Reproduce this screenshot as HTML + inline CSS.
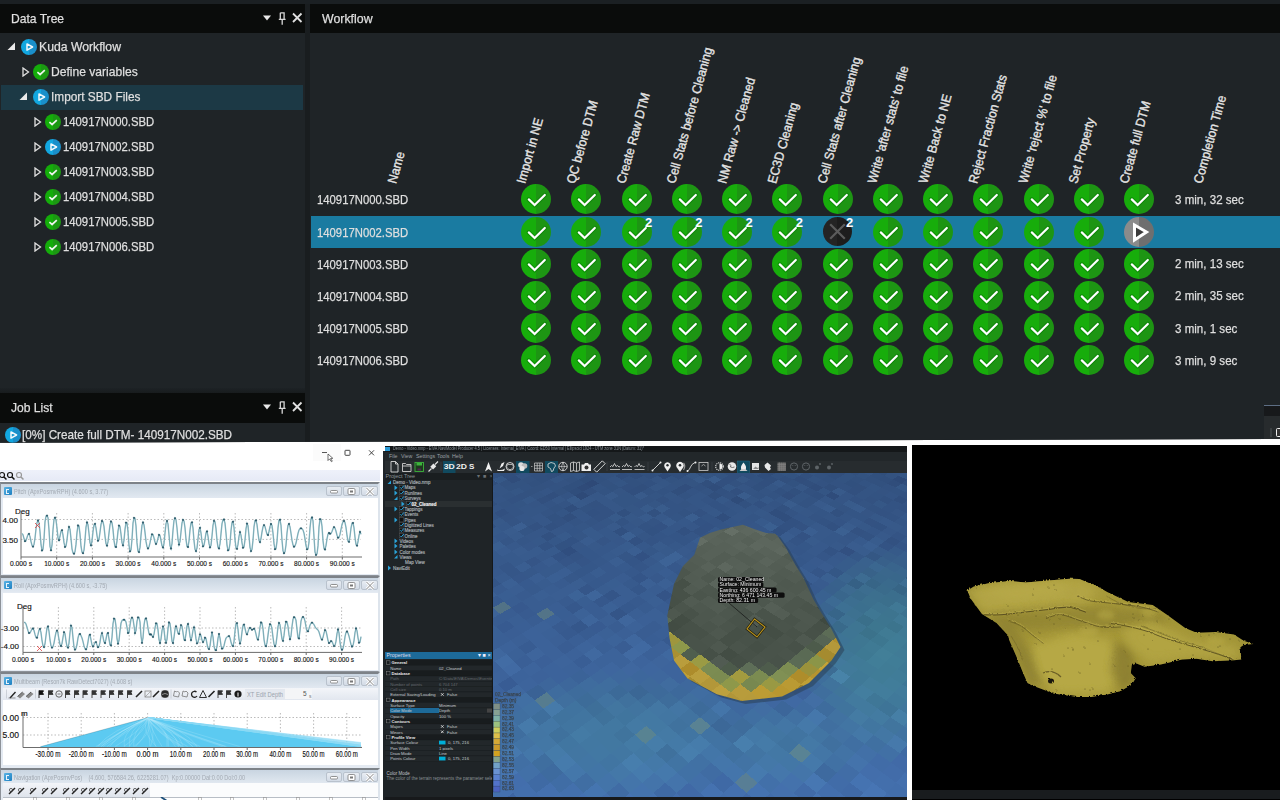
<!DOCTYPE html><html><head><meta charset="utf-8"><style>
*{margin:0;padding:0;box-sizing:border-box}
html,body{width:1280px;height:800px;overflow:hidden;background:#fff;font-family:"Liberation Sans",sans-serif}
.a{position:absolute}
.t{position:absolute;-webkit-text-stroke:.25px #d8d8d8;color:#e2e2e2;font-size:13px;white-space:nowrap;transform-origin:0 0;line-height:15px}
.ic{position:absolute;width:16px;height:16px;border-radius:50%}
.gc{background:linear-gradient(90deg,#14ad0a 50%,#1b9812 50%)}
.bc{background:linear-gradient(90deg,#12a7e0 50%,#1a8fca 50%)}
.circ{position:absolute;width:30px;height:30px;border-radius:50%;background:linear-gradient(90deg,#17ad0b 50%,#1d9513 50%)}
.ch{position:absolute;-webkit-text-stroke:.4px #dcdcdc;color:#e8e8e8;font-size:13px;white-space:nowrap;transform-origin:0 100%;line-height:15px}
</style></head><body>
<div class="a" style="left:0;top:0;width:1280px;height:443px;background:#1b2023;overflow:hidden;clip-path:polygon(0 0,1280px 0,1280px 438.9px,0 442.8px)">
<div class="a" style="left:0;top:4px;width:305px;height:439px;background:#1f2427"></div>
<div class="a" style="left:0;top:4px;width:305px;height:29px;background:#0a0c0b"></div>
<div class="t" style="left:11px;top:11px;transform:scaleX(.93)">Data Tree</div>
<svg class="a" style="left:263px;top:4px" width="42" height="29" viewBox="0 0 42 29"><path d="M0 11.5 L8 11.5 L4 16.5 Z" fill="#e8e8e8"/><path d="M17.3 8.8 h3.8 v6.2 M17.3 8.8 v6.2 M15.8 15.3 h6.8 M19.2 15.3 v5.5" fill="none" stroke="#d8d8d8" stroke-width="1.3"/><path d="M30 9.5 L38.5 18 M38.5 9.5 L30 18" stroke="#e0e0e0" stroke-width="1.8"/></svg>
<div class="a" style="left:1px;top:84.5px;width:302px;height:25px;background:#1c3945"></div>
<svg class="a" style="left:7px;top:42px" width="9" height="9"><path d="M8 0.5 L8 8 L0.5 8 Z" fill="#eaeaea"/></svg>
<div class="ic bc" style="left:21px;top:39.0px;width:16px;height:16px"></div><svg class="a" style="left:21px;top:39.0px" width="16" height="16" viewBox="0 0 16 16"><path d="M6 4.9 L11.6 8 L6 11.1 Z" fill="#1a98cf" stroke="#f2f8fc" stroke-width="1.5" stroke-linejoin="round"/></svg>
<div class="t" style="left:38.5px;top:39px;transform:scaleX(0.94)">Kuda Workflow</div>
<svg class="a" style="left:22px;top:67px" width="8" height="10"><path d="M1 1 L6.5 5 L1 9 Z" fill="none" stroke="#e0e0e0" stroke-width="1.3"/></svg>
<div class="ic gc" style="left:33px;top:64.0px;width:16px;height:16px"></div><svg class="a" style="left:33px;top:64.0px" width="16" height="16" viewBox="0 0 16 16"><path d="M4.4 8.2 L7.1 10.5 L11.8 6.2" fill="none" stroke="#eef4ee" stroke-width="1.7"/></svg>
<div class="t" style="left:50.5px;top:64px;transform:scaleX(0.93)">Define variables</div>
<svg class="a" style="left:19px;top:92px" width="9" height="9"><path d="M8 0.5 L8 8 L0.5 8 Z" fill="#eaeaea"/></svg>
<div class="ic bc" style="left:33px;top:89.0px;width:16px;height:16px"></div><svg class="a" style="left:33px;top:89.0px" width="16" height="16" viewBox="0 0 16 16"><path d="M6 4.9 L11.6 8 L6 11.1 Z" fill="#1a98cf" stroke="#f2f8fc" stroke-width="1.5" stroke-linejoin="round"/></svg>
<div class="t" style="left:50.5px;top:89px;transform:scaleX(0.91)">Import SBD Files</div>
<svg class="a" style="left:34px;top:117px" width="8" height="10"><path d="M1 1 L6.5 5 L1 9 Z" fill="none" stroke="#e0e0e0" stroke-width="1.3"/></svg>
<div class="ic gc" style="left:45px;top:114.0px;width:16px;height:16px"></div><svg class="a" style="left:45px;top:114.0px" width="16" height="16" viewBox="0 0 16 16"><path d="M4.4 8.2 L7.1 10.5 L11.8 6.2" fill="none" stroke="#eef4ee" stroke-width="1.7"/></svg>
<div class="t" style="left:62.5px;top:114px;transform:scaleX(0.87)">140917N000.SBD</div>
<svg class="a" style="left:34px;top:142px" width="8" height="10"><path d="M1 1 L6.5 5 L1 9 Z" fill="none" stroke="#e0e0e0" stroke-width="1.3"/></svg>
<div class="ic bc" style="left:45px;top:139.0px;width:16px;height:16px"></div><svg class="a" style="left:45px;top:139.0px" width="16" height="16" viewBox="0 0 16 16"><path d="M6 4.9 L11.6 8 L6 11.1 Z" fill="#1a98cf" stroke="#f2f8fc" stroke-width="1.5" stroke-linejoin="round"/></svg>
<div class="t" style="left:62.5px;top:139px;transform:scaleX(0.87)">140917N002.SBD</div>
<svg class="a" style="left:34px;top:167px" width="8" height="10"><path d="M1 1 L6.5 5 L1 9 Z" fill="none" stroke="#e0e0e0" stroke-width="1.3"/></svg>
<div class="ic gc" style="left:45px;top:164.0px;width:16px;height:16px"></div><svg class="a" style="left:45px;top:164.0px" width="16" height="16" viewBox="0 0 16 16"><path d="M4.4 8.2 L7.1 10.5 L11.8 6.2" fill="none" stroke="#eef4ee" stroke-width="1.7"/></svg>
<div class="t" style="left:62.5px;top:164px;transform:scaleX(0.87)">140917N003.SBD</div>
<svg class="a" style="left:34px;top:192px" width="8" height="10"><path d="M1 1 L6.5 5 L1 9 Z" fill="none" stroke="#e0e0e0" stroke-width="1.3"/></svg>
<div class="ic gc" style="left:45px;top:189.0px;width:16px;height:16px"></div><svg class="a" style="left:45px;top:189.0px" width="16" height="16" viewBox="0 0 16 16"><path d="M4.4 8.2 L7.1 10.5 L11.8 6.2" fill="none" stroke="#eef4ee" stroke-width="1.7"/></svg>
<div class="t" style="left:62.5px;top:189px;transform:scaleX(0.87)">140917N004.SBD</div>
<svg class="a" style="left:34px;top:217px" width="8" height="10"><path d="M1 1 L6.5 5 L1 9 Z" fill="none" stroke="#e0e0e0" stroke-width="1.3"/></svg>
<div class="ic gc" style="left:45px;top:214.0px;width:16px;height:16px"></div><svg class="a" style="left:45px;top:214.0px" width="16" height="16" viewBox="0 0 16 16"><path d="M4.4 8.2 L7.1 10.5 L11.8 6.2" fill="none" stroke="#eef4ee" stroke-width="1.7"/></svg>
<div class="t" style="left:62.5px;top:214px;transform:scaleX(0.87)">140917N005.SBD</div>
<svg class="a" style="left:34px;top:242px" width="8" height="10"><path d="M1 1 L6.5 5 L1 9 Z" fill="none" stroke="#e0e0e0" stroke-width="1.3"/></svg>
<div class="ic gc" style="left:45px;top:239.0px;width:16px;height:16px"></div><svg class="a" style="left:45px;top:239.0px" width="16" height="16" viewBox="0 0 16 16"><path d="M4.4 8.2 L7.1 10.5 L11.8 6.2" fill="none" stroke="#eef4ee" stroke-width="1.7"/></svg>
<div class="t" style="left:62.5px;top:239px;transform:scaleX(0.87)">140917N006.SBD</div>
<div class="a" style="left:0;top:387.5px;width:305px;height:5px;background:linear-gradient(#1d2225,#181c1e)"></div>
<div class="a" style="left:0;top:392.5px;width:305px;height:30px;background:#0a0c0b"></div>
<div class="t" style="left:11px;top:400px;transform:scaleX(.93)">Job List</div>
<svg class="a" style="left:263px;top:393px" width="42" height="29" viewBox="0 0 42 29"><path d="M0 11.5 L8 11.5 L4 16.5 Z" fill="#e8e8e8"/><path d="M17.3 8.8 h3.8 v6.2 M17.3 8.8 v6.2 M15.8 15.3 h6.8 M19.2 15.3 v5.5" fill="none" stroke="#d8d8d8" stroke-width="1.3"/><path d="M30 9.5 L38.5 18 M38.5 9.5 L30 18" stroke="#e0e0e0" stroke-width="1.8"/></svg>
<div class="ic bc" style="left:5px;top:427.0px;width:16px;height:16px"></div><svg class="a" style="left:5px;top:427.0px" width="16" height="16" viewBox="0 0 16 16"><path d="M6 4.9 L11.6 8 L6 11.1 Z" fill="#1a98cf" stroke="#f2f8fc" stroke-width="1.5" stroke-linejoin="round"/></svg>
<div class="t" style="left:22px;top:427px;transform:scaleX(.9)">[0%] Create full DTM- 140917N002.SBD</div>
<div class="a" style="left:305px;top:4px;width:5px;height:439px;background:#191d1f"></div>
<div class="a" style="left:310px;top:4px;width:970px;height:439px;background:#1f2427"></div>
<div class="a" style="left:310px;top:4px;width:970px;height:29px;background:#0a0c0b"></div>
<div class="t" style="left:322px;top:11px;transform:scaleX(.95)">Workflow</div>
<div class="a" style="left:311px;top:215.6px;width:969px;height:32.5px;background:#1a7ba1"></div>
<div class="t" style="left:316.5px;top:192.3px;transform:scaleX(.87)">140917N000.SBD</div>
<div class="t" style="left:1175px;top:191.9px;transform:scaleX(.89)">3 min, 32 sec</div>
<div class="t" style="left:316.5px;top:224.5px;transform:scaleX(.87)">140917N002.SBD</div>
<div class="t" style="left:316.5px;top:256.7px;transform:scaleX(.87)">140917N003.SBD</div>
<div class="t" style="left:1175px;top:256.3px;transform:scaleX(.89)">2 min, 13 sec</div>
<div class="t" style="left:316.5px;top:288.79999999999995px;transform:scaleX(.87)">140917N004.SBD</div>
<div class="t" style="left:1175px;top:288.4px;transform:scaleX(.89)">2 min, 35 sec</div>
<div class="t" style="left:316.5px;top:321.0px;transform:scaleX(.87)">140917N005.SBD</div>
<div class="t" style="left:1175px;top:320.6px;transform:scaleX(.89)">3 min, 1 sec</div>
<div class="t" style="left:316.5px;top:353.2px;transform:scaleX(.87)">140917N006.SBD</div>
<div class="t" style="left:1175px;top:352.8px;transform:scaleX(.89)">3 min, 9 sec</div>
<div class="ch" style="left:399.1px;top:170px;transform:rotate(-74.5deg) scaleX(0.93)">Name</div>
<div class="ch" style="left:527.5px;top:170px;transform:rotate(-74.5deg) scaleX(0.93)">Import in NE</div>
<div class="ch" style="left:577.75px;top:170px;transform:rotate(-74.5deg) scaleX(0.93)">QC before DTM</div>
<div class="ch" style="left:628.0px;top:170px;transform:rotate(-74.5deg) scaleX(0.93)">Create Raw DTM</div>
<div class="ch" style="left:678.25px;top:170px;transform:rotate(-74.5deg) scaleX(0.93)">Cell Stats before Cleaning</div>
<div class="ch" style="left:728.5px;top:170px;transform:rotate(-74.5deg) scaleX(0.93)">NM Raw -&gt; Cleaned</div>
<div class="ch" style="left:778.75px;top:170px;transform:rotate(-74.5deg) scaleX(0.93)">EC3D Cleaning</div>
<div class="ch" style="left:829.0px;top:170px;transform:rotate(-74.5deg) scaleX(0.93)">Cell Stats after Cleaning</div>
<div class="ch" style="left:879.25px;top:170px;transform:rotate(-74.5deg) scaleX(0.93)">Write 'after stats' to file</div>
<div class="ch" style="left:929.5px;top:170px;transform:rotate(-74.5deg) scaleX(0.93)">Write Back to NE</div>
<div class="ch" style="left:979.75px;top:170px;transform:rotate(-74.5deg) scaleX(0.93)">Reject Fraction Stats</div>
<div class="ch" style="left:1030.0px;top:170px;transform:rotate(-74.5deg) scaleX(0.93)">Write 'reject %' to file</div>
<div class="ch" style="left:1080.25px;top:170px;transform:rotate(-74.5deg) scaleX(0.93)">Set Property</div>
<div class="ch" style="left:1130.5px;top:170px;transform:rotate(-74.5deg) scaleX(0.93)">Create full DTM</div>
<div class="ch" style="left:1204.5px;top:170px;transform:rotate(-74.5deg) scaleX(0.93)">Completion Time</div>
<div class="circ" style="left:521.0px;top:184.4px"><svg class="a" style="left:0;top:0" width="30" height="30" viewBox="0 0 30 30"><path d="M7.8 15.4 L13.6 21 L23.8 11" fill="none" stroke="#0a7a08" stroke-opacity=".55" stroke-width="4.4" stroke-linecap="round"/><path d="M7.8 15.4 L13.6 21 L23.8 11" fill="none" stroke="#fff" stroke-width="2.2" stroke-linecap="round"/></svg></div>
<div class="circ" style="left:571.25px;top:184.4px"><svg class="a" style="left:0;top:0" width="30" height="30" viewBox="0 0 30 30"><path d="M7.8 15.4 L13.6 21 L23.8 11" fill="none" stroke="#0a7a08" stroke-opacity=".55" stroke-width="4.4" stroke-linecap="round"/><path d="M7.8 15.4 L13.6 21 L23.8 11" fill="none" stroke="#fff" stroke-width="2.2" stroke-linecap="round"/></svg></div>
<div class="circ" style="left:621.5px;top:184.4px"><svg class="a" style="left:0;top:0" width="30" height="30" viewBox="0 0 30 30"><path d="M7.8 15.4 L13.6 21 L23.8 11" fill="none" stroke="#0a7a08" stroke-opacity=".55" stroke-width="4.4" stroke-linecap="round"/><path d="M7.8 15.4 L13.6 21 L23.8 11" fill="none" stroke="#fff" stroke-width="2.2" stroke-linecap="round"/></svg></div>
<div class="circ" style="left:671.75px;top:184.4px"><svg class="a" style="left:0;top:0" width="30" height="30" viewBox="0 0 30 30"><path d="M7.8 15.4 L13.6 21 L23.8 11" fill="none" stroke="#0a7a08" stroke-opacity=".55" stroke-width="4.4" stroke-linecap="round"/><path d="M7.8 15.4 L13.6 21 L23.8 11" fill="none" stroke="#fff" stroke-width="2.2" stroke-linecap="round"/></svg></div>
<div class="circ" style="left:722.0px;top:184.4px"><svg class="a" style="left:0;top:0" width="30" height="30" viewBox="0 0 30 30"><path d="M7.8 15.4 L13.6 21 L23.8 11" fill="none" stroke="#0a7a08" stroke-opacity=".55" stroke-width="4.4" stroke-linecap="round"/><path d="M7.8 15.4 L13.6 21 L23.8 11" fill="none" stroke="#fff" stroke-width="2.2" stroke-linecap="round"/></svg></div>
<div class="circ" style="left:772.25px;top:184.4px"><svg class="a" style="left:0;top:0" width="30" height="30" viewBox="0 0 30 30"><path d="M7.8 15.4 L13.6 21 L23.8 11" fill="none" stroke="#0a7a08" stroke-opacity=".55" stroke-width="4.4" stroke-linecap="round"/><path d="M7.8 15.4 L13.6 21 L23.8 11" fill="none" stroke="#fff" stroke-width="2.2" stroke-linecap="round"/></svg></div>
<div class="circ" style="left:822.5px;top:184.4px"><svg class="a" style="left:0;top:0" width="30" height="30" viewBox="0 0 30 30"><path d="M7.8 15.4 L13.6 21 L23.8 11" fill="none" stroke="#0a7a08" stroke-opacity=".55" stroke-width="4.4" stroke-linecap="round"/><path d="M7.8 15.4 L13.6 21 L23.8 11" fill="none" stroke="#fff" stroke-width="2.2" stroke-linecap="round"/></svg></div>
<div class="circ" style="left:872.75px;top:184.4px"><svg class="a" style="left:0;top:0" width="30" height="30" viewBox="0 0 30 30"><path d="M7.8 15.4 L13.6 21 L23.8 11" fill="none" stroke="#0a7a08" stroke-opacity=".55" stroke-width="4.4" stroke-linecap="round"/><path d="M7.8 15.4 L13.6 21 L23.8 11" fill="none" stroke="#fff" stroke-width="2.2" stroke-linecap="round"/></svg></div>
<div class="circ" style="left:923.0px;top:184.4px"><svg class="a" style="left:0;top:0" width="30" height="30" viewBox="0 0 30 30"><path d="M7.8 15.4 L13.6 21 L23.8 11" fill="none" stroke="#0a7a08" stroke-opacity=".55" stroke-width="4.4" stroke-linecap="round"/><path d="M7.8 15.4 L13.6 21 L23.8 11" fill="none" stroke="#fff" stroke-width="2.2" stroke-linecap="round"/></svg></div>
<div class="circ" style="left:973.25px;top:184.4px"><svg class="a" style="left:0;top:0" width="30" height="30" viewBox="0 0 30 30"><path d="M7.8 15.4 L13.6 21 L23.8 11" fill="none" stroke="#0a7a08" stroke-opacity=".55" stroke-width="4.4" stroke-linecap="round"/><path d="M7.8 15.4 L13.6 21 L23.8 11" fill="none" stroke="#fff" stroke-width="2.2" stroke-linecap="round"/></svg></div>
<div class="circ" style="left:1023.5px;top:184.4px"><svg class="a" style="left:0;top:0" width="30" height="30" viewBox="0 0 30 30"><path d="M7.8 15.4 L13.6 21 L23.8 11" fill="none" stroke="#0a7a08" stroke-opacity=".55" stroke-width="4.4" stroke-linecap="round"/><path d="M7.8 15.4 L13.6 21 L23.8 11" fill="none" stroke="#fff" stroke-width="2.2" stroke-linecap="round"/></svg></div>
<div class="circ" style="left:1073.75px;top:184.4px"><svg class="a" style="left:0;top:0" width="30" height="30" viewBox="0 0 30 30"><path d="M7.8 15.4 L13.6 21 L23.8 11" fill="none" stroke="#0a7a08" stroke-opacity=".55" stroke-width="4.4" stroke-linecap="round"/><path d="M7.8 15.4 L13.6 21 L23.8 11" fill="none" stroke="#fff" stroke-width="2.2" stroke-linecap="round"/></svg></div>
<div class="circ" style="left:1124.0px;top:184.4px"><svg class="a" style="left:0;top:0" width="30" height="30" viewBox="0 0 30 30"><path d="M7.8 15.4 L13.6 21 L23.8 11" fill="none" stroke="#0a7a08" stroke-opacity=".55" stroke-width="4.4" stroke-linecap="round"/><path d="M7.8 15.4 L13.6 21 L23.8 11" fill="none" stroke="#fff" stroke-width="2.2" stroke-linecap="round"/></svg></div>
<div class="circ" style="left:521.0px;top:216.6px"><svg class="a" style="left:0;top:0" width="30" height="30" viewBox="0 0 30 30"><path d="M7.8 15.4 L13.6 21 L23.8 11" fill="none" stroke="#0a7a08" stroke-opacity=".55" stroke-width="4.4" stroke-linecap="round"/><path d="M7.8 15.4 L13.6 21 L23.8 11" fill="none" stroke="#fff" stroke-width="2.2" stroke-linecap="round"/></svg></div>
<div class="circ" style="left:571.25px;top:216.6px"><svg class="a" style="left:0;top:0" width="30" height="30" viewBox="0 0 30 30"><path d="M7.8 15.4 L13.6 21 L23.8 11" fill="none" stroke="#0a7a08" stroke-opacity=".55" stroke-width="4.4" stroke-linecap="round"/><path d="M7.8 15.4 L13.6 21 L23.8 11" fill="none" stroke="#fff" stroke-width="2.2" stroke-linecap="round"/></svg></div>
<div class="circ" style="left:621.5px;top:216.6px"><svg class="a" style="left:0;top:0" width="30" height="30" viewBox="0 0 30 30"><path d="M7.8 15.4 L13.6 21 L23.8 11" fill="none" stroke="#0a7a08" stroke-opacity=".55" stroke-width="4.4" stroke-linecap="round"/><path d="M7.8 15.4 L13.6 21 L23.8 11" fill="none" stroke="#fff" stroke-width="2.2" stroke-linecap="round"/></svg></div>
<div class="a" style="left:645.0px;top:214.6px;color:#fff;font-size:13px;font-weight:bold;line-height:15px">2</div>
<div class="circ" style="left:671.75px;top:216.6px"><svg class="a" style="left:0;top:0" width="30" height="30" viewBox="0 0 30 30"><path d="M7.8 15.4 L13.6 21 L23.8 11" fill="none" stroke="#0a7a08" stroke-opacity=".55" stroke-width="4.4" stroke-linecap="round"/><path d="M7.8 15.4 L13.6 21 L23.8 11" fill="none" stroke="#fff" stroke-width="2.2" stroke-linecap="round"/></svg></div>
<div class="a" style="left:695.25px;top:214.6px;color:#fff;font-size:13px;font-weight:bold;line-height:15px">2</div>
<div class="circ" style="left:722.0px;top:216.6px"><svg class="a" style="left:0;top:0" width="30" height="30" viewBox="0 0 30 30"><path d="M7.8 15.4 L13.6 21 L23.8 11" fill="none" stroke="#0a7a08" stroke-opacity=".55" stroke-width="4.4" stroke-linecap="round"/><path d="M7.8 15.4 L13.6 21 L23.8 11" fill="none" stroke="#fff" stroke-width="2.2" stroke-linecap="round"/></svg></div>
<div class="a" style="left:745.5px;top:214.6px;color:#fff;font-size:13px;font-weight:bold;line-height:15px">2</div>
<div class="circ" style="left:772.25px;top:216.6px"><svg class="a" style="left:0;top:0" width="30" height="30" viewBox="0 0 30 30"><path d="M7.8 15.4 L13.6 21 L23.8 11" fill="none" stroke="#0a7a08" stroke-opacity=".55" stroke-width="4.4" stroke-linecap="round"/><path d="M7.8 15.4 L13.6 21 L23.8 11" fill="none" stroke="#fff" stroke-width="2.2" stroke-linecap="round"/></svg></div>
<div class="a" style="left:795.75px;top:214.6px;color:#fff;font-size:13px;font-weight:bold;line-height:15px">2</div>
<div class="circ" style="left:822.5px;top:216.6px;width:29px;height:29px;left:823.0px;top:217.1px;background:linear-gradient(90deg,#242424 50%,#1d1d1d 50%)"><svg class="a" width="29" height="29"><path d="M7.2 7.2 L21.8 21.8 M21.8 7.2 L7.2 21.8" stroke="#5c5c5c" stroke-width="2.2"/></svg></div>
<div class="a" style="left:846.0px;top:214.6px;color:#fff;font-size:13px;font-weight:bold;line-height:15px">2</div>
<div class="circ" style="left:872.75px;top:216.6px"><svg class="a" style="left:0;top:0" width="30" height="30" viewBox="0 0 30 30"><path d="M7.8 15.4 L13.6 21 L23.8 11" fill="none" stroke="#0a7a08" stroke-opacity=".55" stroke-width="4.4" stroke-linecap="round"/><path d="M7.8 15.4 L13.6 21 L23.8 11" fill="none" stroke="#fff" stroke-width="2.2" stroke-linecap="round"/></svg></div>
<div class="circ" style="left:923.0px;top:216.6px"><svg class="a" style="left:0;top:0" width="30" height="30" viewBox="0 0 30 30"><path d="M7.8 15.4 L13.6 21 L23.8 11" fill="none" stroke="#0a7a08" stroke-opacity=".55" stroke-width="4.4" stroke-linecap="round"/><path d="M7.8 15.4 L13.6 21 L23.8 11" fill="none" stroke="#fff" stroke-width="2.2" stroke-linecap="round"/></svg></div>
<div class="circ" style="left:973.25px;top:216.6px"><svg class="a" style="left:0;top:0" width="30" height="30" viewBox="0 0 30 30"><path d="M7.8 15.4 L13.6 21 L23.8 11" fill="none" stroke="#0a7a08" stroke-opacity=".55" stroke-width="4.4" stroke-linecap="round"/><path d="M7.8 15.4 L13.6 21 L23.8 11" fill="none" stroke="#fff" stroke-width="2.2" stroke-linecap="round"/></svg></div>
<div class="circ" style="left:1023.5px;top:216.6px"><svg class="a" style="left:0;top:0" width="30" height="30" viewBox="0 0 30 30"><path d="M7.8 15.4 L13.6 21 L23.8 11" fill="none" stroke="#0a7a08" stroke-opacity=".55" stroke-width="4.4" stroke-linecap="round"/><path d="M7.8 15.4 L13.6 21 L23.8 11" fill="none" stroke="#fff" stroke-width="2.2" stroke-linecap="round"/></svg></div>
<div class="circ" style="left:1073.75px;top:216.6px"><svg class="a" style="left:0;top:0" width="30" height="30" viewBox="0 0 30 30"><path d="M7.8 15.4 L13.6 21 L23.8 11" fill="none" stroke="#0a7a08" stroke-opacity=".55" stroke-width="4.4" stroke-linecap="round"/><path d="M7.8 15.4 L13.6 21 L23.8 11" fill="none" stroke="#fff" stroke-width="2.2" stroke-linecap="round"/></svg></div>
<div class="circ" style="left:1124.0px;top:216.6px;background:linear-gradient(90deg,#8b8b8b 50%,#6f6f6f 50%)"><svg class="a" width="30" height="30"><path d="M10.5 8 L22.5 15 L10.5 23 Z" fill="#3c3c3c" stroke="#fff" stroke-width="3" stroke-linejoin="miter"/></svg></div>
<div class="circ" style="left:521.0px;top:248.8px"><svg class="a" style="left:0;top:0" width="30" height="30" viewBox="0 0 30 30"><path d="M7.8 15.4 L13.6 21 L23.8 11" fill="none" stroke="#0a7a08" stroke-opacity=".55" stroke-width="4.4" stroke-linecap="round"/><path d="M7.8 15.4 L13.6 21 L23.8 11" fill="none" stroke="#fff" stroke-width="2.2" stroke-linecap="round"/></svg></div>
<div class="circ" style="left:571.25px;top:248.8px"><svg class="a" style="left:0;top:0" width="30" height="30" viewBox="0 0 30 30"><path d="M7.8 15.4 L13.6 21 L23.8 11" fill="none" stroke="#0a7a08" stroke-opacity=".55" stroke-width="4.4" stroke-linecap="round"/><path d="M7.8 15.4 L13.6 21 L23.8 11" fill="none" stroke="#fff" stroke-width="2.2" stroke-linecap="round"/></svg></div>
<div class="circ" style="left:621.5px;top:248.8px"><svg class="a" style="left:0;top:0" width="30" height="30" viewBox="0 0 30 30"><path d="M7.8 15.4 L13.6 21 L23.8 11" fill="none" stroke="#0a7a08" stroke-opacity=".55" stroke-width="4.4" stroke-linecap="round"/><path d="M7.8 15.4 L13.6 21 L23.8 11" fill="none" stroke="#fff" stroke-width="2.2" stroke-linecap="round"/></svg></div>
<div class="circ" style="left:671.75px;top:248.8px"><svg class="a" style="left:0;top:0" width="30" height="30" viewBox="0 0 30 30"><path d="M7.8 15.4 L13.6 21 L23.8 11" fill="none" stroke="#0a7a08" stroke-opacity=".55" stroke-width="4.4" stroke-linecap="round"/><path d="M7.8 15.4 L13.6 21 L23.8 11" fill="none" stroke="#fff" stroke-width="2.2" stroke-linecap="round"/></svg></div>
<div class="circ" style="left:722.0px;top:248.8px"><svg class="a" style="left:0;top:0" width="30" height="30" viewBox="0 0 30 30"><path d="M7.8 15.4 L13.6 21 L23.8 11" fill="none" stroke="#0a7a08" stroke-opacity=".55" stroke-width="4.4" stroke-linecap="round"/><path d="M7.8 15.4 L13.6 21 L23.8 11" fill="none" stroke="#fff" stroke-width="2.2" stroke-linecap="round"/></svg></div>
<div class="circ" style="left:772.25px;top:248.8px"><svg class="a" style="left:0;top:0" width="30" height="30" viewBox="0 0 30 30"><path d="M7.8 15.4 L13.6 21 L23.8 11" fill="none" stroke="#0a7a08" stroke-opacity=".55" stroke-width="4.4" stroke-linecap="round"/><path d="M7.8 15.4 L13.6 21 L23.8 11" fill="none" stroke="#fff" stroke-width="2.2" stroke-linecap="round"/></svg></div>
<div class="circ" style="left:822.5px;top:248.8px"><svg class="a" style="left:0;top:0" width="30" height="30" viewBox="0 0 30 30"><path d="M7.8 15.4 L13.6 21 L23.8 11" fill="none" stroke="#0a7a08" stroke-opacity=".55" stroke-width="4.4" stroke-linecap="round"/><path d="M7.8 15.4 L13.6 21 L23.8 11" fill="none" stroke="#fff" stroke-width="2.2" stroke-linecap="round"/></svg></div>
<div class="circ" style="left:872.75px;top:248.8px"><svg class="a" style="left:0;top:0" width="30" height="30" viewBox="0 0 30 30"><path d="M7.8 15.4 L13.6 21 L23.8 11" fill="none" stroke="#0a7a08" stroke-opacity=".55" stroke-width="4.4" stroke-linecap="round"/><path d="M7.8 15.4 L13.6 21 L23.8 11" fill="none" stroke="#fff" stroke-width="2.2" stroke-linecap="round"/></svg></div>
<div class="circ" style="left:923.0px;top:248.8px"><svg class="a" style="left:0;top:0" width="30" height="30" viewBox="0 0 30 30"><path d="M7.8 15.4 L13.6 21 L23.8 11" fill="none" stroke="#0a7a08" stroke-opacity=".55" stroke-width="4.4" stroke-linecap="round"/><path d="M7.8 15.4 L13.6 21 L23.8 11" fill="none" stroke="#fff" stroke-width="2.2" stroke-linecap="round"/></svg></div>
<div class="circ" style="left:973.25px;top:248.8px"><svg class="a" style="left:0;top:0" width="30" height="30" viewBox="0 0 30 30"><path d="M7.8 15.4 L13.6 21 L23.8 11" fill="none" stroke="#0a7a08" stroke-opacity=".55" stroke-width="4.4" stroke-linecap="round"/><path d="M7.8 15.4 L13.6 21 L23.8 11" fill="none" stroke="#fff" stroke-width="2.2" stroke-linecap="round"/></svg></div>
<div class="circ" style="left:1023.5px;top:248.8px"><svg class="a" style="left:0;top:0" width="30" height="30" viewBox="0 0 30 30"><path d="M7.8 15.4 L13.6 21 L23.8 11" fill="none" stroke="#0a7a08" stroke-opacity=".55" stroke-width="4.4" stroke-linecap="round"/><path d="M7.8 15.4 L13.6 21 L23.8 11" fill="none" stroke="#fff" stroke-width="2.2" stroke-linecap="round"/></svg></div>
<div class="circ" style="left:1073.75px;top:248.8px"><svg class="a" style="left:0;top:0" width="30" height="30" viewBox="0 0 30 30"><path d="M7.8 15.4 L13.6 21 L23.8 11" fill="none" stroke="#0a7a08" stroke-opacity=".55" stroke-width="4.4" stroke-linecap="round"/><path d="M7.8 15.4 L13.6 21 L23.8 11" fill="none" stroke="#fff" stroke-width="2.2" stroke-linecap="round"/></svg></div>
<div class="circ" style="left:1124.0px;top:248.8px"><svg class="a" style="left:0;top:0" width="30" height="30" viewBox="0 0 30 30"><path d="M7.8 15.4 L13.6 21 L23.8 11" fill="none" stroke="#0a7a08" stroke-opacity=".55" stroke-width="4.4" stroke-linecap="round"/><path d="M7.8 15.4 L13.6 21 L23.8 11" fill="none" stroke="#fff" stroke-width="2.2" stroke-linecap="round"/></svg></div>
<div class="circ" style="left:521.0px;top:280.9px"><svg class="a" style="left:0;top:0" width="30" height="30" viewBox="0 0 30 30"><path d="M7.8 15.4 L13.6 21 L23.8 11" fill="none" stroke="#0a7a08" stroke-opacity=".55" stroke-width="4.4" stroke-linecap="round"/><path d="M7.8 15.4 L13.6 21 L23.8 11" fill="none" stroke="#fff" stroke-width="2.2" stroke-linecap="round"/></svg></div>
<div class="circ" style="left:571.25px;top:280.9px"><svg class="a" style="left:0;top:0" width="30" height="30" viewBox="0 0 30 30"><path d="M7.8 15.4 L13.6 21 L23.8 11" fill="none" stroke="#0a7a08" stroke-opacity=".55" stroke-width="4.4" stroke-linecap="round"/><path d="M7.8 15.4 L13.6 21 L23.8 11" fill="none" stroke="#fff" stroke-width="2.2" stroke-linecap="round"/></svg></div>
<div class="circ" style="left:621.5px;top:280.9px"><svg class="a" style="left:0;top:0" width="30" height="30" viewBox="0 0 30 30"><path d="M7.8 15.4 L13.6 21 L23.8 11" fill="none" stroke="#0a7a08" stroke-opacity=".55" stroke-width="4.4" stroke-linecap="round"/><path d="M7.8 15.4 L13.6 21 L23.8 11" fill="none" stroke="#fff" stroke-width="2.2" stroke-linecap="round"/></svg></div>
<div class="circ" style="left:671.75px;top:280.9px"><svg class="a" style="left:0;top:0" width="30" height="30" viewBox="0 0 30 30"><path d="M7.8 15.4 L13.6 21 L23.8 11" fill="none" stroke="#0a7a08" stroke-opacity=".55" stroke-width="4.4" stroke-linecap="round"/><path d="M7.8 15.4 L13.6 21 L23.8 11" fill="none" stroke="#fff" stroke-width="2.2" stroke-linecap="round"/></svg></div>
<div class="circ" style="left:722.0px;top:280.9px"><svg class="a" style="left:0;top:0" width="30" height="30" viewBox="0 0 30 30"><path d="M7.8 15.4 L13.6 21 L23.8 11" fill="none" stroke="#0a7a08" stroke-opacity=".55" stroke-width="4.4" stroke-linecap="round"/><path d="M7.8 15.4 L13.6 21 L23.8 11" fill="none" stroke="#fff" stroke-width="2.2" stroke-linecap="round"/></svg></div>
<div class="circ" style="left:772.25px;top:280.9px"><svg class="a" style="left:0;top:0" width="30" height="30" viewBox="0 0 30 30"><path d="M7.8 15.4 L13.6 21 L23.8 11" fill="none" stroke="#0a7a08" stroke-opacity=".55" stroke-width="4.4" stroke-linecap="round"/><path d="M7.8 15.4 L13.6 21 L23.8 11" fill="none" stroke="#fff" stroke-width="2.2" stroke-linecap="round"/></svg></div>
<div class="circ" style="left:822.5px;top:280.9px"><svg class="a" style="left:0;top:0" width="30" height="30" viewBox="0 0 30 30"><path d="M7.8 15.4 L13.6 21 L23.8 11" fill="none" stroke="#0a7a08" stroke-opacity=".55" stroke-width="4.4" stroke-linecap="round"/><path d="M7.8 15.4 L13.6 21 L23.8 11" fill="none" stroke="#fff" stroke-width="2.2" stroke-linecap="round"/></svg></div>
<div class="circ" style="left:872.75px;top:280.9px"><svg class="a" style="left:0;top:0" width="30" height="30" viewBox="0 0 30 30"><path d="M7.8 15.4 L13.6 21 L23.8 11" fill="none" stroke="#0a7a08" stroke-opacity=".55" stroke-width="4.4" stroke-linecap="round"/><path d="M7.8 15.4 L13.6 21 L23.8 11" fill="none" stroke="#fff" stroke-width="2.2" stroke-linecap="round"/></svg></div>
<div class="circ" style="left:923.0px;top:280.9px"><svg class="a" style="left:0;top:0" width="30" height="30" viewBox="0 0 30 30"><path d="M7.8 15.4 L13.6 21 L23.8 11" fill="none" stroke="#0a7a08" stroke-opacity=".55" stroke-width="4.4" stroke-linecap="round"/><path d="M7.8 15.4 L13.6 21 L23.8 11" fill="none" stroke="#fff" stroke-width="2.2" stroke-linecap="round"/></svg></div>
<div class="circ" style="left:973.25px;top:280.9px"><svg class="a" style="left:0;top:0" width="30" height="30" viewBox="0 0 30 30"><path d="M7.8 15.4 L13.6 21 L23.8 11" fill="none" stroke="#0a7a08" stroke-opacity=".55" stroke-width="4.4" stroke-linecap="round"/><path d="M7.8 15.4 L13.6 21 L23.8 11" fill="none" stroke="#fff" stroke-width="2.2" stroke-linecap="round"/></svg></div>
<div class="circ" style="left:1023.5px;top:280.9px"><svg class="a" style="left:0;top:0" width="30" height="30" viewBox="0 0 30 30"><path d="M7.8 15.4 L13.6 21 L23.8 11" fill="none" stroke="#0a7a08" stroke-opacity=".55" stroke-width="4.4" stroke-linecap="round"/><path d="M7.8 15.4 L13.6 21 L23.8 11" fill="none" stroke="#fff" stroke-width="2.2" stroke-linecap="round"/></svg></div>
<div class="circ" style="left:1073.75px;top:280.9px"><svg class="a" style="left:0;top:0" width="30" height="30" viewBox="0 0 30 30"><path d="M7.8 15.4 L13.6 21 L23.8 11" fill="none" stroke="#0a7a08" stroke-opacity=".55" stroke-width="4.4" stroke-linecap="round"/><path d="M7.8 15.4 L13.6 21 L23.8 11" fill="none" stroke="#fff" stroke-width="2.2" stroke-linecap="round"/></svg></div>
<div class="circ" style="left:1124.0px;top:280.9px"><svg class="a" style="left:0;top:0" width="30" height="30" viewBox="0 0 30 30"><path d="M7.8 15.4 L13.6 21 L23.8 11" fill="none" stroke="#0a7a08" stroke-opacity=".55" stroke-width="4.4" stroke-linecap="round"/><path d="M7.8 15.4 L13.6 21 L23.8 11" fill="none" stroke="#fff" stroke-width="2.2" stroke-linecap="round"/></svg></div>
<div class="circ" style="left:521.0px;top:313.1px"><svg class="a" style="left:0;top:0" width="30" height="30" viewBox="0 0 30 30"><path d="M7.8 15.4 L13.6 21 L23.8 11" fill="none" stroke="#0a7a08" stroke-opacity=".55" stroke-width="4.4" stroke-linecap="round"/><path d="M7.8 15.4 L13.6 21 L23.8 11" fill="none" stroke="#fff" stroke-width="2.2" stroke-linecap="round"/></svg></div>
<div class="circ" style="left:571.25px;top:313.1px"><svg class="a" style="left:0;top:0" width="30" height="30" viewBox="0 0 30 30"><path d="M7.8 15.4 L13.6 21 L23.8 11" fill="none" stroke="#0a7a08" stroke-opacity=".55" stroke-width="4.4" stroke-linecap="round"/><path d="M7.8 15.4 L13.6 21 L23.8 11" fill="none" stroke="#fff" stroke-width="2.2" stroke-linecap="round"/></svg></div>
<div class="circ" style="left:621.5px;top:313.1px"><svg class="a" style="left:0;top:0" width="30" height="30" viewBox="0 0 30 30"><path d="M7.8 15.4 L13.6 21 L23.8 11" fill="none" stroke="#0a7a08" stroke-opacity=".55" stroke-width="4.4" stroke-linecap="round"/><path d="M7.8 15.4 L13.6 21 L23.8 11" fill="none" stroke="#fff" stroke-width="2.2" stroke-linecap="round"/></svg></div>
<div class="circ" style="left:671.75px;top:313.1px"><svg class="a" style="left:0;top:0" width="30" height="30" viewBox="0 0 30 30"><path d="M7.8 15.4 L13.6 21 L23.8 11" fill="none" stroke="#0a7a08" stroke-opacity=".55" stroke-width="4.4" stroke-linecap="round"/><path d="M7.8 15.4 L13.6 21 L23.8 11" fill="none" stroke="#fff" stroke-width="2.2" stroke-linecap="round"/></svg></div>
<div class="circ" style="left:722.0px;top:313.1px"><svg class="a" style="left:0;top:0" width="30" height="30" viewBox="0 0 30 30"><path d="M7.8 15.4 L13.6 21 L23.8 11" fill="none" stroke="#0a7a08" stroke-opacity=".55" stroke-width="4.4" stroke-linecap="round"/><path d="M7.8 15.4 L13.6 21 L23.8 11" fill="none" stroke="#fff" stroke-width="2.2" stroke-linecap="round"/></svg></div>
<div class="circ" style="left:772.25px;top:313.1px"><svg class="a" style="left:0;top:0" width="30" height="30" viewBox="0 0 30 30"><path d="M7.8 15.4 L13.6 21 L23.8 11" fill="none" stroke="#0a7a08" stroke-opacity=".55" stroke-width="4.4" stroke-linecap="round"/><path d="M7.8 15.4 L13.6 21 L23.8 11" fill="none" stroke="#fff" stroke-width="2.2" stroke-linecap="round"/></svg></div>
<div class="circ" style="left:822.5px;top:313.1px"><svg class="a" style="left:0;top:0" width="30" height="30" viewBox="0 0 30 30"><path d="M7.8 15.4 L13.6 21 L23.8 11" fill="none" stroke="#0a7a08" stroke-opacity=".55" stroke-width="4.4" stroke-linecap="round"/><path d="M7.8 15.4 L13.6 21 L23.8 11" fill="none" stroke="#fff" stroke-width="2.2" stroke-linecap="round"/></svg></div>
<div class="circ" style="left:872.75px;top:313.1px"><svg class="a" style="left:0;top:0" width="30" height="30" viewBox="0 0 30 30"><path d="M7.8 15.4 L13.6 21 L23.8 11" fill="none" stroke="#0a7a08" stroke-opacity=".55" stroke-width="4.4" stroke-linecap="round"/><path d="M7.8 15.4 L13.6 21 L23.8 11" fill="none" stroke="#fff" stroke-width="2.2" stroke-linecap="round"/></svg></div>
<div class="circ" style="left:923.0px;top:313.1px"><svg class="a" style="left:0;top:0" width="30" height="30" viewBox="0 0 30 30"><path d="M7.8 15.4 L13.6 21 L23.8 11" fill="none" stroke="#0a7a08" stroke-opacity=".55" stroke-width="4.4" stroke-linecap="round"/><path d="M7.8 15.4 L13.6 21 L23.8 11" fill="none" stroke="#fff" stroke-width="2.2" stroke-linecap="round"/></svg></div>
<div class="circ" style="left:973.25px;top:313.1px"><svg class="a" style="left:0;top:0" width="30" height="30" viewBox="0 0 30 30"><path d="M7.8 15.4 L13.6 21 L23.8 11" fill="none" stroke="#0a7a08" stroke-opacity=".55" stroke-width="4.4" stroke-linecap="round"/><path d="M7.8 15.4 L13.6 21 L23.8 11" fill="none" stroke="#fff" stroke-width="2.2" stroke-linecap="round"/></svg></div>
<div class="circ" style="left:1023.5px;top:313.1px"><svg class="a" style="left:0;top:0" width="30" height="30" viewBox="0 0 30 30"><path d="M7.8 15.4 L13.6 21 L23.8 11" fill="none" stroke="#0a7a08" stroke-opacity=".55" stroke-width="4.4" stroke-linecap="round"/><path d="M7.8 15.4 L13.6 21 L23.8 11" fill="none" stroke="#fff" stroke-width="2.2" stroke-linecap="round"/></svg></div>
<div class="circ" style="left:1073.75px;top:313.1px"><svg class="a" style="left:0;top:0" width="30" height="30" viewBox="0 0 30 30"><path d="M7.8 15.4 L13.6 21 L23.8 11" fill="none" stroke="#0a7a08" stroke-opacity=".55" stroke-width="4.4" stroke-linecap="round"/><path d="M7.8 15.4 L13.6 21 L23.8 11" fill="none" stroke="#fff" stroke-width="2.2" stroke-linecap="round"/></svg></div>
<div class="circ" style="left:1124.0px;top:313.1px"><svg class="a" style="left:0;top:0" width="30" height="30" viewBox="0 0 30 30"><path d="M7.8 15.4 L13.6 21 L23.8 11" fill="none" stroke="#0a7a08" stroke-opacity=".55" stroke-width="4.4" stroke-linecap="round"/><path d="M7.8 15.4 L13.6 21 L23.8 11" fill="none" stroke="#fff" stroke-width="2.2" stroke-linecap="round"/></svg></div>
<div class="circ" style="left:521.0px;top:345.3px"><svg class="a" style="left:0;top:0" width="30" height="30" viewBox="0 0 30 30"><path d="M7.8 15.4 L13.6 21 L23.8 11" fill="none" stroke="#0a7a08" stroke-opacity=".55" stroke-width="4.4" stroke-linecap="round"/><path d="M7.8 15.4 L13.6 21 L23.8 11" fill="none" stroke="#fff" stroke-width="2.2" stroke-linecap="round"/></svg></div>
<div class="circ" style="left:571.25px;top:345.3px"><svg class="a" style="left:0;top:0" width="30" height="30" viewBox="0 0 30 30"><path d="M7.8 15.4 L13.6 21 L23.8 11" fill="none" stroke="#0a7a08" stroke-opacity=".55" stroke-width="4.4" stroke-linecap="round"/><path d="M7.8 15.4 L13.6 21 L23.8 11" fill="none" stroke="#fff" stroke-width="2.2" stroke-linecap="round"/></svg></div>
<div class="circ" style="left:621.5px;top:345.3px"><svg class="a" style="left:0;top:0" width="30" height="30" viewBox="0 0 30 30"><path d="M7.8 15.4 L13.6 21 L23.8 11" fill="none" stroke="#0a7a08" stroke-opacity=".55" stroke-width="4.4" stroke-linecap="round"/><path d="M7.8 15.4 L13.6 21 L23.8 11" fill="none" stroke="#fff" stroke-width="2.2" stroke-linecap="round"/></svg></div>
<div class="circ" style="left:671.75px;top:345.3px"><svg class="a" style="left:0;top:0" width="30" height="30" viewBox="0 0 30 30"><path d="M7.8 15.4 L13.6 21 L23.8 11" fill="none" stroke="#0a7a08" stroke-opacity=".55" stroke-width="4.4" stroke-linecap="round"/><path d="M7.8 15.4 L13.6 21 L23.8 11" fill="none" stroke="#fff" stroke-width="2.2" stroke-linecap="round"/></svg></div>
<div class="circ" style="left:722.0px;top:345.3px"><svg class="a" style="left:0;top:0" width="30" height="30" viewBox="0 0 30 30"><path d="M7.8 15.4 L13.6 21 L23.8 11" fill="none" stroke="#0a7a08" stroke-opacity=".55" stroke-width="4.4" stroke-linecap="round"/><path d="M7.8 15.4 L13.6 21 L23.8 11" fill="none" stroke="#fff" stroke-width="2.2" stroke-linecap="round"/></svg></div>
<div class="circ" style="left:772.25px;top:345.3px"><svg class="a" style="left:0;top:0" width="30" height="30" viewBox="0 0 30 30"><path d="M7.8 15.4 L13.6 21 L23.8 11" fill="none" stroke="#0a7a08" stroke-opacity=".55" stroke-width="4.4" stroke-linecap="round"/><path d="M7.8 15.4 L13.6 21 L23.8 11" fill="none" stroke="#fff" stroke-width="2.2" stroke-linecap="round"/></svg></div>
<div class="circ" style="left:822.5px;top:345.3px"><svg class="a" style="left:0;top:0" width="30" height="30" viewBox="0 0 30 30"><path d="M7.8 15.4 L13.6 21 L23.8 11" fill="none" stroke="#0a7a08" stroke-opacity=".55" stroke-width="4.4" stroke-linecap="round"/><path d="M7.8 15.4 L13.6 21 L23.8 11" fill="none" stroke="#fff" stroke-width="2.2" stroke-linecap="round"/></svg></div>
<div class="circ" style="left:872.75px;top:345.3px"><svg class="a" style="left:0;top:0" width="30" height="30" viewBox="0 0 30 30"><path d="M7.8 15.4 L13.6 21 L23.8 11" fill="none" stroke="#0a7a08" stroke-opacity=".55" stroke-width="4.4" stroke-linecap="round"/><path d="M7.8 15.4 L13.6 21 L23.8 11" fill="none" stroke="#fff" stroke-width="2.2" stroke-linecap="round"/></svg></div>
<div class="circ" style="left:923.0px;top:345.3px"><svg class="a" style="left:0;top:0" width="30" height="30" viewBox="0 0 30 30"><path d="M7.8 15.4 L13.6 21 L23.8 11" fill="none" stroke="#0a7a08" stroke-opacity=".55" stroke-width="4.4" stroke-linecap="round"/><path d="M7.8 15.4 L13.6 21 L23.8 11" fill="none" stroke="#fff" stroke-width="2.2" stroke-linecap="round"/></svg></div>
<div class="circ" style="left:973.25px;top:345.3px"><svg class="a" style="left:0;top:0" width="30" height="30" viewBox="0 0 30 30"><path d="M7.8 15.4 L13.6 21 L23.8 11" fill="none" stroke="#0a7a08" stroke-opacity=".55" stroke-width="4.4" stroke-linecap="round"/><path d="M7.8 15.4 L13.6 21 L23.8 11" fill="none" stroke="#fff" stroke-width="2.2" stroke-linecap="round"/></svg></div>
<div class="circ" style="left:1023.5px;top:345.3px"><svg class="a" style="left:0;top:0" width="30" height="30" viewBox="0 0 30 30"><path d="M7.8 15.4 L13.6 21 L23.8 11" fill="none" stroke="#0a7a08" stroke-opacity=".55" stroke-width="4.4" stroke-linecap="round"/><path d="M7.8 15.4 L13.6 21 L23.8 11" fill="none" stroke="#fff" stroke-width="2.2" stroke-linecap="round"/></svg></div>
<div class="circ" style="left:1073.75px;top:345.3px"><svg class="a" style="left:0;top:0" width="30" height="30" viewBox="0 0 30 30"><path d="M7.8 15.4 L13.6 21 L23.8 11" fill="none" stroke="#0a7a08" stroke-opacity=".55" stroke-width="4.4" stroke-linecap="round"/><path d="M7.8 15.4 L13.6 21 L23.8 11" fill="none" stroke="#fff" stroke-width="2.2" stroke-linecap="round"/></svg></div>
<div class="circ" style="left:1124.0px;top:345.3px"><svg class="a" style="left:0;top:0" width="30" height="30" viewBox="0 0 30 30"><path d="M7.8 15.4 L13.6 21 L23.8 11" fill="none" stroke="#0a7a08" stroke-opacity=".55" stroke-width="4.4" stroke-linecap="round"/><path d="M7.8 15.4 L13.6 21 L23.8 11" fill="none" stroke="#fff" stroke-width="2.2" stroke-linecap="round"/></svg></div>
<div class="a" style="left:1264px;top:405px;width:16px;height:36px;background:#272b2d"></div>
<div class="a" style="left:1264px;top:405px;width:16px;height:1.2px;background:#5d6e84"></div>
<div class="a" style="left:1264px;top:406.2px;width:16px;height:10px;background:#17191b"></div>
<div class="a" style="left:1275.5px;top:428px;width:6px;height:9px;border:1.3px solid #eee;border-radius:1.5px;background:#333"></div>
<div class="a" style="left:1270px;top:428px;width:1.5px;height:9px;background:#3a3f41"></div>
</div>
<div class="a" style="left:0;top:442px;width:380px;height:358px;overflow:hidden">
<svg class="a" style="left:0;top:0" width="380" height="30"><rect x="313" y="2" width="28" height="17" fill="#fbfbfb"/><path d="M322 10.5 h5" stroke="#444" stroke-width=".9"/><path d="M328 12 l0 6.5 l1.6 -1.6 l1.8 2.8 l.9 -.5 l-1.7 -2.7 l2.2 -.2 Z" fill="#fff" stroke="#333" stroke-width=".7"/><rect x="345" y="8.3" width="5" height="5" rx=".6" fill="none" stroke="#333" stroke-width=".9"/><path d="M369 8.3 l5 5 M374 8.3 l-5 5" stroke="#333" stroke-width=".9"/></svg>
<div class="a" style="left:0px;top:28px;width:380px;height:11px;background:linear-gradient(#eef1fa,#e6eaf6)"></div>
<svg class="a" style="left:0;top:28px" width="30" height="12"><circle cx="2" cy="5" r="2.5" fill="none" stroke="#111" stroke-width="1.2"/><path d="M4 7 l2.5 2.5" stroke="#111" stroke-width="1.5"/><circle cx="10" cy="5" r="2.5" fill="none" stroke="#111" stroke-width="1.2"/><path d="M12 7 l2.5 2.5" stroke="#111" stroke-width="1.5"/><circle cx="19" cy="5" r="2.5" fill="none" stroke="#999" stroke-width="1.2"/><path d="M21 7 l2.5 2.5" stroke="#999" stroke-width="1.5"/></svg>
<div class="a" style="left:0px;top:40px;width:380px;height:94px;background:#e4eaf2;border:1px solid #8d9299;border-right:2px solid #dde4ec;border-top:2px solid #7d8288"></div><div class="a" style="left:1px;top:42px;width:377px;height:14px;background:linear-gradient(#c9d5e1,#e2e9f1)"></div><div class="a" style="left:4px;top:45px;width:8px;height:8px;background:linear-gradient(135deg,#5ab4e6,#1d7fc0);border-radius:1px"></div><div class="a" style="left:6px;top:46.5px;width:3px;height:5px;border:1px solid #e8f4fc;border-right:none"></div><div class="a" style="left:14px;top:44.80000000000001px;font-size:6.6px;color:#a3aab3;white-space:nowrap;line-height:9px;transform:scaleX(0.85);transform-origin:0 0">Pitch (ApxPosmvRPH) (4.600 s, 3.77)</div><div class="a" style="left:325.5px;top:44px;width:16.5px;height:10px;border:1px solid #b9c2cd;border-radius:2px;background:linear-gradient(#e8edf3,#d3dbe6)"></div><div class="a" style="left:343px;top:44px;width:16.5px;height:10px;border:1px solid #b9c2cd;border-radius:2px;background:linear-gradient(#e8edf3,#d3dbe6)"></div><div class="a" style="left:361px;top:44px;width:16.5px;height:10px;border:1px solid #b9c2cd;border-radius:2px;background:linear-gradient(#e8edf3,#d3dbe6)"></div><svg class="a" style="left:325px;top:44px" width="54" height="11"><rect x="5.5" y="4.5" width="7" height="2.5" rx="1" fill="#fff" stroke="#777" stroke-width=".8"/><rect x="23" y="2.5" width="7" height="6" rx="1.2" fill="#fff" stroke="#777" stroke-width=".8"/><rect x="25" y="4.5" width="3" height="2" fill="#777"/><path d="M41.5 2 l7 7 M48.5 2 l-7 7" stroke="#fff" stroke-width="2.6"/><path d="M41.5 2 l7 7 M48.5 2 l-7 7" stroke="#888" stroke-width="1" /></svg>
<div class="a" style="left:3px;top:56px;width:375px;height:76px;background:#fff"></div>
<svg class="a" style="left:0;top:56px" width="380" height="78" font-family="Liberation Sans" font-size="8.5" stroke="#111" stroke-width=".15"><path d="M21 21.5 H361" stroke="#aaa" stroke-width=".8" stroke-dasharray="1.5,2"/><path d="M21 41.39999999999998 H361" stroke="#aaa" stroke-width=".8" stroke-dasharray="1.5,2"/><path d="M21.0 59 V61.5" stroke="#666" stroke-width="1"/><text x="21.0" y="67.5" text-anchor="middle" fill="#111" font-size="8" textLength="22" lengthAdjust="spacingAndGlyphs">0.000 s</text><path d="M56.7 15 V59" stroke="#aaa" stroke-width=".8" stroke-dasharray="1.5,2"/><path d="M56.7 59 V61.5" stroke="#666" stroke-width="1"/><text x="56.7" y="67.5" text-anchor="middle" fill="#111" font-size="8" textLength="25" lengthAdjust="spacingAndGlyphs">10.000 s</text><path d="M92.4 15 V59" stroke="#aaa" stroke-width=".8" stroke-dasharray="1.5,2"/><path d="M92.4 59 V61.5" stroke="#666" stroke-width="1"/><text x="92.4" y="67.5" text-anchor="middle" fill="#111" font-size="8" textLength="25" lengthAdjust="spacingAndGlyphs">20.000 s</text><path d="M128.1 15 V59" stroke="#aaa" stroke-width=".8" stroke-dasharray="1.5,2"/><path d="M128.1 59 V61.5" stroke="#666" stroke-width="1"/><text x="128.1" y="67.5" text-anchor="middle" fill="#111" font-size="8" textLength="25" lengthAdjust="spacingAndGlyphs">30.000 s</text><path d="M163.8 15 V59" stroke="#aaa" stroke-width=".8" stroke-dasharray="1.5,2"/><path d="M163.8 59 V61.5" stroke="#666" stroke-width="1"/><text x="163.8" y="67.5" text-anchor="middle" fill="#111" font-size="8" textLength="25" lengthAdjust="spacingAndGlyphs">40.000 s</text><path d="M199.5 15 V59" stroke="#aaa" stroke-width=".8" stroke-dasharray="1.5,2"/><path d="M199.5 59 V61.5" stroke="#666" stroke-width="1"/><text x="199.5" y="67.5" text-anchor="middle" fill="#111" font-size="8" textLength="25" lengthAdjust="spacingAndGlyphs">50.000 s</text><path d="M235.2 15 V59" stroke="#aaa" stroke-width=".8" stroke-dasharray="1.5,2"/><path d="M235.2 59 V61.5" stroke="#666" stroke-width="1"/><text x="235.2" y="67.5" text-anchor="middle" fill="#111" font-size="8" textLength="25" lengthAdjust="spacingAndGlyphs">60.000 s</text><path d="M270.9 15 V59" stroke="#aaa" stroke-width=".8" stroke-dasharray="1.5,2"/><path d="M270.9 59 V61.5" stroke="#666" stroke-width="1"/><text x="270.9" y="67.5" text-anchor="middle" fill="#111" font-size="8" textLength="25" lengthAdjust="spacingAndGlyphs">70.000 s</text><path d="M306.6 15 V59" stroke="#aaa" stroke-width=".8" stroke-dasharray="1.5,2"/><path d="M306.6 59 V61.5" stroke="#666" stroke-width="1"/><text x="306.6" y="67.5" text-anchor="middle" fill="#111" font-size="8" textLength="25" lengthAdjust="spacingAndGlyphs">80.000 s</text><path d="M342.3 15 V59" stroke="#aaa" stroke-width=".8" stroke-dasharray="1.5,2"/><path d="M342.3 59 V61.5" stroke="#666" stroke-width="1"/><text x="342.3" y="67.5" text-anchor="middle" fill="#111" font-size="8" textLength="25" lengthAdjust="spacingAndGlyphs">90.000 s</text><path d="M21 15 V59 H362" fill="none" stroke="#6c6c6c" stroke-width="1"/><text x="15" y="15.5" fill="#111" font-size="8">Deg</text><text x="18" y="24.5" text-anchor="end" fill="#111" font-size="8">4.00</text><text x="18" y="44.5" text-anchor="end" fill="#111" font-size="8">3.50</text><path d="M22.0,533.4 L23.0,534.8 L24.0,538.6 L25.0,541.2 L26.0,540.7 L27.0,537.6 L28.0,534.4 L29.0,533.8 L30.0,536.6 L31.0,541.5 L32.0,545.4 L33.0,546.6 L34.0,544.5 L35.0,538.1 L36.0,529.0 L37.0,522.6 L38.0,520.5 L39.0,522.8 L40.0,531.7 L41.0,544.5 L42.0,550.4 L43.0,549.5 L44.0,539.0 L45.0,521.9 L46.0,516.2 L47.0,515.6 L48.0,517.8 L49.0,529.9 L50.0,546.4 L51.0,550.3 L52.0,545.2 L53.0,529.7 L54.0,519.5 L55.0,517.7 L56.0,520.1 L57.0,528.2 L58.0,537.7 L59.0,540.2 L60.0,536.3 L61.0,531.1 L62.0,530.2 L63.0,535.1 L64.0,542.7 L65.0,546.9 L66.0,546.1 L67.0,539.9 L68.0,531.2 L69.0,526.9 L70.0,529.3 L71.0,538.7 L72.0,548.8 L73.0,553.0 L74.0,553.7 L75.0,551.7 L76.0,544.4 L77.0,532.5 L78.0,525.5 L79.0,526.0 L80.0,534.2 L81.0,546.2 L82.0,552.2 L83.0,553.2 L84.0,550.2 L85.0,539.9 L86.0,527.1 L87.0,522.5 L88.0,524.8 L89.0,533.5 L90.0,542.7 L91.0,545.3 L92.0,541.0 L93.0,531.7 L94.0,524.9 L95.0,523.8 L96.0,528.0 L97.0,535.6 L98.0,540.7 L99.0,539.4 L100.0,532.2 L101.0,524.5 L102.0,521.0 L103.0,521.6 L104.0,526.7 L105.0,536.1 L106.0,543.7 L107.0,545.6 L108.0,541.9 L109.0,533.1 L110.0,524.8 L111.0,521.5 L112.0,522.7 L113.0,529.6 L114.0,540.4 L115.0,546.8 L116.0,547.0 L117.0,541.0 L118.0,531.2 L119.0,525.6 L120.0,526.7 L121.0,534.2 L122.0,542.7 L123.0,545.3 L124.0,540.2 L125.0,529.4 L126.0,522.6 L127.0,522.8 L128.0,531.6 L129.0,545.5 L130.0,551.3 L131.0,550.0 L132.0,539.2 L133.0,523.1 L134.0,517.8 L135.0,518.3 L136.0,526.0 L137.0,542.9 L138.0,551.4 L139.0,552.1 L140.0,547.4 L141.0,535.4 L142.0,525.3 L143.0,522.5 L144.0,524.9 L145.0,532.3 L146.0,541.4 L147.0,546.8 L148.0,548.4 L149.0,546.9 L150.0,542.9 L151.0,537.7 L152.0,534.3 L153.0,534.6 L154.0,538.0 L155.0,542.1 L156.0,543.9 L157.0,542.3 L158.0,538.2 L159.0,534.8 L160.0,535.5 L161.0,540.5 L162.0,545.8 L163.0,547.4 L164.0,543.5 L165.0,533.0 L166.0,523.6 L167.0,520.9 L168.0,524.1 L169.0,534.8 L170.0,545.7 L171.0,548.5 L172.0,543.6 L173.0,530.3 L174.0,520.5 L175.0,518.2 L176.0,520.0 L177.0,528.0 L178.0,539.5 L179.0,544.6 L180.0,541.7 L181.0,532.0 L182.0,523.0 L183.0,519.8 L184.0,521.0 L185.0,527.8 L186.0,539.3 L187.0,546.5 L188.0,547.0 L189.0,541.0 L190.0,530.1 L191.0,523.0 L192.0,522.3 L193.0,528.1 L194.0,540.7 L195.0,549.3 L196.0,551.1 L197.0,548.0 L198.0,538.8 L199.0,529.7 L200.0,527.8 L201.0,533.0 L202.0,541.6 L203.0,546.3 L204.0,545.4 L205.0,539.6 L206.0,532.9 L207.0,531.4 L208.0,536.3 L209.0,543.7 L210.0,547.3 L211.0,545.2 L212.0,536.0 L213.0,525.3 L214.0,520.8 L215.0,521.8 L216.0,528.7 L217.0,540.4 L218.0,547.5 L219.0,548.4 L220.0,543.9 L221.0,533.6 L222.0,523.8 L223.0,519.7 L224.0,519.5 L225.0,523.2 L226.0,533.3 L227.0,545.2 L228.0,550.3 L229.0,549.9 L230.0,543.3 L231.0,530.6 L232.0,522.5 L233.0,521.7 L234.0,527.6 L235.0,539.7 L236.0,547.8 L237.0,548.8 L238.0,544.4 L239.0,536.4 L240.0,532.1 L241.0,535.2 L242.0,542.8 L243.0,547.7 L244.0,547.1 L245.0,539.8 L246.0,528.8 L247.0,523.6 L248.0,525.7 L249.0,536.1 L250.0,547.3 L251.0,551.1 L252.0,549.3 L253.0,540.1 L254.0,526.8 L255.0,520.7 L256.0,520.4 L257.0,524.7 L258.0,533.2 L259.0,540.4 L260.0,542.1 L261.0,538.5 L262.0,532.0 L263.0,526.8 L264.0,525.1 L265.0,526.6 L266.0,530.6 L267.0,534.4 L268.0,535.0 L269.0,531.5 L270.0,526.6 L271.0,524.0 L272.0,525.6 L273.0,533.1 L274.0,543.6 L275.0,549.2 L276.0,548.8 L277.0,541.3 L278.0,527.8 L279.0,520.3 L280.0,519.7 L281.0,525.4 L282.0,540.3 L283.0,550.8 L284.0,553.2 L285.0,551.8 L286.0,545.0 L287.0,533.0 L288.0,525.3 L289.0,523.9 L290.0,526.9 L291.0,533.3 L292.0,540.4 L293.0,545.0 L294.0,546.7 L295.0,546.0 L296.0,543.1 L297.0,538.4 L298.0,533.5 L299.0,530.1 L300.0,528.5 L301.0,528.3 L302.0,528.7 L303.0,530.0 L304.0,533.2 L305.0,539.0 L306.0,545.6 L307.0,549.3 L308.0,549.0 L309.0,542.2 L310.0,527.8 L311.0,519.0 L312.0,517.5 L313.0,520.9 L314.0,537.0 L315.0,552.0 L316.0,554.9 L317.0,554.0 L318.0,545.9 L319.0,527.1 L320.0,519.2 L321.0,519.3 L322.0,526.4 L323.0,540.6 L324.0,548.6 L325.0,549.4 L326.0,545.6 L327.0,538.9 L328.0,534.0 L329.0,532.9 L330.0,533.7 L331.0,533.6 L332.0,531.5 L333.0,528.7 L334.0,527.1 L335.0,528.0 L336.0,531.2 L337.0,535.2 L338.0,537.7 L339.0,537.5 L340.0,534.4 L341.0,529.4 L342.0,524.7 L343.0,521.7 L344.0,520.9 L345.0,522.5 L346.0,527.6 L347.0,535.5 L348.0,541.3 L349.0,541.8 L350.0,536.5 L351.0,528.2 L352.0,523.1 L353.0,522.9 L354.0,527.9 L355.0,537.4 L356.0,544.4 L357.0,545.6 L358.0,541.8 L359.0,535.5 L360.0,531.9 L361.0,534.3" transform="translate(0,-498)" fill="none" stroke="#a4cbd3" stroke-width="1.5"/><path d="M22.0,533.4 L23.0,534.8 L24.0,538.6 L25.0,541.2 L26.0,540.7 L27.0,537.6 L28.0,534.4 L29.0,533.8 L30.0,536.6 L31.0,541.5 L32.0,545.4 L33.0,546.6 L34.0,544.5 L35.0,538.1 L36.0,529.0 L37.0,522.6 L38.0,520.5 L39.0,522.8 L40.0,531.7 L41.0,544.5 L42.0,550.4 L43.0,549.5 L44.0,539.0 L45.0,521.9 L46.0,516.2 L47.0,515.6 L48.0,517.8 L49.0,529.9 L50.0,546.4 L51.0,550.3 L52.0,545.2 L53.0,529.7 L54.0,519.5 L55.0,517.7 L56.0,520.1 L57.0,528.2 L58.0,537.7 L59.0,540.2 L60.0,536.3 L61.0,531.1 L62.0,530.2 L63.0,535.1 L64.0,542.7 L65.0,546.9 L66.0,546.1 L67.0,539.9 L68.0,531.2 L69.0,526.9 L70.0,529.3 L71.0,538.7 L72.0,548.8 L73.0,553.0 L74.0,553.7 L75.0,551.7 L76.0,544.4 L77.0,532.5 L78.0,525.5 L79.0,526.0 L80.0,534.2 L81.0,546.2 L82.0,552.2 L83.0,553.2 L84.0,550.2 L85.0,539.9 L86.0,527.1 L87.0,522.5 L88.0,524.8 L89.0,533.5 L90.0,542.7 L91.0,545.3 L92.0,541.0 L93.0,531.7 L94.0,524.9 L95.0,523.8 L96.0,528.0 L97.0,535.6 L98.0,540.7 L99.0,539.4 L100.0,532.2 L101.0,524.5 L102.0,521.0 L103.0,521.6 L104.0,526.7 L105.0,536.1 L106.0,543.7 L107.0,545.6 L108.0,541.9 L109.0,533.1 L110.0,524.8 L111.0,521.5 L112.0,522.7 L113.0,529.6 L114.0,540.4 L115.0,546.8 L116.0,547.0 L117.0,541.0 L118.0,531.2 L119.0,525.6 L120.0,526.7 L121.0,534.2 L122.0,542.7 L123.0,545.3 L124.0,540.2 L125.0,529.4 L126.0,522.6 L127.0,522.8 L128.0,531.6 L129.0,545.5 L130.0,551.3 L131.0,550.0 L132.0,539.2 L133.0,523.1 L134.0,517.8 L135.0,518.3 L136.0,526.0 L137.0,542.9 L138.0,551.4 L139.0,552.1 L140.0,547.4 L141.0,535.4 L142.0,525.3 L143.0,522.5 L144.0,524.9 L145.0,532.3 L146.0,541.4 L147.0,546.8 L148.0,548.4 L149.0,546.9 L150.0,542.9 L151.0,537.7 L152.0,534.3 L153.0,534.6 L154.0,538.0 L155.0,542.1 L156.0,543.9 L157.0,542.3 L158.0,538.2 L159.0,534.8 L160.0,535.5 L161.0,540.5 L162.0,545.8 L163.0,547.4 L164.0,543.5 L165.0,533.0 L166.0,523.6 L167.0,520.9 L168.0,524.1 L169.0,534.8 L170.0,545.7 L171.0,548.5 L172.0,543.6 L173.0,530.3 L174.0,520.5 L175.0,518.2 L176.0,520.0 L177.0,528.0 L178.0,539.5 L179.0,544.6 L180.0,541.7 L181.0,532.0 L182.0,523.0 L183.0,519.8 L184.0,521.0 L185.0,527.8 L186.0,539.3 L187.0,546.5 L188.0,547.0 L189.0,541.0 L190.0,530.1 L191.0,523.0 L192.0,522.3 L193.0,528.1 L194.0,540.7 L195.0,549.3 L196.0,551.1 L197.0,548.0 L198.0,538.8 L199.0,529.7 L200.0,527.8 L201.0,533.0 L202.0,541.6 L203.0,546.3 L204.0,545.4 L205.0,539.6 L206.0,532.9 L207.0,531.4 L208.0,536.3 L209.0,543.7 L210.0,547.3 L211.0,545.2 L212.0,536.0 L213.0,525.3 L214.0,520.8 L215.0,521.8 L216.0,528.7 L217.0,540.4 L218.0,547.5 L219.0,548.4 L220.0,543.9 L221.0,533.6 L222.0,523.8 L223.0,519.7 L224.0,519.5 L225.0,523.2 L226.0,533.3 L227.0,545.2 L228.0,550.3 L229.0,549.9 L230.0,543.3 L231.0,530.6 L232.0,522.5 L233.0,521.7 L234.0,527.6 L235.0,539.7 L236.0,547.8 L237.0,548.8 L238.0,544.4 L239.0,536.4 L240.0,532.1 L241.0,535.2 L242.0,542.8 L243.0,547.7 L244.0,547.1 L245.0,539.8 L246.0,528.8 L247.0,523.6 L248.0,525.7 L249.0,536.1 L250.0,547.3 L251.0,551.1 L252.0,549.3 L253.0,540.1 L254.0,526.8 L255.0,520.7 L256.0,520.4 L257.0,524.7 L258.0,533.2 L259.0,540.4 L260.0,542.1 L261.0,538.5 L262.0,532.0 L263.0,526.8 L264.0,525.1 L265.0,526.6 L266.0,530.6 L267.0,534.4 L268.0,535.0 L269.0,531.5 L270.0,526.6 L271.0,524.0 L272.0,525.6 L273.0,533.1 L274.0,543.6 L275.0,549.2 L276.0,548.8 L277.0,541.3 L278.0,527.8 L279.0,520.3 L280.0,519.7 L281.0,525.4 L282.0,540.3 L283.0,550.8 L284.0,553.2 L285.0,551.8 L286.0,545.0 L287.0,533.0 L288.0,525.3 L289.0,523.9 L290.0,526.9 L291.0,533.3 L292.0,540.4 L293.0,545.0 L294.0,546.7 L295.0,546.0 L296.0,543.1 L297.0,538.4 L298.0,533.5 L299.0,530.1 L300.0,528.5 L301.0,528.3 L302.0,528.7 L303.0,530.0 L304.0,533.2 L305.0,539.0 L306.0,545.6 L307.0,549.3 L308.0,549.0 L309.0,542.2 L310.0,527.8 L311.0,519.0 L312.0,517.5 L313.0,520.9 L314.0,537.0 L315.0,552.0 L316.0,554.9 L317.0,554.0 L318.0,545.9 L319.0,527.1 L320.0,519.2 L321.0,519.3 L322.0,526.4 L323.0,540.6 L324.0,548.6 L325.0,549.4 L326.0,545.6 L327.0,538.9 L328.0,534.0 L329.0,532.9 L330.0,533.7 L331.0,533.6 L332.0,531.5 L333.0,528.7 L334.0,527.1 L335.0,528.0 L336.0,531.2 L337.0,535.2 L338.0,537.7 L339.0,537.5 L340.0,534.4 L341.0,529.4 L342.0,524.7 L343.0,521.7 L344.0,520.9 L345.0,522.5 L346.0,527.6 L347.0,535.5 L348.0,541.3 L349.0,541.8 L350.0,536.5 L351.0,528.2 L352.0,523.1 L353.0,522.9 L354.0,527.9 L355.0,537.4 L356.0,544.4 L357.0,545.6 L358.0,541.8 L359.0,535.5 L360.0,531.9 L361.0,534.3" transform="translate(0,-498)" fill="none" stroke="#3a7686" stroke-width=".5" opacity=".75"/><circle cx="25.0" cy="43.2" r=".9" fill="#245f74"/><circle cx="29.0" cy="35.8" r=".9" fill="#245f74"/><circle cx="33.0" cy="48.6" r=".9" fill="#245f74"/><circle cx="38.0" cy="22.5" r=".9" fill="#245f74"/><circle cx="42.0" cy="52.4" r=".9" fill="#245f74"/><circle cx="47.0" cy="17.6" r=".9" fill="#245f74"/><circle cx="51.0" cy="52.3" r=".9" fill="#245f74"/><circle cx="55.0" cy="19.7" r=".9" fill="#245f74"/><circle cx="59.0" cy="42.2" r=".9" fill="#245f74"/><circle cx="62.0" cy="32.2" r=".9" fill="#245f74"/><circle cx="65.0" cy="48.9" r=".9" fill="#245f74"/><circle cx="69.0" cy="28.9" r=".9" fill="#245f74"/><circle cx="74.0" cy="55.7" r=".9" fill="#245f74"/><circle cx="78.0" cy="27.5" r=".9" fill="#245f74"/><circle cx="83.0" cy="55.2" r=".9" fill="#245f74"/><circle cx="87.0" cy="24.5" r=".9" fill="#245f74"/><circle cx="91.0" cy="47.3" r=".9" fill="#245f74"/><circle cx="95.0" cy="25.8" r=".9" fill="#245f74"/><circle cx="98.0" cy="42.7" r=".9" fill="#245f74"/><circle cx="102.0" cy="23.0" r=".9" fill="#245f74"/><circle cx="107.0" cy="47.6" r=".9" fill="#245f74"/><circle cx="111.0" cy="23.5" r=".9" fill="#245f74"/><circle cx="116.0" cy="49.0" r=".9" fill="#245f74"/><circle cx="119.0" cy="27.6" r=".9" fill="#245f74"/><circle cx="123.0" cy="47.3" r=".9" fill="#245f74"/><circle cx="126.0" cy="24.6" r=".9" fill="#245f74"/><circle cx="130.0" cy="53.3" r=".9" fill="#245f74"/><circle cx="134.0" cy="19.8" r=".9" fill="#245f74"/><circle cx="139.0" cy="54.1" r=".9" fill="#245f74"/><circle cx="143.0" cy="24.5" r=".9" fill="#245f74"/><circle cx="148.0" cy="50.4" r=".9" fill="#245f74"/><circle cx="152.0" cy="36.3" r=".9" fill="#245f74"/><circle cx="156.0" cy="45.9" r=".9" fill="#245f74"/><circle cx="159.0" cy="36.8" r=".9" fill="#245f74"/><circle cx="163.0" cy="49.4" r=".9" fill="#245f74"/><circle cx="167.0" cy="22.9" r=".9" fill="#245f74"/><circle cx="171.0" cy="50.5" r=".9" fill="#245f74"/><circle cx="175.0" cy="20.2" r=".9" fill="#245f74"/><circle cx="179.0" cy="46.6" r=".9" fill="#245f74"/><circle cx="183.0" cy="21.8" r=".9" fill="#245f74"/><circle cx="188.0" cy="49.0" r=".9" fill="#245f74"/><circle cx="192.0" cy="24.3" r=".9" fill="#245f74"/><circle cx="196.0" cy="53.1" r=".9" fill="#245f74"/><circle cx="200.0" cy="29.8" r=".9" fill="#245f74"/><circle cx="203.0" cy="48.3" r=".9" fill="#245f74"/><circle cx="207.0" cy="33.4" r=".9" fill="#245f74"/><circle cx="210.0" cy="49.3" r=".9" fill="#245f74"/><circle cx="214.0" cy="22.8" r=".9" fill="#245f74"/><circle cx="219.0" cy="50.4" r=".9" fill="#245f74"/><circle cx="224.0" cy="21.5" r=".9" fill="#245f74"/><circle cx="228.0" cy="52.3" r=".9" fill="#245f74"/><circle cx="233.0" cy="23.7" r=".9" fill="#245f74"/><circle cx="237.0" cy="50.8" r=".9" fill="#245f74"/><circle cx="240.0" cy="34.1" r=".9" fill="#245f74"/><circle cx="243.0" cy="49.7" r=".9" fill="#245f74"/><circle cx="247.0" cy="25.6" r=".9" fill="#245f74"/><circle cx="251.0" cy="53.1" r=".9" fill="#245f74"/><circle cx="256.0" cy="22.4" r=".9" fill="#245f74"/><circle cx="260.0" cy="44.1" r=".9" fill="#245f74"/><circle cx="264.0" cy="27.1" r=".9" fill="#245f74"/><circle cx="268.0" cy="37.0" r=".9" fill="#245f74"/><circle cx="271.0" cy="26.0" r=".9" fill="#245f74"/><circle cx="275.0" cy="51.2" r=".9" fill="#245f74"/><circle cx="280.0" cy="21.7" r=".9" fill="#245f74"/><circle cx="284.0" cy="55.2" r=".9" fill="#245f74"/><circle cx="289.0" cy="25.9" r=".9" fill="#245f74"/><circle cx="294.0" cy="48.7" r=".9" fill="#245f74"/><circle cx="301.0" cy="30.3" r=".9" fill="#245f74"/><circle cx="307.0" cy="51.3" r=".9" fill="#245f74"/><circle cx="312.0" cy="19.5" r=".9" fill="#245f74"/><circle cx="316.0" cy="56.9" r=".9" fill="#245f74"/><circle cx="320.0" cy="21.2" r=".9" fill="#245f74"/><circle cx="325.0" cy="51.4" r=".9" fill="#245f74"/><circle cx="329.0" cy="34.9" r=".9" fill="#245f74"/><circle cx="330.0" cy="35.7" r=".9" fill="#245f74"/><circle cx="334.0" cy="29.1" r=".9" fill="#245f74"/><circle cx="338.0" cy="39.7" r=".9" fill="#245f74"/><circle cx="344.0" cy="22.9" r=".9" fill="#245f74"/><circle cx="349.0" cy="43.8" r=".9" fill="#245f74"/><circle cx="353.0" cy="24.9" r=".9" fill="#245f74"/><circle cx="357.0" cy="47.6" r=".9" fill="#245f74"/><circle cx="360.0" cy="33.9" r=".9" fill="#245f74"/><path d="M35 25 l5 5 M40 25 l-5 5" stroke="#e04040" stroke-width=".8"/></svg>
<div class="a" style="left:0px;top:134px;width:380px;height:96px;background:#e4eaf2;border:1px solid #8d9299;border-right:2px solid #dde4ec;border-top:2px solid #7d8288"></div><div class="a" style="left:1px;top:136px;width:377px;height:14px;background:linear-gradient(#c9d5e1,#e2e9f1)"></div><div class="a" style="left:4px;top:139px;width:8px;height:8px;background:linear-gradient(135deg,#5ab4e6,#1d7fc0);border-radius:1px"></div><div class="a" style="left:6px;top:140.5px;width:3px;height:5px;border:1px solid #e8f4fc;border-right:none"></div><div class="a" style="left:14px;top:138.79999999999995px;font-size:6.6px;color:#a3aab3;white-space:nowrap;line-height:9px;transform:scaleX(0.85);transform-origin:0 0">Roll (ApxPosmvRPH) (4.600 s, -3.75)</div><div class="a" style="left:325.5px;top:138px;width:16.5px;height:10px;border:1px solid #b9c2cd;border-radius:2px;background:linear-gradient(#e8edf3,#d3dbe6)"></div><div class="a" style="left:343px;top:138px;width:16.5px;height:10px;border:1px solid #b9c2cd;border-radius:2px;background:linear-gradient(#e8edf3,#d3dbe6)"></div><div class="a" style="left:361px;top:138px;width:16.5px;height:10px;border:1px solid #b9c2cd;border-radius:2px;background:linear-gradient(#e8edf3,#d3dbe6)"></div><svg class="a" style="left:325px;top:138px" width="54" height="11"><rect x="5.5" y="4.5" width="7" height="2.5" rx="1" fill="#fff" stroke="#777" stroke-width=".8"/><rect x="23" y="2.5" width="7" height="6" rx="1.2" fill="#fff" stroke="#777" stroke-width=".8"/><rect x="25" y="4.5" width="3" height="2" fill="#777"/><path d="M41.5 2 l7 7 M48.5 2 l-7 7" stroke="#fff" stroke-width="2.6"/><path d="M41.5 2 l7 7 M48.5 2 l-7 7" stroke="#888" stroke-width="1" /></svg>
<div class="a" style="left:3px;top:151px;width:375px;height:77px;background:#fff"></div>
<svg class="a" style="left:0;top:151px" width="380" height="78" font-family="Liberation Sans" font-size="8.5" stroke="#111" stroke-width=".15"><path d="M23 35 H361" stroke="#aaa" stroke-width=".8" stroke-dasharray="1.5,2"/><path d="M23 53.5 H361" stroke="#aaa" stroke-width=".8" stroke-dasharray="1.5,2"/><path d="M23.0 59.39999999999998 V62" stroke="#666" stroke-width="1"/><text x="23.0" y="68.5" text-anchor="middle" fill="#111" font-size="8" textLength="22" lengthAdjust="spacingAndGlyphs">0.000 s</text><path d="M58.4 14 V59.39999999999998" stroke="#aaa" stroke-width=".8" stroke-dasharray="1.5,2"/><path d="M58.4 59.39999999999998 V62" stroke="#666" stroke-width="1"/><text x="58.4" y="68.5" text-anchor="middle" fill="#111" font-size="8" textLength="25" lengthAdjust="spacingAndGlyphs">10.000 s</text><path d="M93.8 14 V59.39999999999998" stroke="#aaa" stroke-width=".8" stroke-dasharray="1.5,2"/><path d="M93.8 59.39999999999998 V62" stroke="#666" stroke-width="1"/><text x="93.8" y="68.5" text-anchor="middle" fill="#111" font-size="8" textLength="25" lengthAdjust="spacingAndGlyphs">20.000 s</text><path d="M129.2 14 V59.39999999999998" stroke="#aaa" stroke-width=".8" stroke-dasharray="1.5,2"/><path d="M129.2 59.39999999999998 V62" stroke="#666" stroke-width="1"/><text x="129.2" y="68.5" text-anchor="middle" fill="#111" font-size="8" textLength="25" lengthAdjust="spacingAndGlyphs">30.000 s</text><path d="M164.6 14 V59.39999999999998" stroke="#aaa" stroke-width=".8" stroke-dasharray="1.5,2"/><path d="M164.6 59.39999999999998 V62" stroke="#666" stroke-width="1"/><text x="164.6" y="68.5" text-anchor="middle" fill="#111" font-size="8" textLength="25" lengthAdjust="spacingAndGlyphs">40.000 s</text><path d="M200.0 14 V59.39999999999998" stroke="#aaa" stroke-width=".8" stroke-dasharray="1.5,2"/><path d="M200.0 59.39999999999998 V62" stroke="#666" stroke-width="1"/><text x="200.0" y="68.5" text-anchor="middle" fill="#111" font-size="8" textLength="25" lengthAdjust="spacingAndGlyphs">50.000 s</text><path d="M235.4 14 V59.39999999999998" stroke="#aaa" stroke-width=".8" stroke-dasharray="1.5,2"/><path d="M235.4 59.39999999999998 V62" stroke="#666" stroke-width="1"/><text x="235.4" y="68.5" text-anchor="middle" fill="#111" font-size="8" textLength="25" lengthAdjust="spacingAndGlyphs">60.000 s</text><path d="M270.8 14 V59.39999999999998" stroke="#aaa" stroke-width=".8" stroke-dasharray="1.5,2"/><path d="M270.8 59.39999999999998 V62" stroke="#666" stroke-width="1"/><text x="270.8" y="68.5" text-anchor="middle" fill="#111" font-size="8" textLength="25" lengthAdjust="spacingAndGlyphs">70.000 s</text><path d="M306.2 14 V59.39999999999998" stroke="#aaa" stroke-width=".8" stroke-dasharray="1.5,2"/><path d="M306.2 59.39999999999998 V62" stroke="#666" stroke-width="1"/><text x="306.2" y="68.5" text-anchor="middle" fill="#111" font-size="8" textLength="25" lengthAdjust="spacingAndGlyphs">80.000 s</text><path d="M341.6 14 V59.39999999999998" stroke="#aaa" stroke-width=".8" stroke-dasharray="1.5,2"/><path d="M341.6 59.39999999999998 V62" stroke="#666" stroke-width="1"/><text x="341.6" y="68.5" text-anchor="middle" fill="#111" font-size="8" textLength="25" lengthAdjust="spacingAndGlyphs">90.000 s</text><path d="M23 14 V59.39999999999998 H362" fill="none" stroke="#6c6c6c" stroke-width="1"/><text x="17" y="15.5" fill="#111" font-size="8">Deg</text><text x="19" y="37.5" text-anchor="end" fill="#111" font-size="8">-3.00</text><text x="19" y="56" text-anchor="end" fill="#111" font-size="8">-4.00</text><path d="M24.0,622.4 L25.0,622.4 L26.0,624.0 L27.0,627.2 L28.0,630.8 L29.0,633.0 L30.0,633.0 L31.0,631.0 L32.0,628.9 L33.0,628.5 L34.0,630.5 L35.0,634.4 L36.0,637.6 L37.0,637.7 L38.0,634.4 L39.0,630.1 L40.0,628.8 L41.0,632.6 L42.0,640.5 L43.0,646.0 L44.0,647.1 L45.0,643.8 L46.0,635.5 L47.0,627.9 L48.0,626.5 L49.0,631.4 L50.0,640.0 L51.0,645.8 L52.0,647.6 L53.0,646.6 L54.0,643.1 L55.0,637.4 L56.0,632.3 L57.0,630.6 L58.0,633.4 L59.0,639.5 L60.0,644.6 L61.0,646.0 L62.0,643.5 L63.0,637.3 L64.0,632.2 L65.0,633.7 L66.0,641.0 L67.0,646.7 L68.0,647.6 L69.0,643.1 L70.0,632.5 L71.0,625.6 L72.0,627.5 L73.0,637.9 L74.0,647.1 L75.0,649.6 L76.0,648.7 L77.0,644.5 L78.0,638.0 L79.0,634.2 L80.0,634.0 L81.0,635.6 L82.0,638.0 L83.0,641.6 L84.0,645.9 L85.0,648.7 L86.0,649.3 L87.0,647.5 L88.0,641.9 L89.0,635.4 L90.0,634.7 L91.0,639.8 L92.0,644.9 L93.0,646.4 L94.0,644.8 L95.0,642.2 L96.0,642.1 L97.0,645.0 L98.0,647.2 L99.0,646.6 L100.0,642.2 L101.0,635.5 L102.0,633.1 L103.0,636.9 L104.0,641.9 L105.0,643.0 L106.0,639.2 L107.0,633.7 L108.0,633.0 L109.0,638.9 L110.0,644.9 L111.0,645.3 L112.0,637.3 L113.0,623.7 L114.0,618.6 L115.0,619.1 L116.0,626.1 L117.0,638.7 L118.0,643.7 L119.0,640.3 L120.0,630.8 L121.0,623.3 L122.0,620.5 L123.0,619.8 L124.0,619.7 L125.0,620.1 L126.0,622.1 L127.0,627.3 L128.0,633.0 L129.0,632.8 L130.0,625.4 L131.0,619.1 L132.0,617.6 L133.0,619.0 L134.0,625.6 L135.0,633.1 L136.0,630.6 L137.0,621.4 L138.0,617.4 L139.0,617.4 L140.0,622.2 L141.0,636.0 L142.0,642.9 L143.0,638.0 L144.0,625.1 L145.0,618.9 L146.0,618.4 L147.0,621.5 L148.0,628.3 L149.0,633.5 L150.0,634.4 L151.0,634.4 L152.0,635.8 L153.0,636.9 L154.0,634.3 L155.0,628.0 L156.0,623.3 L157.0,623.5 L158.0,629.9 L159.0,639.5 L160.0,643.0 L161.0,639.1 L162.0,630.6 L163.0,626.4 L164.0,630.0 L165.0,638.6 L166.0,642.9 L167.0,639.3 L168.0,628.9 L169.0,622.5 L170.0,623.5 L171.0,631.8 L172.0,641.3 L173.0,643.0 L174.0,637.5 L175.0,629.3 L176.0,626.3 L177.0,629.1 L178.0,633.5 L179.0,633.8 L180.0,629.1 L181.0,625.1 L182.0,626.1 L183.0,632.7 L184.0,639.7 L185.0,640.2 L186.0,633.7 L187.0,626.0 L188.0,624.0 L189.0,628.4 L190.0,636.5 L191.0,640.1 L192.0,636.7 L193.0,630.1 L194.0,627.3 L195.0,631.2 L196.0,638.9 L197.0,643.3 L198.0,642.3 L199.0,637.7 L200.0,634.3 L201.0,635.9 L202.0,640.1 L203.0,642.1 L204.0,640.5 L205.0,637.7 L206.0,638.5 L207.0,643.9 L208.0,648.3 L209.0,649.1 L210.0,646.1 L211.0,637.9 L212.0,632.4 L213.0,636.8 L214.0,646.1 L215.0,650.1 L216.0,650.2 L217.0,646.7 L218.0,638.4 L219.0,633.9 L220.0,638.2 L221.0,645.4 L222.0,648.6 L223.0,648.5 L224.0,645.7 L225.0,641.4 L226.0,638.2 L227.0,637.0 L228.0,636.3 L229.0,636.1 L230.0,637.9 L231.0,642.0 L232.0,645.6 L233.0,646.1 L234.0,641.6 L235.0,631.1 L236.0,623.5 L237.0,623.1 L238.0,629.4 L239.0,639.3 L240.0,643.4 L241.0,640.4 L242.0,631.8 L243.0,625.3 L244.0,624.6 L245.0,628.3 L246.0,633.0 L247.0,634.3 L248.0,631.8 L249.0,628.7 L250.0,627.8 L251.0,628.7 L252.0,629.7 L253.0,629.4 L254.0,628.7 L255.0,630.0 L256.0,634.1 L257.0,638.7 L258.0,639.6 L259.0,635.1 L260.0,627.2 L261.0,622.5 L262.0,622.9 L263.0,629.0 L264.0,639.3 L265.0,645.4 L266.0,646.2 L267.0,642.7 L268.0,635.1 L269.0,627.6 L270.0,624.2 L271.0,624.7 L272.0,629.2 L273.0,637.3 L274.0,644.0 L275.0,646.2 L276.0,644.0 L277.0,636.2 L278.0,626.7 L279.0,622.9 L280.0,624.7 L281.0,631.8 L282.0,639.2 L283.0,640.8 L284.0,635.4 L285.0,626.5 L286.0,621.7 L287.0,621.8 L288.0,626.6 L289.0,634.9 L290.0,639.2 L291.0,636.1 L292.0,626.5 L293.0,619.3 L294.0,617.2 L295.0,617.4 L296.0,620.5 L297.0,629.3 L298.0,637.9 L299.0,638.4 L300.0,630.6 L301.0,621.2 L302.0,617.6 L303.0,616.9 L304.0,617.8 L305.0,621.1 L306.0,626.9 L307.0,631.2 L308.0,631.3 L309.0,628.5 L310.0,625.2 L311.0,623.2 L312.0,622.6 L313.0,623.2 L314.0,624.7 L315.0,626.6 L316.0,628.2 L317.0,629.1 L318.0,630.0 L319.0,632.0 L320.0,635.4 L321.0,638.6 L322.0,639.6 L323.0,637.4 L324.0,633.1 L325.0,630.1 L326.0,630.9 L327.0,635.5 L328.0,640.6 L329.0,643.0 L330.0,642.6 L331.0,641.1 L332.0,641.4 L333.0,643.9 L334.0,646.1 L335.0,645.6 L336.0,641.2 L337.0,633.6 L338.0,629.5 L339.0,633.0 L340.0,642.1 L341.0,648.2 L342.0,649.7 L343.0,648.4 L344.0,643.8 L345.0,636.8 L346.0,632.3 L347.0,631.5 L348.0,633.1 L349.0,636.2 L350.0,640.4 L351.0,644.5 L352.0,646.5 L353.0,645.6 L354.0,640.6 L355.0,632.6 L356.0,628.4 L357.0,630.8 L358.0,637.8 L359.0,642.7 L360.0,642.2 L361.0,636.7" transform="translate(0,-593)" fill="none" stroke="#a4cbd3" stroke-width="1.5"/><path d="M24.0,622.4 L25.0,622.4 L26.0,624.0 L27.0,627.2 L28.0,630.8 L29.0,633.0 L30.0,633.0 L31.0,631.0 L32.0,628.9 L33.0,628.5 L34.0,630.5 L35.0,634.4 L36.0,637.6 L37.0,637.7 L38.0,634.4 L39.0,630.1 L40.0,628.8 L41.0,632.6 L42.0,640.5 L43.0,646.0 L44.0,647.1 L45.0,643.8 L46.0,635.5 L47.0,627.9 L48.0,626.5 L49.0,631.4 L50.0,640.0 L51.0,645.8 L52.0,647.6 L53.0,646.6 L54.0,643.1 L55.0,637.4 L56.0,632.3 L57.0,630.6 L58.0,633.4 L59.0,639.5 L60.0,644.6 L61.0,646.0 L62.0,643.5 L63.0,637.3 L64.0,632.2 L65.0,633.7 L66.0,641.0 L67.0,646.7 L68.0,647.6 L69.0,643.1 L70.0,632.5 L71.0,625.6 L72.0,627.5 L73.0,637.9 L74.0,647.1 L75.0,649.6 L76.0,648.7 L77.0,644.5 L78.0,638.0 L79.0,634.2 L80.0,634.0 L81.0,635.6 L82.0,638.0 L83.0,641.6 L84.0,645.9 L85.0,648.7 L86.0,649.3 L87.0,647.5 L88.0,641.9 L89.0,635.4 L90.0,634.7 L91.0,639.8 L92.0,644.9 L93.0,646.4 L94.0,644.8 L95.0,642.2 L96.0,642.1 L97.0,645.0 L98.0,647.2 L99.0,646.6 L100.0,642.2 L101.0,635.5 L102.0,633.1 L103.0,636.9 L104.0,641.9 L105.0,643.0 L106.0,639.2 L107.0,633.7 L108.0,633.0 L109.0,638.9 L110.0,644.9 L111.0,645.3 L112.0,637.3 L113.0,623.7 L114.0,618.6 L115.0,619.1 L116.0,626.1 L117.0,638.7 L118.0,643.7 L119.0,640.3 L120.0,630.8 L121.0,623.3 L122.0,620.5 L123.0,619.8 L124.0,619.7 L125.0,620.1 L126.0,622.1 L127.0,627.3 L128.0,633.0 L129.0,632.8 L130.0,625.4 L131.0,619.1 L132.0,617.6 L133.0,619.0 L134.0,625.6 L135.0,633.1 L136.0,630.6 L137.0,621.4 L138.0,617.4 L139.0,617.4 L140.0,622.2 L141.0,636.0 L142.0,642.9 L143.0,638.0 L144.0,625.1 L145.0,618.9 L146.0,618.4 L147.0,621.5 L148.0,628.3 L149.0,633.5 L150.0,634.4 L151.0,634.4 L152.0,635.8 L153.0,636.9 L154.0,634.3 L155.0,628.0 L156.0,623.3 L157.0,623.5 L158.0,629.9 L159.0,639.5 L160.0,643.0 L161.0,639.1 L162.0,630.6 L163.0,626.4 L164.0,630.0 L165.0,638.6 L166.0,642.9 L167.0,639.3 L168.0,628.9 L169.0,622.5 L170.0,623.5 L171.0,631.8 L172.0,641.3 L173.0,643.0 L174.0,637.5 L175.0,629.3 L176.0,626.3 L177.0,629.1 L178.0,633.5 L179.0,633.8 L180.0,629.1 L181.0,625.1 L182.0,626.1 L183.0,632.7 L184.0,639.7 L185.0,640.2 L186.0,633.7 L187.0,626.0 L188.0,624.0 L189.0,628.4 L190.0,636.5 L191.0,640.1 L192.0,636.7 L193.0,630.1 L194.0,627.3 L195.0,631.2 L196.0,638.9 L197.0,643.3 L198.0,642.3 L199.0,637.7 L200.0,634.3 L201.0,635.9 L202.0,640.1 L203.0,642.1 L204.0,640.5 L205.0,637.7 L206.0,638.5 L207.0,643.9 L208.0,648.3 L209.0,649.1 L210.0,646.1 L211.0,637.9 L212.0,632.4 L213.0,636.8 L214.0,646.1 L215.0,650.1 L216.0,650.2 L217.0,646.7 L218.0,638.4 L219.0,633.9 L220.0,638.2 L221.0,645.4 L222.0,648.6 L223.0,648.5 L224.0,645.7 L225.0,641.4 L226.0,638.2 L227.0,637.0 L228.0,636.3 L229.0,636.1 L230.0,637.9 L231.0,642.0 L232.0,645.6 L233.0,646.1 L234.0,641.6 L235.0,631.1 L236.0,623.5 L237.0,623.1 L238.0,629.4 L239.0,639.3 L240.0,643.4 L241.0,640.4 L242.0,631.8 L243.0,625.3 L244.0,624.6 L245.0,628.3 L246.0,633.0 L247.0,634.3 L248.0,631.8 L249.0,628.7 L250.0,627.8 L251.0,628.7 L252.0,629.7 L253.0,629.4 L254.0,628.7 L255.0,630.0 L256.0,634.1 L257.0,638.7 L258.0,639.6 L259.0,635.1 L260.0,627.2 L261.0,622.5 L262.0,622.9 L263.0,629.0 L264.0,639.3 L265.0,645.4 L266.0,646.2 L267.0,642.7 L268.0,635.1 L269.0,627.6 L270.0,624.2 L271.0,624.7 L272.0,629.2 L273.0,637.3 L274.0,644.0 L275.0,646.2 L276.0,644.0 L277.0,636.2 L278.0,626.7 L279.0,622.9 L280.0,624.7 L281.0,631.8 L282.0,639.2 L283.0,640.8 L284.0,635.4 L285.0,626.5 L286.0,621.7 L287.0,621.8 L288.0,626.6 L289.0,634.9 L290.0,639.2 L291.0,636.1 L292.0,626.5 L293.0,619.3 L294.0,617.2 L295.0,617.4 L296.0,620.5 L297.0,629.3 L298.0,637.9 L299.0,638.4 L300.0,630.6 L301.0,621.2 L302.0,617.6 L303.0,616.9 L304.0,617.8 L305.0,621.1 L306.0,626.9 L307.0,631.2 L308.0,631.3 L309.0,628.5 L310.0,625.2 L311.0,623.2 L312.0,622.6 L313.0,623.2 L314.0,624.7 L315.0,626.6 L316.0,628.2 L317.0,629.1 L318.0,630.0 L319.0,632.0 L320.0,635.4 L321.0,638.6 L322.0,639.6 L323.0,637.4 L324.0,633.1 L325.0,630.1 L326.0,630.9 L327.0,635.5 L328.0,640.6 L329.0,643.0 L330.0,642.6 L331.0,641.1 L332.0,641.4 L333.0,643.9 L334.0,646.1 L335.0,645.6 L336.0,641.2 L337.0,633.6 L338.0,629.5 L339.0,633.0 L340.0,642.1 L341.0,648.2 L342.0,649.7 L343.0,648.4 L344.0,643.8 L345.0,636.8 L346.0,632.3 L347.0,631.5 L348.0,633.1 L349.0,636.2 L350.0,640.4 L351.0,644.5 L352.0,646.5 L353.0,645.6 L354.0,640.6 L355.0,632.6 L356.0,628.4 L357.0,630.8 L358.0,637.8 L359.0,642.7 L360.0,642.2 L361.0,636.7" transform="translate(0,-593)" fill="none" stroke="#3a7686" stroke-width=".5" opacity=".75"/><circle cx="29.0" cy="40.0" r=".9" fill="#245f74"/><circle cx="33.0" cy="35.5" r=".9" fill="#245f74"/><circle cx="37.0" cy="44.7" r=".9" fill="#245f74"/><circle cx="40.0" cy="35.8" r=".9" fill="#245f74"/><circle cx="44.0" cy="54.1" r=".9" fill="#245f74"/><circle cx="48.0" cy="33.5" r=".9" fill="#245f74"/><circle cx="52.0" cy="54.6" r=".9" fill="#245f74"/><circle cx="57.0" cy="37.6" r=".9" fill="#245f74"/><circle cx="61.0" cy="53.0" r=".9" fill="#245f74"/><circle cx="64.0" cy="39.2" r=".9" fill="#245f74"/><circle cx="68.0" cy="54.6" r=".9" fill="#245f74"/><circle cx="71.0" cy="32.6" r=".9" fill="#245f74"/><circle cx="75.0" cy="56.6" r=".9" fill="#245f74"/><circle cx="80.0" cy="41.0" r=".9" fill="#245f74"/><circle cx="86.0" cy="56.3" r=".9" fill="#245f74"/><circle cx="90.0" cy="41.7" r=".9" fill="#245f74"/><circle cx="93.0" cy="53.4" r=".9" fill="#245f74"/><circle cx="96.0" cy="49.1" r=".9" fill="#245f74"/><circle cx="98.0" cy="54.2" r=".9" fill="#245f74"/><circle cx="102.0" cy="40.1" r=".9" fill="#245f74"/><circle cx="105.0" cy="50.0" r=".9" fill="#245f74"/><circle cx="108.0" cy="40.0" r=".9" fill="#245f74"/><circle cx="111.0" cy="52.3" r=".9" fill="#245f74"/><circle cx="114.0" cy="25.6" r=".9" fill="#245f74"/><circle cx="118.0" cy="50.7" r=".9" fill="#245f74"/><circle cx="124.0" cy="26.7" r=".9" fill="#245f74"/><circle cx="128.0" cy="40.0" r=".9" fill="#245f74"/><circle cx="132.0" cy="24.6" r=".9" fill="#245f74"/><circle cx="135.0" cy="40.1" r=".9" fill="#245f74"/><circle cx="138.0" cy="24.4" r=".9" fill="#245f74"/><circle cx="142.0" cy="49.9" r=".9" fill="#245f74"/><circle cx="146.0" cy="25.4" r=".9" fill="#245f74"/><circle cx="150.0" cy="41.4" r=".9" fill="#245f74"/><circle cx="151.0" cy="41.4" r=".9" fill="#245f74"/><circle cx="153.0" cy="43.9" r=".9" fill="#245f74"/><circle cx="156.0" cy="30.3" r=".9" fill="#245f74"/><circle cx="160.0" cy="50.0" r=".9" fill="#245f74"/><circle cx="163.0" cy="33.4" r=".9" fill="#245f74"/><circle cx="166.0" cy="49.9" r=".9" fill="#245f74"/><circle cx="169.0" cy="29.5" r=".9" fill="#245f74"/><circle cx="173.0" cy="50.0" r=".9" fill="#245f74"/><circle cx="176.0" cy="33.3" r=".9" fill="#245f74"/><circle cx="179.0" cy="40.8" r=".9" fill="#245f74"/><circle cx="181.0" cy="32.1" r=".9" fill="#245f74"/><circle cx="185.0" cy="47.2" r=".9" fill="#245f74"/><circle cx="188.0" cy="31.0" r=".9" fill="#245f74"/><circle cx="191.0" cy="47.1" r=".9" fill="#245f74"/><circle cx="194.0" cy="34.3" r=".9" fill="#245f74"/><circle cx="197.0" cy="50.3" r=".9" fill="#245f74"/><circle cx="200.0" cy="41.3" r=".9" fill="#245f74"/><circle cx="203.0" cy="49.1" r=".9" fill="#245f74"/><circle cx="205.0" cy="44.7" r=".9" fill="#245f74"/><circle cx="209.0" cy="56.1" r=".9" fill="#245f74"/><circle cx="212.0" cy="39.4" r=".9" fill="#245f74"/><circle cx="216.0" cy="57.2" r=".9" fill="#245f74"/><circle cx="219.0" cy="40.9" r=".9" fill="#245f74"/><circle cx="222.0" cy="55.6" r=".9" fill="#245f74"/><circle cx="229.0" cy="43.1" r=".9" fill="#245f74"/><circle cx="233.0" cy="53.1" r=".9" fill="#245f74"/><circle cx="237.0" cy="30.1" r=".9" fill="#245f74"/><circle cx="240.0" cy="50.4" r=".9" fill="#245f74"/><circle cx="244.0" cy="31.6" r=".9" fill="#245f74"/><circle cx="247.0" cy="41.3" r=".9" fill="#245f74"/><circle cx="250.0" cy="34.8" r=".9" fill="#245f74"/><circle cx="252.0" cy="36.7" r=".9" fill="#245f74"/><circle cx="254.0" cy="35.7" r=".9" fill="#245f74"/><circle cx="258.0" cy="46.6" r=".9" fill="#245f74"/><circle cx="261.0" cy="29.5" r=".9" fill="#245f74"/><circle cx="266.0" cy="53.2" r=".9" fill="#245f74"/><circle cx="270.0" cy="31.2" r=".9" fill="#245f74"/><circle cx="275.0" cy="53.2" r=".9" fill="#245f74"/><circle cx="279.0" cy="29.9" r=".9" fill="#245f74"/><circle cx="283.0" cy="47.8" r=".9" fill="#245f74"/><circle cx="286.0" cy="28.7" r=".9" fill="#245f74"/><circle cx="290.0" cy="46.2" r=".9" fill="#245f74"/><circle cx="294.0" cy="24.2" r=".9" fill="#245f74"/><circle cx="299.0" cy="45.4" r=".9" fill="#245f74"/><circle cx="303.0" cy="23.9" r=".9" fill="#245f74"/><circle cx="308.0" cy="38.3" r=".9" fill="#245f74"/><circle cx="312.0" cy="29.6" r=".9" fill="#245f74"/><circle cx="322.0" cy="46.6" r=".9" fill="#245f74"/><circle cx="325.0" cy="37.1" r=".9" fill="#245f74"/><circle cx="329.0" cy="50.0" r=".9" fill="#245f74"/><circle cx="331.0" cy="48.1" r=".9" fill="#245f74"/><circle cx="334.0" cy="53.1" r=".9" fill="#245f74"/><circle cx="338.0" cy="36.5" r=".9" fill="#245f74"/><circle cx="342.0" cy="56.7" r=".9" fill="#245f74"/><circle cx="347.0" cy="38.5" r=".9" fill="#245f74"/><circle cx="352.0" cy="53.5" r=".9" fill="#245f74"/><circle cx="356.0" cy="35.4" r=".9" fill="#245f74"/><circle cx="359.0" cy="49.7" r=".9" fill="#245f74"/><path d="M37 53 l5 5 M42 53 l-5 5" stroke="#e04040" stroke-width=".8"/></svg>
<div class="a" style="left:0px;top:230px;width:380px;height:98px;background:#e4eaf2;border:1px solid #8d9299;border-right:2px solid #dde4ec;border-top:2px solid #7d8288"></div><div class="a" style="left:1px;top:232px;width:377px;height:14px;background:linear-gradient(#c9d5e1,#e2e9f1)"></div><div class="a" style="left:4px;top:235px;width:8px;height:8px;background:linear-gradient(135deg,#5ab4e6,#1d7fc0);border-radius:1px"></div><div class="a" style="left:6px;top:236.5px;width:3px;height:5px;border:1px solid #e8f4fc;border-right:none"></div><div class="a" style="left:14px;top:234.79999999999995px;font-size:6.6px;color:#a3aab3;white-space:nowrap;line-height:9px;transform:scaleX(0.85);transform-origin:0 0">Multibeam (Reson7k RawDetect7027) (4.608 s)</div><div class="a" style="left:325.5px;top:234px;width:16.5px;height:10px;border:1px solid #b9c2cd;border-radius:2px;background:linear-gradient(#e8edf3,#d3dbe6)"></div><div class="a" style="left:343px;top:234px;width:16.5px;height:10px;border:1px solid #b9c2cd;border-radius:2px;background:linear-gradient(#e8edf3,#d3dbe6)"></div><div class="a" style="left:361px;top:234px;width:16.5px;height:10px;border:1px solid #b9c2cd;border-radius:2px;background:linear-gradient(#e8edf3,#d3dbe6)"></div><svg class="a" style="left:325px;top:234px" width="54" height="11"><rect x="5.5" y="4.5" width="7" height="2.5" rx="1" fill="#fff" stroke="#777" stroke-width=".8"/><rect x="23" y="2.5" width="7" height="6" rx="1.2" fill="#fff" stroke="#777" stroke-width=".8"/><rect x="25" y="4.5" width="3" height="2" fill="#777"/><path d="M41.5 2 l7 7 M48.5 2 l-7 7" stroke="#fff" stroke-width="2.6"/><path d="M41.5 2 l7 7 M48.5 2 l-7 7" stroke="#888" stroke-width="1" /></svg>
<div class="a" style="left:3px;top:246px;width:375px;height:12px;background:linear-gradient(#f3f5f9,#e2e7ef)"></div>
<svg class="a" style="left:0;top:246px" width="378" height="12"><path d="M6.5 1.5 V10.5 M35.5 1.5 V10.5 M171 1.5 V10.5" stroke="#c4c9d0" stroke-width=".8"/><path d="M9.5 9.5 l5.5 -6 l1 1 l-5.5 6 Z" fill="#222"/><path d="M8.5 10 h7" stroke="#555" stroke-width=".6"/><path d="M17.5 8.5 l5 -4.5 l2.5 2 l-5 4.5 Z" fill="#888"/><path d="M17.5 8.5 l5 -4.5" stroke="#444" stroke-width=".8"/><path d="M26.0 8.5 l5 -4.5 l2.5 2 l-5 4.5 Z" fill="#888"/><path d="M26.0 8.5 l5 -4.5" stroke="#444" stroke-width=".8"/><path d="M39.0 10 V2.5 M39.0 2.8 h4.5 l-1 1.8 l1 1.8 h-4.5" fill="#111" stroke="#111" stroke-width=".9"/><path d="M48.5 10 V2.5 M48.5 2.8 h4.5 l-1 1.8 l1 1.8 h-4.5" fill="#333" stroke="#333" stroke-width=".9"/><circle cx="59" cy="6" r="3.2" fill="none" stroke="#555" stroke-width=".9"/><path d="M57.5 6 h3" stroke="#555" stroke-width=".8"/><path d="M65.5 10 V2.5 M65.5 2.8 h4.5 l-1 1.8 l1 1.8 h-4.5" fill="#333" stroke="#333" stroke-width=".9"/><path d="M74.5 10 V2.5 M74.5 2.8 h4.5 l-1 1.8 l1 1.8 h-4.5" fill="#333" stroke="#333" stroke-width=".9"/><path d="M83.0 10 V2.5 M83.0 2.8 h4.5 l-1 1.8 l1 1.8 h-4.5" fill="#333" stroke="#333" stroke-width=".9"/><path d="M92.0 10 V2.5 M92.0 2.8 h4.5 l-1 1.8 l1 1.8 h-4.5" fill="#333" stroke="#333" stroke-width=".9"/><path d="M101.0 10 V2.5 M101.0 2.8 h4.5 l-1 1.8 l1 1.8 h-4.5" fill="#333" stroke="#333" stroke-width=".9"/><path d="M109.5 10 V2.5 M109.5 2.8 h4.5 l-1 1.8 l1 1.8 h-4.5" fill="#333" stroke="#333" stroke-width=".9"/><path d="M118.5 10 V2.5 M118.5 2.8 h4.5 l-1 1.8 l1 1.8 h-4.5" fill="#333" stroke="#333" stroke-width=".9"/><path d="M127.5 10 V2.5 M127.5 2.8 h4.5 l-1 1.8 l1 1.8 h-4.5" fill="#333" stroke="#333" stroke-width=".9"/><path d="M136 9 l6 -6" stroke="#222" stroke-width="1.6"/><rect x="145" y="3" width="6" height="6" fill="none" stroke="#888" stroke-width=".8"/><path d="M145 9 l6 -6" stroke="#888" stroke-width=".6"/><path d="M153 9 l6 -6" stroke="#222" stroke-width="1.6"/><rect x="162" y="3" width="6" height="6" fill="none" stroke="#888" stroke-width=".8"/><path d="M162 9 l6 -6" stroke="#888" stroke-width=".6"/><path d="M173.5 8 l1 -5 l2 1 l1 -1 l2 2 l-1 4 Z" fill="none" stroke="#777" stroke-width=".8"/><path d="M182 8 l1 -5 l2 1 l1 -1 l2 2 l-1 4 Z" fill="none" stroke="#777" stroke-width=".8"/><path d="M196.5 4 a3 3 0 1 0 0.5 4" fill="none" stroke="#222" stroke-width="1.3"/><path d="M199.5 9.5 h7 l-3.5 -7 Z" fill="none" stroke="#333" stroke-width="1"/><path d="M208.5 9 l6 -6" stroke="#222" stroke-width="1.6"/><path d="M218.0 10 V2.5 M218.0 2.8 h4.5 l-1 1.8 l1 1.8 h-4.5" fill="#333" stroke="#333" stroke-width=".9"/><path d="M226.5 10 V2.5 M226.5 2.8 h4.5 l-1 1.8 l1 1.8 h-4.5" fill="#333" stroke="#333" stroke-width=".9"/><circle cx="238" cy="6" r="3.6" fill="#1a1a1a"/><path d="M238 4.5 v4" stroke="#fff" stroke-width="1"/><circle cx="165" cy="6" r="3.8" fill="#2a2a2a"/><path d="M162 6.5 q3 -2 6 0" stroke="#bbb" stroke-width=".7" fill="none"/><rect x="245" y="1" width="40" height="10" fill="#e4e8ef"/><text x="247" y="8.5" font-size="6.5" fill="#9aa3ad" font-family="Liberation Sans" textLength="36" lengthAdjust="spacingAndGlyphs">XT Edit Depth</text><rect x="285" y="1" width="27" height="10" fill="#f4f5f7"/><text x="303" y="7.5" font-size="6.5" fill="#555" font-family="Liberation Sans">5</text><text x="309" y="10" font-size="5" fill="#777" font-family="Liberation Sans">s</text></svg>
<div class="a" style="left:3px;top:258px;width:375px;height:65px;background:#fff"></div>
<svg class="a" style="left:0;top:258px" width="380" height="66" font-family="Liberation Sans" font-size="8.5" stroke="#111" stroke-width=".15"><path d="M23 17.5 H361" stroke="#aaa" stroke-width=".8" stroke-dasharray="1.5,2"/><path d="M23 35 H361" stroke="#aaa" stroke-width=".8" stroke-dasharray="1.5,2"/><path d="M48.0 13 V47.5" stroke="#aaa" stroke-width=".8" stroke-dasharray="1.5,2"/><path d="M48.0 47.5 V50" stroke="#666" stroke-width="1"/><text x="48.0" y="57" text-anchor="middle" fill="#111" textLength="25" lengthAdjust="spacingAndGlyphs">-30.00 m</text><path d="M81.2 13 V47.5" stroke="#aaa" stroke-width=".8" stroke-dasharray="1.5,2"/><path d="M81.2 47.5 V50" stroke="#666" stroke-width="1"/><text x="81.2" y="57" text-anchor="middle" fill="#111" textLength="25" lengthAdjust="spacingAndGlyphs">-20.00 m</text><path d="M114.4 13 V47.5" stroke="#aaa" stroke-width=".8" stroke-dasharray="1.5,2"/><path d="M114.4 47.5 V50" stroke="#666" stroke-width="1"/><text x="114.4" y="57" text-anchor="middle" fill="#111" textLength="25" lengthAdjust="spacingAndGlyphs">-10.00 m</text><path d="M147.6 13 V47.5" stroke="#aaa" stroke-width=".8" stroke-dasharray="1.5,2"/><path d="M147.6 47.5 V50" stroke="#666" stroke-width="1"/><text x="147.6" y="57" text-anchor="middle" fill="#111" textLength="22" lengthAdjust="spacingAndGlyphs">0.00 m</text><path d="M180.8 13 V47.5" stroke="#aaa" stroke-width=".8" stroke-dasharray="1.5,2"/><path d="M180.8 47.5 V50" stroke="#666" stroke-width="1"/><text x="180.8" y="57" text-anchor="middle" fill="#111" textLength="22" lengthAdjust="spacingAndGlyphs">10.00 m</text><path d="M214.0 13 V47.5" stroke="#aaa" stroke-width=".8" stroke-dasharray="1.5,2"/><path d="M214.0 47.5 V50" stroke="#666" stroke-width="1"/><text x="214.0" y="57" text-anchor="middle" fill="#111" textLength="22" lengthAdjust="spacingAndGlyphs">20.00 m</text><path d="M247.2 13 V47.5" stroke="#aaa" stroke-width=".8" stroke-dasharray="1.5,2"/><path d="M247.2 47.5 V50" stroke="#666" stroke-width="1"/><text x="247.2" y="57" text-anchor="middle" fill="#111" textLength="22" lengthAdjust="spacingAndGlyphs">30.00 m</text><path d="M280.4 13 V47.5" stroke="#aaa" stroke-width=".8" stroke-dasharray="1.5,2"/><path d="M280.4 47.5 V50" stroke="#666" stroke-width="1"/><text x="280.4" y="57" text-anchor="middle" fill="#111" textLength="22" lengthAdjust="spacingAndGlyphs">40.00 m</text><path d="M313.6 13 V47.5" stroke="#aaa" stroke-width=".8" stroke-dasharray="1.5,2"/><path d="M313.6 47.5 V50" stroke="#666" stroke-width="1"/><text x="313.6" y="57" text-anchor="middle" fill="#111" textLength="22" lengthAdjust="spacingAndGlyphs">50.00 m</text><path d="M346.8 13 V47.5" stroke="#aaa" stroke-width=".8" stroke-dasharray="1.5,2"/><path d="M346.8 47.5 V50" stroke="#666" stroke-width="1"/><text x="346.8" y="57" text-anchor="middle" fill="#111" textLength="22" lengthAdjust="spacingAndGlyphs">60.00 m</text><polygon points="40.6,46.60000000000002 148,17.5 361,45.799999999999955 361,47.5 40,47.5" fill="#5ccaf1"/><path d="M148 17.5 L361, 46.60000000000002" stroke="#8edcf7" stroke-width=".5"/><path d="M148 17.5 L361, 46.49285714285713" stroke="#8edcf7" stroke-width=".5"/><path d="M148 17.5 L361, 46.38571428571436" stroke="#8edcf7" stroke-width=".5"/><path d="M148 17.5 L361, 46.27857142857147" stroke="#8edcf7" stroke-width=".5"/><path d="M148 17.5 L361, 46.17142857142858" stroke="#8edcf7" stroke-width=".5"/><path d="M148 17.5 L361, 46.06428571428569" stroke="#8edcf7" stroke-width=".5"/><path d="M148 17.5 L361, 45.95714285714291" stroke="#8edcf7" stroke-width=".5"/><path d="M148 17.5 L361, 45.85000000000002" stroke="#8edcf7" stroke-width=".5"/><path d="M148 17.5 L361, 45.74285714285713" stroke="#8edcf7" stroke-width=".5"/><path d="M148 17.5 L361, 45.63571428571436" stroke="#8edcf7" stroke-width=".5"/><path d="M148 17.5 L361, 45.52857142857147" stroke="#8edcf7" stroke-width=".5"/><path d="M148 17.5 L361, 45.42142857142858" stroke="#8edcf7" stroke-width=".5"/><path d="M148 17.5 L361, 45.31428571428569" stroke="#8edcf7" stroke-width=".5"/><path d="M148 17.5 L361, 45.20714285714291" stroke="#8edcf7" stroke-width=".5"/><path d="M148 18 Q151.3 30.0 162.1 46.5" fill="none" stroke="#b8ecfb" stroke-width=".35" opacity=".7"/><path d="M148 18 Q142.5 30.0 115.1 46.5" fill="none" stroke="#b8ecfb" stroke-width=".35" opacity=".7"/><path d="M148 18 Q122.1 30.0 95.9 46.5" fill="none" stroke="#b8ecfb" stroke-width=".35" opacity=".7"/><path d="M148 18 Q174.1 30.0 225.3 46.5" fill="none" stroke="#b8ecfb" stroke-width=".35" opacity=".7"/><path d="M148 18 Q165.2 30.0 175.4 46.5" fill="none" stroke="#b8ecfb" stroke-width=".35" opacity=".7"/><path d="M148 18 Q120.8 30.0 100.9 46.5" fill="none" stroke="#b8ecfb" stroke-width=".35" opacity=".7"/><path d="M148 18 Q171.1 30.0 197.0 46.5" fill="none" stroke="#b8ecfb" stroke-width=".35" opacity=".7"/><path d="M148 18 Q163.8 30.0 200.1 46.5" fill="none" stroke="#b8ecfb" stroke-width=".35" opacity=".7"/><path d="M148 18 Q127.1 30.0 129.5 46.5" fill="none" stroke="#b8ecfb" stroke-width=".35" opacity=".7"/><path d="M148 18 Q170.9 30.0 168.4 46.5" fill="none" stroke="#b8ecfb" stroke-width=".35" opacity=".7"/><path d="M148 18 Q172.5 30.0 180.6 46.5" fill="none" stroke="#b8ecfb" stroke-width=".35" opacity=".7"/><path d="M148 18 Q156.7 30.0 150.6 46.5" fill="none" stroke="#b8ecfb" stroke-width=".35" opacity=".7"/><path d="M148 18 Q122.6 30.0 109.7 46.5" fill="none" stroke="#b8ecfb" stroke-width=".35" opacity=".7"/><path d="M148 18 Q177.2 30.0 192.8 46.5" fill="none" stroke="#b8ecfb" stroke-width=".35" opacity=".7"/><path d="M148 18 Q139.7 30.0 156.2 46.5" fill="none" stroke="#b8ecfb" stroke-width=".35" opacity=".7"/><path d="M148 18 Q132.1 30.0 133.7 46.5" fill="none" stroke="#b8ecfb" stroke-width=".35" opacity=".7"/><path d="M148 18 Q151.2 30.0 135.8 46.5" fill="none" stroke="#b8ecfb" stroke-width=".35" opacity=".7"/><path d="M148 18 Q147.6 30.0 123.9 46.5" fill="none" stroke="#b8ecfb" stroke-width=".35" opacity=".7"/><path d="M148 18 Q171.9 30.0 222.5 46.5" fill="none" stroke="#b8ecfb" stroke-width=".35" opacity=".7"/><path d="M148 18 Q148.7 30.0 149.9 46.5" fill="none" stroke="#b8ecfb" stroke-width=".35" opacity=".7"/><path d="M148 18 Q120.9 30.0 98.4 46.5" fill="none" stroke="#b8ecfb" stroke-width=".35" opacity=".7"/><path d="M148 18 Q175.6 30.0 226.4 46.5" fill="none" stroke="#b8ecfb" stroke-width=".35" opacity=".7"/><path d="M148 18 Q153.4 30.0 181.5 46.5" fill="none" stroke="#b8ecfb" stroke-width=".35" opacity=".7"/><path d="M148 18 Q175.3 30.0 178.9 46.5" fill="none" stroke="#b8ecfb" stroke-width=".35" opacity=".7"/><path d="M148 18 Q121.5 30.0 124.4 46.5" fill="none" stroke="#b8ecfb" stroke-width=".35" opacity=".7"/><path d="M148 18 Q128.7 30.0 107.1 46.5" fill="none" stroke="#b8ecfb" stroke-width=".35" opacity=".7"/><path d="M148 18 Q110.3 30.0 97.5 46.5" fill="none" stroke="#b8ecfb" stroke-width=".35" opacity=".7"/><path d="M148 18 Q170.1 30.0 167.0 46.5" fill="none" stroke="#b8ecfb" stroke-width=".35" opacity=".7"/><path d="M148 18 Q148.9 30.0 155.9 46.5" fill="none" stroke="#b8ecfb" stroke-width=".35" opacity=".7"/><path d="M148 18 Q155.6 30.0 187.6 46.5" fill="none" stroke="#b8ecfb" stroke-width=".35" opacity=".7"/><path d="M148 18 Q153.7 30.0 179.1 46.5" fill="none" stroke="#b8ecfb" stroke-width=".35" opacity=".7"/><path d="M148 18 Q179.4 30.0 183.3 46.5" fill="none" stroke="#b8ecfb" stroke-width=".35" opacity=".7"/><path d="M148 18 Q127.1 30.0 102.9 46.5" fill="none" stroke="#b8ecfb" stroke-width=".35" opacity=".7"/><path d="M148 18 Q154.9 30.0 182.9 46.5" fill="none" stroke="#b8ecfb" stroke-width=".35" opacity=".7"/><path d="M148 18 Q155.8 30.0 133.9 46.5" fill="none" stroke="#b8ecfb" stroke-width=".35" opacity=".7"/><path d="M148 18 Q182.5 30.0 239.7 46.5" fill="none" stroke="#b8ecfb" stroke-width=".35" opacity=".7"/><path d="M148 18 Q186.2 30.0 197.3 46.5" fill="none" stroke="#b8ecfb" stroke-width=".35" opacity=".7"/><path d="M148 18 Q142.0 30.0 129.3 46.5" fill="none" stroke="#b8ecfb" stroke-width=".35" opacity=".7"/><path d="M148 18 Q120.6 30.0 101.2 46.5" fill="none" stroke="#b8ecfb" stroke-width=".35" opacity=".7"/><path d="M148 18 Q173.1 30.0 192.7 46.5" fill="none" stroke="#b8ecfb" stroke-width=".35" opacity=".7"/><path d="M148 17.5 L361 42.5" stroke="#8ad9f5" stroke-width=".4"/><path d="M148 17.5 L361 42.9" stroke="#8ad9f5" stroke-width=".4"/><path d="M148 17.5 L361 43.2" stroke="#8ad9f5" stroke-width=".4"/><path d="M148 17.5 L361 43.5" stroke="#8ad9f5" stroke-width=".4"/><path d="M148 17.5 L361 43.9" stroke="#8ad9f5" stroke-width=".4"/><path d="M148 17.5 L361 44.2" stroke="#8ad9f5" stroke-width=".4"/><path d="M148 17.5 L361 44.6" stroke="#8ad9f5" stroke-width=".4"/><path d="M148 17.5 L361 45.0" stroke="#8ad9f5" stroke-width=".4"/><path d="M148 17.5 L361 45.3" stroke="#8ad9f5" stroke-width=".4"/><path d="M148 17.5 L361 45.6" stroke="#8ad9f5" stroke-width=".4"/><path d="M23 13 V47.5 H362" fill="none" stroke="#6c6c6c" stroke-width="1"/><text x="21" y="16" fill="#111" font-size="8">m</text><text x="19" y="20.5" text-anchor="end" fill="#111">0.00</text><text x="19" y="38" text-anchor="end" fill="#111">5.00</text></svg>
<div class="a" style="left:0px;top:326px;width:380px;height:44px;background:#e4eaf2;border:1px solid #8d9299;border-right:2px solid #dde4ec;border-top:2px solid #7d8288"></div><div class="a" style="left:1px;top:328px;width:377px;height:14px;background:linear-gradient(#c9d5e1,#e2e9f1)"></div><div class="a" style="left:4px;top:331px;width:8px;height:8px;background:linear-gradient(135deg,#5ab4e6,#1d7fc0);border-radius:1px"></div><div class="a" style="left:6px;top:332.5px;width:3px;height:5px;border:1px solid #e8f4fc;border-right:none"></div><div class="a" style="left:14px;top:330.79999999999995px;font-size:6.6px;color:#a3aab3;white-space:nowrap;line-height:9px;transform:scaleX(0.85);transform-origin:0 0">Navigation (ApxPosmvPos)&#160;&#160;&#160; (4.600, 576584.26, 6225281.07)&#160;&#160;Kp:0.00000 Dal:0.00 Dol:0.00</div><div class="a" style="left:325.5px;top:330px;width:16.5px;height:10px;border:1px solid #b9c2cd;border-radius:2px;background:linear-gradient(#e8edf3,#d3dbe6)"></div><div class="a" style="left:343px;top:330px;width:16.5px;height:10px;border:1px solid #b9c2cd;border-radius:2px;background:linear-gradient(#e8edf3,#d3dbe6)"></div><div class="a" style="left:361px;top:330px;width:16.5px;height:10px;border:1px solid #b9c2cd;border-radius:2px;background:linear-gradient(#e8edf3,#d3dbe6)"></div><svg class="a" style="left:325px;top:330px" width="54" height="11"><rect x="5.5" y="4.5" width="7" height="2.5" rx="1" fill="#fff" stroke="#777" stroke-width=".8"/><rect x="23" y="2.5" width="7" height="6" rx="1.2" fill="#fff" stroke="#777" stroke-width=".8"/><rect x="25" y="4.5" width="3" height="2" fill="#777"/><path d="M41.5 2 l7 7 M48.5 2 l-7 7" stroke="#fff" stroke-width="2.6"/><path d="M41.5 2 l7 7 M48.5 2 l-7 7" stroke="#888" stroke-width="1" /></svg>
<div class="a" style="left:3px;top:340.5px;width:375px;height:15px;background:#fbfcfd"></div>
<div class="a" style="left:3px;top:340.5px;width:147px;height:14px;background:linear-gradient(#f3f5f9,#dfe4ec)"></div>
<svg class="a" style="left:0;top:340.5px" width="378" height="15"><path d="M9 11 l6 -6" stroke="#222" stroke-width="1.5"/><circle cx="11" cy="7" r="1.6" fill="none" stroke="#333" stroke-width=".7"/><path d="M18 11 l6 -6" stroke="#222" stroke-width="1.5"/><circle cx="20" cy="7" r="1.6" fill="none" stroke="#333" stroke-width=".7"/><path d="M30 11 l6 -6" stroke="#222" stroke-width="1.5"/><circle cx="32" cy="7" r="1.6" fill="none" stroke="#333" stroke-width=".7"/><path d="M42 11 l6 -6" stroke="#222" stroke-width="1.5"/><circle cx="44" cy="7" r="1.6" fill="none" stroke="#333" stroke-width=".7"/><path d="M51 11 l6 -6" stroke="#222" stroke-width="1.5"/><circle cx="53" cy="7" r="1.6" fill="none" stroke="#333" stroke-width=".7"/><path d="M63 11 l6 -6" stroke="#222" stroke-width="1.5"/><circle cx="65" cy="7" r="1.6" fill="none" stroke="#333" stroke-width=".7"/><path d="M72 11 l6 -6" stroke="#222" stroke-width="1.5"/><circle cx="74" cy="7" r="1.6" fill="none" stroke="#333" stroke-width=".7"/><path d="M81 11 l6 -6" stroke="#222" stroke-width="1.5"/><circle cx="83" cy="7" r="1.6" fill="none" stroke="#333" stroke-width=".7"/><path d="M89 11 l6 -6" stroke="#222" stroke-width="1.5"/><circle cx="91" cy="7" r="1.6" fill="none" stroke="#333" stroke-width=".7"/><path d="M98 11 l6 -6" stroke="#222" stroke-width="1.5"/><circle cx="100" cy="7" r="1.6" fill="none" stroke="#333" stroke-width=".7"/><path d="M106 11 l6 -6" stroke="#222" stroke-width="1.5"/><circle cx="108" cy="7" r="1.6" fill="none" stroke="#333" stroke-width=".7"/><path d="M115 11 l6 -6" stroke="#222" stroke-width="1.5"/><circle cx="117" cy="7" r="1.6" fill="none" stroke="#333" stroke-width=".7"/><path d="M124 11 l6 -6" stroke="#222" stroke-width="1.5"/><circle cx="126" cy="7" r="1.6" fill="none" stroke="#333" stroke-width=".7"/><path d="M133 11 l6 -6" stroke="#222" stroke-width="1.5"/><circle cx="135" cy="7" r="1.6" fill="none" stroke="#333" stroke-width=".7"/><path d="M142 11 l6 -6" stroke="#222" stroke-width="1.5"/><circle cx="144" cy="7" r="1.6" fill="none" stroke="#333" stroke-width=".7"/></svg>
<div class="a" style="left:3px;top:355px;width:375px;height:5px;background:#fff;border-top:1px solid #b8bec6"></div>
<svg class="a" style="left:0;top:355px" width="378" height="4"><rect x="33.5" y="0.5" width="3" height="3" fill="none" stroke="#999" stroke-width=".6"/><rect x="66.5" y="0.5" width="3" height="3" fill="none" stroke="#999" stroke-width=".6"/><rect x="99.5" y="0.5" width="3" height="3" fill="none" stroke="#999" stroke-width=".6"/><rect x="132.5" y="0.5" width="3" height="3" fill="none" stroke="#999" stroke-width=".6"/><rect x="198.5" y="0.5" width="3" height="3" fill="none" stroke="#999" stroke-width=".6"/><rect x="230.5" y="0.5" width="3" height="3" fill="none" stroke="#999" stroke-width=".6"/><rect x="263.5" y="0.5" width="3" height="3" fill="none" stroke="#999" stroke-width=".6"/><rect x="296.5" y="0.5" width="3" height="3" fill="none" stroke="#999" stroke-width=".6"/><rect x="329.5" y="0.5" width="3" height="3" fill="none" stroke="#999" stroke-width=".6"/><rect x="362.5" y="0.5" width="3" height="3" fill="none" stroke="#999" stroke-width=".6"/><path d="M161 0 l6 4" stroke="#1d4f7a" stroke-width="1.8"/></svg>
</div>
<div class="a" style="left:384.5px;top:446px;width:522.5px;height:354px;background:#1f2427;overflow:hidden">
<div class="a" style="left:0.0px;top:0px;width:523px;height:5.5px;background:#141719"></div>
<div class="a" style="left:8px;top:-1.2px;font-size:4.7px;color:#8a9298;white-space:nowrap;line-height:7px;transform:scaleX(.83);transform-origin:0 0">Demo - Video.nmp - EIVA NaviModel Producer 4.5 | Licenses: Internal_EIVA | Coord: ED50 Internal | Ellipsoid 1924 - UTM zone 31N (Datum: 31)*</div>
<div class="a" style="left:0.5px;top:0.5px;width:5px;height:4px;background:#2a9ad6"></div>
<div class="a" style="left:0.0px;top:5.5px;width:523px;height:9px;background:#22272a"></div>
<div class="a" style="left:4.5px;top:6.5px;font-size:5.3px;color:#9aa0a4;line-height:7px">File</div>
<div class="a" style="left:16.5px;top:6.5px;font-size:5.3px;color:#9aa0a4;line-height:7px">View</div>
<div class="a" style="left:31.5px;top:6.5px;font-size:5.3px;color:#9aa0a4;line-height:7px">Settings</div>
<div class="a" style="left:52.5px;top:6.5px;font-size:5.3px;color:#9aa0a4;line-height:7px">Tools</div>
<div class="a" style="left:67.5px;top:6.5px;font-size:5.3px;color:#9aa0a4;line-height:7px">Help</div>
<div class="a" style="left:0.0px;top:14.5px;width:523px;height:12.5px;background:#272c2f"></div>
<svg class="a" style="left:0;top:13.5px" width="523" height="14" viewBox="0 0 523 14"><path d="M6.0 1.5 h4.5 l2.5 2.5 v8 h-7 Z M10.5 1.5 v2.5 h2.5" fill="none" stroke="#d8d8d8" stroke-width=".9"/><path d="M17.5 3.5 h3 l1 1 h4.5 v7 h-8.5 Z M17.5 6 h8.5" fill="none" stroke="#d0d0d0" stroke-width=".9"/><rect x="30.0" y="2.5" width="8.5" height="9" fill="#1e3a1e" stroke="#3cb33c" stroke-width=".9"/><rect x="31.5" y="3" width="5.5" height="2.5" fill="#3cb33c"/><rect x="32.5" y="8.5" width="3.5" height="2" fill="#552255"/><path d="M43.5 11.5 l3 -3 M50.0 4.5 l3 -3" stroke="#e0e0e0" stroke-width="1.2"/><rect x="46.0" y="4.5" width="4.5" height="4" transform="rotate(-45 48.30000000000001 6.5)" fill="#e8e8e8"/><path d="M56.0 2 v9" stroke="#3a4044" stroke-width=".8"/><rect x="58.0" y="1" width="12.5" height="12.5" fill="#114a5f"/><text x="58.80000000000001" y="9.3" font-family="Liberation Sans" font-weight="bold" font-size="8" fill="#f0f0f0" textLength="11" lengthAdjust="spacingAndGlyphs">3D</text><text x="71.0" y="9.3" font-family="Liberation Sans" font-weight="bold" font-size="8" fill="#f0f0f0" textLength="11" lengthAdjust="spacingAndGlyphs">2D</text><text x="84.0" y="9.3" font-family="Liberation Sans" font-weight="bold" font-size="8" fill="#f0f0f0">S</text><path d="M100.0 11.5 l3.5 -9.5 l3.5 9.5 l-3.5 -2.5 Z" fill="#f0f0f0"/><path d="M112.0 9.5 q4 1.5 8 -1 l-1 2.5 h-6.5 Z M114.5 8.5 l2 -5 l3 -1.5 l-1.5 4 Z" fill="#eee"/><circle cx="125.0" cy="6.5" r="4" fill="none" stroke="#ddd" stroke-width=".9"/><path d="M122.5 4.5 h5 l1 2.5 l-2.5 2.5 h-2 l-2.5 -2.5 Z" fill="none" stroke="#ddd" stroke-width=".7"/><rect x="131.0" y="1" width="13.5" height="12.5" fill="#114a5f"/><circle cx="136.0" cy="5" r="2.8" fill="#ddd"/><circle cx="139.5" cy="6" r="2.8" fill="#bbb"/><circle cx="137.0" cy="8.5" r="2.6" fill="#e8e8e8"/><path d="M146.0 6.5 h1.5" stroke="#aaa" stroke-width=".8"/><path d="M149.5 3 h8 M149.5 5.7 h8 M149.5 8.3 h8 M149.5 11 h8 M149.5 3 v8 M152.20000000000005 3 v8 M154.79999999999995 3 v8 M157.5 3 v8" stroke="#d0d0d0" stroke-width=".7"/><rect x="160.0" y="1" width="13" height="12.5" fill="#114a5f"/><path d="M163.0 4 l3 -1.5 l3.5 1 l1 2.5 l-1.5 2 l-1 3 l-1.5 0.5 l-1 -3 l-2.5 -1.5 Z" fill="none" stroke="#e0e0e0" stroke-width=".8"/><circle cx="178.0" cy="6.5" r="4.2" fill="none" stroke="#ddd" stroke-width=".9"/><path d="M173.79999999999995 6.5 h8.4 M178.0 2.3 q-3 4.2 0 8.4 q3 -4.2 0 -8.4" fill="none" stroke="#ddd" stroke-width=".6"/><path d="M185.5 3 l3 -1 l3 1 l3 -1 v8.5 l-3 1 l-3 -1 l-3 1 Z M188.5 2 v8.5 M191.5 3 v8.5" fill="none" stroke="#d8d8d8" stroke-width=".8"/><path d="M196.5 4.5 h2.5 l1 -1.5 h3 l1 1.5 h2 v6.5 h-9.5 Z" fill="#eee"/><circle cx="201.5" cy="7.5" r="2" fill="#333"/><rect x="212.5" y="0.5" width="4" height="12" transform="rotate(45 214.5 6.5)" fill="none" stroke="#ddd" stroke-width=".9"/><path d="M222.0 2 v9" stroke="#3a4044" stroke-width=".8"/><path d="M225.0 7 l1.5 -1.5 l1.5 1 l1.5 -3 l1.5 3 l1.5 -1 l1.5 1.5 l1 -0.5 M225.0 9.5 h10" fill="none" stroke="#e0e0e0" stroke-width=".8"/><path d="M237.0 7 l1.5 -1.5 l1.5 1 l1.5 -3 l1.5 3 l1.5 -1 l1.5 1.5 l1 -0.5 M237.0 9.5 h10" fill="none" stroke="#e0e0e0" stroke-width=".8"/><path d="M249.5 7 l1.5 -1.5 l1.5 1 l1.5 -3 l1.5 3 l1.5 -1 l1.5 1.5 l1 -0.5 M249.5 9.5 h10" fill="none" stroke="#e0e0e0" stroke-width=".8"/><path d="M263.0 2 v9" stroke="#3a4044" stroke-width=".8"/><path d="M267.5 10.5 l8 -8" stroke="#e0e0e0" stroke-width=".9"/><circle cx="267.5" cy="10.5" r="1" fill="#eee"/><circle cx="275.5" cy="2.5" r="1" fill="#eee"/><path d="M282.5 11.5 l-3 -4.5 a3.3 3.3 0 1 1 6 0 Z" fill="#f0f0f0"/><circle cx="282.5" cy="5.3" r="1.2" fill="#272c2f"/><path d="M295.0 12 l-3.5 -5 a3.8 3.8 0 1 1 7 0 Z" fill="#f0f0f0"/><path d="M298.5 3 q2.5 3 0 7" fill="none" stroke="#999" stroke-width="1.2"/><circle cx="295.0" cy="5.3" r="1.3" fill="#272c2f"/><path d="M302.5 11 q2 -1 3 -4 t4.5 -4.5" fill="none" stroke="#ddd" stroke-width=".9"/><circle cx="302.5" cy="11" r="1" fill="#eee"/><circle cx="310.5" cy="2.5" r="1" fill="#eee"/><rect x="314.0" y="2.5" width="9" height="8" fill="none" stroke="#ccc" stroke-width=".8"/><path d="M316.5 6 l2 -1.5 l2 1.5" fill="none" stroke="#ccc" stroke-width=".7"/><path d="M327.0 2 v9" stroke="#3a4044" stroke-width=".8"/><circle cx="334.5" cy="6.5" r="3.8" fill="none" stroke="#ddd" stroke-width="1.1" stroke-dasharray="1.2,.8"/><path d="M334.5 3.5 a3 3 0 0 1 0 6 Z" fill="#eee"/><circle cx="347.0" cy="6.5" r="4.3" fill="#e8e8e8"/><path d="M344.5 4 q2 1 1 3 q2 1 4 0" fill="none" stroke="#555" stroke-width=".8"/><rect x="352.5" y="1" width="12" height="12.5" fill="#114a5f" stroke="#1d6d8a" stroke-width=".5"/><path d="M358.5 2.5 q3 3.5 2.5 5.5 a2.5 2.5 0 0 1 -5 0 q-.5 -2 2.5 -5.5 Z" fill="#eee"/><path d="M354.5 11 l2 -2 h4 l2 2 Z" fill="#ccc"/><rect x="367.0" y="3" width="7" height="7" fill="#e4e4e4"/><path d="M368.0 9 l2.5 -2.5 l2 1.5 l1 -1 v2 Z" fill="#888"/><path d="M379.5 5 l3 -2.5 l3.5 3 l-1 2 l1 1.5 l-2.5 2 l-3.5 -3.5 Z" fill="#e8e8e8"/><rect x="392.5" y="2.5" width="8.5" height="8.5" fill="#6a6a6a"/><path d="M394.5 2.5 v8.5 M396.70000000000005 2.5 v8.5 M398.9 2.5 v8.5 M392.5 4.5 h8.5 M392.5 6.7 h8.5 M392.5 8.9 h8.5" stroke="#888" stroke-width=".5"/><circle cx="409.0" cy="6.5" r="3.6" fill="none" stroke="#5e6468" stroke-width="1"/><circle cx="407.79999999999995" cy="5.5" r=".5" fill="#5e6468"/><circle cx="410.20000000000005" cy="5.5" r=".5" fill="#5e6468"/><circle cx="421.0" cy="6.5" r="3.6" fill="none" stroke="#5e6468" stroke-width="1"/><circle cx="419.79999999999995" cy="5.5" r=".5" fill="#5e6468"/><circle cx="422.20000000000005" cy="5.5" r=".5" fill="#5e6468"/><circle cx="432.0" cy="7.5" r="2" fill="#5e6468"/><circle cx="435.0" cy="4" r=".9" fill="#5e6468"/><circle cx="444.0" cy="7.5" r="2" fill="#5e6468"/><circle cx="447.0" cy="4" r=".9" fill="#5e6468"/></svg>
<div class="a" style="left:0.0px;top:27px;width:107px;height:7px;background:#1a1e20"></div>
<div class="a" style="left:1px;top:27.30000000000001px;font-size:5.5px;color:#8d9498;line-height:7px">Project Tree</div>
<div class="a" style="left:92.5px;top:27.30000000000001px;font-size:5.5px;color:#6a7074;line-height:7px">&#9662;&#160;&#160;&#9632;&#160;&#160;&#215;</div>
<div class="a" style="left:0.0px;top:55.30000000000001px;width:107px;height:5.3px;background:#2a2f31"></div>
<svg class="a" style="left:0;top:32px" width="110" height="100" font-family="Liberation Sans" font-size="4.5" stroke-width=".15"><path d="M6.0 2.5 v3.5 h-3.5 Z" fill="#2ba3d9"/><text x="8.0" y="6.2" fill="#a9afb3" stroke="#a9afb3" font-weight="normal">Demo - Video.nmp</text><path d="M9.5 7.199999999999989 l3 2.5 l-3 2.5 Z" fill="#2ba3d9"/><rect x="14.5" y="7.399999999999989" width="4.2" height="4.2" fill="#111" stroke="#555" stroke-width=".5"/><path d="M15.2 9.49999999999999 l1.2 1.2 l2.3 -3" fill="none" stroke="#2ba3d9" stroke-width="1"/><text x="19.5" y="11.399999999999988" fill="#a9afb3" stroke="#a9afb3" font-weight="normal">Maps</text><path d="M9.5 12.5 l3 2.5 l-3 2.5 Z" fill="#2ba3d9"/><rect x="14.5" y="12.7" width="4.2" height="4.2" fill="#111" stroke="#555" stroke-width=".5"/><path d="M15.2 14.8 l1.2 1.2 l2.3 -3" fill="none" stroke="#2ba3d9" stroke-width="1"/><text x="19.5" y="16.7" fill="#a9afb3" stroke="#a9afb3" font-weight="normal">Runlines</text><path d="M12.5 18.5 v3.5 h-3.5 Z" fill="#2ba3d9"/><rect x="14.5" y="18.2" width="4.2" height="4.2" fill="#111" stroke="#555" stroke-width=".5"/><path d="M15.2 20.3 l1.2 1.2 l2.3 -3" fill="none" stroke="#2ba3d9" stroke-width="1"/><text x="19.5" y="22.2" fill="#a9afb3" stroke="#a9afb3" font-weight="normal">Surveys</text><path d="M16.5 23.5 l3 2.5 l-3 2.5 Z" fill="#2ba3d9"/><rect x="21.5" y="23.7" width="4.2" height="4.2" fill="#111" stroke="#555" stroke-width=".5"/><path d="M22.2 25.8 l1.2 1.2 l2.3 -3" fill="none" stroke="#2ba3d9" stroke-width="1"/><text x="26.5" y="27.7" fill="#f0f0f0" stroke="#f0f0f0" font-weight="bold">02_Cleaned</text><path d="M9.5 28.5 l3 2.5 l-3 2.5 Z" fill="#2ba3d9"/><rect x="14.5" y="28.7" width="4.2" height="4.2" fill="#111" stroke="#555" stroke-width=".5"/><path d="M15.2 30.8 l1.2 1.2 l2.3 -3" fill="none" stroke="#2ba3d9" stroke-width="1"/><text x="19.5" y="32.7" fill="#a9afb3" stroke="#a9afb3" font-weight="normal">Tappings</text><rect x="14.5" y="34.2" width="4.2" height="4.2" fill="#111" stroke="#555" stroke-width=".5"/><path d="M15.2 36.3 l1.2 1.2 l2.3 -3" fill="none" stroke="#2ba3d9" stroke-width="1"/><text x="19.5" y="38.2" fill="#a9afb3" stroke="#a9afb3" font-weight="normal">Events</text><path d="M9.5 39.5 l3 2.5 l-3 2.5 Z" fill="#2ba3d9"/><rect x="14.5" y="39.7" width="4.2" height="4.2" fill="#111" stroke="#555" stroke-width=".5"/><text x="19.5" y="43.7" fill="#a9afb3" stroke="#a9afb3" font-weight="normal">Pipes</text><rect x="14.5" y="44.7" width="4.2" height="4.2" fill="#111" stroke="#555" stroke-width=".5"/><path d="M15.2 46.8 l1.2 1.2 l2.3 -3" fill="none" stroke="#2ba3d9" stroke-width="1"/><text x="19.5" y="48.7" fill="#a9afb3" stroke="#a9afb3" font-weight="normal">Digitized Lines</text><rect x="14.5" y="50.2" width="4.2" height="4.2" fill="#111" stroke="#555" stroke-width=".5"/><path d="M15.2 52.3 l1.2 1.2 l2.3 -3" fill="none" stroke="#2ba3d9" stroke-width="1"/><text x="19.5" y="54.2" fill="#a9afb3" stroke="#a9afb3" font-weight="normal">Measures</text><rect x="14.5" y="55.7" width="4.2" height="4.2" fill="#111" stroke="#555" stroke-width=".5"/><path d="M15.2 57.8 l1.2 1.2 l2.3 -3" fill="none" stroke="#2ba3d9" stroke-width="1"/><text x="19.5" y="59.7" fill="#a9afb3" stroke="#a9afb3" font-weight="normal">Online</text><path d="M9.5 60.5 l3 2.5 l-3 2.5 Z" fill="#2ba3d9"/><text x="14.5" y="64.7" fill="#a9afb3" stroke="#a9afb3" font-weight="normal">Videos</text><path d="M9.5 65.5 l3 2.5 l-3 2.5 Z" fill="#2ba3d9"/><text x="14.5" y="69.7" fill="#a9afb3" stroke="#a9afb3" font-weight="normal">Palettes</text><path d="M9.5 71.5 l3 2.5 l-3 2.5 Z" fill="#2ba3d9"/><text x="14.5" y="75.7" fill="#a9afb3" stroke="#a9afb3" font-weight="normal">Color modes</text><path d="M12.5 77 v3.5 h-3.5 Z" fill="#2ba3d9"/><text x="14.5" y="80.7" fill="#a9afb3" stroke="#a9afb3" font-weight="normal">Views</text><text x="20.0" y="86.2" fill="#a9afb3" stroke="#a9afb3" font-weight="normal">Map View</text><path d="M3.0 87.5 l3 2.5 l-3 2.5 Z" fill="#2ba3d9"/><text x="8.0" y="91.7" fill="#a9afb3" stroke="#a9afb3" font-weight="normal">NaviEdit</text></svg>
<div class="a" style="left:0.0px;top:206px;width:107px;height:7px;background:#1d6a99"></div>
<div class="a" style="left:2px;top:206.29999999999995px;font-size:5.3px;color:#dde;line-height:7px">Properties</div>
<div class="a" style="left:93.5px;top:206.29999999999995px;font-size:5.5px;color:#eef;line-height:7px">&#9662;&#160;&#9632;&#160;&#215;</div>
<svg class="a" style="left:0;top:213px" width="110" height="140" font-family="Liberation Sans" font-size="4.2"><rect x="0" y="1.0000000000000226" width="107" height="5.3" fill="#181c1e"/><rect x="1.5" y="1.8000000000000227" width="3.5" height="3.5" fill="none" stroke="#888" stroke-width=".5"/><text x="6.5" y="5.300000000000023" fill="#e8e8e8" font-weight="bold">General</text><rect x="0" y="6.330000000000064" width="107" height="5.3" fill="#22272a" stroke="#1a1e20" stroke-width=".4"/><text x="5.2" y="10.630000000000063" fill="#c6cbce">Name</text><text x="54" y="10.630000000000063" fill="#c6cbce">02_Cleaned</text><rect x="0" y="11.659999999999991" width="107" height="5.3" fill="#181c1e"/><rect x="1.5" y="12.45999999999999" width="3.5" height="3.5" fill="none" stroke="#888" stroke-width=".5"/><text x="6.5" y="15.95999999999999" fill="#e8e8e8" font-weight="bold">Database</text><rect x="0" y="16.99000000000003" width="107" height="5.3" fill="#22272a" stroke="#1a1e20" stroke-width=".4"/><text x="5.2" y="21.29000000000003" fill="#62686c">Path</text><text x="54" y="21.29000000000003" fill="#62686c">C:\Data\EIVA\Demos\Eventing\</text><rect x="0" y="22.32000000000007" width="107" height="5.3" fill="#22272a" stroke="#1a1e20" stroke-width=".4"/><text x="5.2" y="26.620000000000072" fill="#62686c">Number of points</text><text x="54" y="26.620000000000072" fill="#62686c">6 704 147</text><rect x="0" y="27.65" width="107" height="5.3" fill="#22272a" stroke="#1a1e20" stroke-width=".4"/><text x="5.2" y="31.95" fill="#62686c">Cell size</text><text x="54" y="31.95" fill="#62686c">0.10 m</text><rect x="0" y="32.98000000000004" width="107" height="5.3" fill="#22272a" stroke="#1a1e20" stroke-width=".4"/><text x="5.2" y="37.280000000000044" fill="#c6cbce">External Saving/Loading</text><path d="M56 34.18000000000004 l2.6 2.6 M58.6 34.18000000000004 l-2.6 2.6" stroke="#e8e8e8" stroke-width=".8"/><text x="62" y="37.280000000000044" fill="#c6cbce">False</text><rect x="0" y="38.31000000000008" width="107" height="5.3" fill="#181c1e"/><rect x="1.5" y="39.110000000000085" width="3.5" height="3.5" fill="none" stroke="#888" stroke-width=".5"/><text x="6.5" y="42.610000000000085" fill="#e8e8e8" font-weight="bold">Appearance</text><rect x="0" y="43.64000000000001" width="107" height="5.3" fill="#22272a" stroke="#1a1e20" stroke-width=".4"/><text x="5.2" y="47.94000000000001" fill="#c6cbce">Surface Type</text><text x="54" y="47.94000000000001" fill="#c6cbce">Minimum</text><rect x="0" y="48.97000000000005" width="107" height="5.3" fill="#22272a" stroke="#1a1e20" stroke-width=".4"/><rect x="5" y="48.97000000000005" width="49" height="5.3" fill="#1d6a99"/><rect x="102" y="49.57000000000005" width="5" height="4" fill="#444"/><text x="5.2" y="53.27000000000005" fill="#c6cbce">Color Mode</text><text x="54" y="53.27000000000005" fill="#c6cbce">Depth</text><rect x="0" y="54.299999999999976" width="107" height="5.3" fill="#22272a" stroke="#1a1e20" stroke-width=".4"/><text x="5.2" y="58.59999999999998" fill="#c6cbce">Opacity</text><text x="54" y="58.59999999999998" fill="#c6cbce">100 %</text><rect x="0" y="59.63000000000002" width="107" height="5.3" fill="#181c1e"/><rect x="1.5" y="60.43000000000002" width="3.5" height="3.5" fill="none" stroke="#888" stroke-width=".5"/><text x="6.5" y="63.93000000000002" fill="#e8e8e8" font-weight="bold">Contours</text><rect x="0" y="64.96000000000006" width="107" height="5.3" fill="#22272a" stroke="#1a1e20" stroke-width=".4"/><text x="5.2" y="69.26000000000006" fill="#c6cbce">Majors</text><path d="M56 66.16000000000005 l2.6 2.6 M58.6 66.16000000000005 l-2.6 2.6" stroke="#e8e8e8" stroke-width=".8"/><text x="62" y="69.26000000000006" fill="#c6cbce">False</text><rect x="0" y="70.28999999999999" width="107" height="5.3" fill="#22272a" stroke="#1a1e20" stroke-width=".4"/><text x="5.2" y="74.58999999999999" fill="#c6cbce">Minors</text><path d="M56 71.48999999999998 l2.6 2.6 M58.6 71.48999999999998 l-2.6 2.6" stroke="#e8e8e8" stroke-width=".8"/><text x="62" y="74.58999999999999" fill="#c6cbce">False</text><rect x="0" y="75.62000000000003" width="107" height="5.3" fill="#181c1e"/><rect x="1.5" y="76.42000000000003" width="3.5" height="3.5" fill="none" stroke="#888" stroke-width=".5"/><text x="6.5" y="79.92000000000003" fill="#e8e8e8" font-weight="bold">Profile View</text><rect x="0" y="80.95000000000007" width="107" height="5.3" fill="#22272a" stroke="#1a1e20" stroke-width=".4"/><text x="5.2" y="85.25000000000007" fill="#c6cbce">Surface Colour</text><rect x="54" y="81.65000000000006" width="6.5" height="3.8" fill="#00afd8"/><text x="63" y="85.25000000000007" fill="#c6cbce">0, 175, 216</text><rect x="0" y="86.28" width="107" height="5.3" fill="#22272a" stroke="#1a1e20" stroke-width=".4"/><text x="5.2" y="90.58" fill="#c6cbce">Pen Width</text><text x="54" y="90.58" fill="#c6cbce">1 pixels</text><rect x="0" y="91.61000000000004" width="107" height="5.3" fill="#22272a" stroke="#1a1e20" stroke-width=".4"/><text x="5.2" y="95.91000000000004" fill="#c6cbce">Draw Mode</text><text x="54" y="95.91000000000004" fill="#c6cbce">Line</text><rect x="0" y="96.93999999999997" width="107" height="5.3" fill="#22272a" stroke="#1a1e20" stroke-width=".4"/><text x="5.2" y="101.23999999999997" fill="#c6cbce">Points Colour</text><rect x="54" y="97.63999999999996" width="6.5" height="3.8" fill="#00afd8"/><text x="63" y="101.23999999999997" fill="#c6cbce">0, 175, 216</text></svg>
<div class="a" style="left:2px;top:324.5px;font-size:4.5px;color:#c0c5c8;line-height:5.5px;white-space:nowrap">Color Mode<br><span style="color:#8a9094">The color of the terrain represents the parameter selected here</span></div>
<div class="a" style="left:107.0px;top:27px;width:1.5px;height:327px;background:#15181a"></div>
</div>
<div class="a" style="left:383px;top:451px;width:2px;height:349px;background:#1f2427"></div>
<div class="a" style="left:384.5px;top:446px;width:522.5px;height:354px;overflow:hidden">
<div class="a" style="left:0.0px;top:351px;width:523px;height:3px;background:#17191b"></div>
<svg class="a" style="left:108.5px;top:27px;filter:blur(.5px)" width="414" height="324" viewBox="493 473 414 324"><rect x="493" y="473" width="414" height="324" fill="#3a5f96"/><g shape-rendering="crispEdges"><polygon points="476.8,468.2 485.4,464.5 480.2,460.8 471.6,464.5" fill="#2e4a77"/><polygon points="490.7,468.2 499.3,464.5 493.9,460.8 485.4,464.5" fill="#304e7b"/><polygon points="504.7,468.2 513.1,464.5 507.7,460.8 499.3,464.5" fill="#335381"/><polygon points="518.6,468.2 527.0,464.5 521.4,460.8 513.1,464.5" fill="#31507d"/><polygon points="532.6,468.2 540.8,464.5 535.2,460.8 527.0,464.5" fill="#335280"/><polygon points="546.5,468.2 554.6,464.5 548.9,460.8 540.8,464.5" fill="#32517e"/><polygon points="560.5,468.2 568.5,464.5 562.6,460.8 554.6,464.5" fill="#32507e"/><polygon points="574.4,468.2 582.3,464.5 576.4,460.8 568.5,464.5" fill="#314f7c"/><polygon points="588.4,468.2 596.2,464.5 590.1,460.8 582.3,464.5" fill="#2d4976"/><polygon points="602.3,468.2 610.0,464.5 603.8,460.8 596.2,464.5" fill="#335381"/><polygon points="616.3,468.2 623.9,464.5 617.6,460.8 610.0,464.5" fill="#365785"/><polygon points="630.2,468.2 637.7,464.5 631.3,460.8 623.9,464.5" fill="#2f4b78"/><polygon points="644.2,468.2 651.5,464.5 645.1,460.8 637.7,464.5" fill="#304e7b"/><polygon points="658.1,468.2 665.4,464.5 658.8,460.8 651.5,464.5" fill="#345482"/><polygon points="672.1,468.2 679.2,464.5 672.5,460.8 665.4,464.5" fill="#32517f"/><polygon points="686.0,468.2 693.1,464.5 686.3,460.8 679.2,464.5" fill="#304d7a"/><polygon points="700.0,468.2 706.9,464.5 700.0,460.8 693.1,464.5" fill="#345583"/><polygon points="714.0,468.2 720.8,464.5 713.7,460.8 706.9,464.5" fill="#335381"/><polygon points="727.9,468.2 734.6,464.5 727.5,460.8 720.8,464.5" fill="#304e7b"/><polygon points="741.9,468.2 748.5,464.5 741.2,460.8 734.6,464.5" fill="#33527f"/><polygon points="755.8,468.2 762.3,464.5 754.9,460.8 748.5,464.5" fill="#304d7a"/><polygon points="769.8,468.2 776.1,464.5 768.7,460.8 762.3,464.5" fill="#32517f"/><polygon points="783.7,468.2 790.0,464.5 782.4,460.8 776.1,464.5" fill="#355583"/><polygon points="797.7,468.2 803.8,464.5 796.2,460.8 790.0,464.5" fill="#2f4b78"/><polygon points="811.6,468.2 817.7,464.5 809.9,460.8 803.8,464.5" fill="#335280"/><polygon points="825.6,468.2 831.5,464.5 823.6,460.8 817.7,464.5" fill="#314f7c"/><polygon points="839.5,468.2 845.4,464.5 837.4,460.8 831.5,464.5" fill="#32517e"/><polygon points="853.5,468.2 859.2,464.5 851.1,460.8 845.4,464.5" fill="#33517f"/><polygon points="867.4,468.2 873.0,464.5 864.8,460.8 859.2,464.5" fill="#32507e"/><polygon points="881.4,468.2 886.9,464.5 878.6,460.8 873.0,464.5" fill="#32507e"/><polygon points="895.3,468.2 900.7,464.5 892.3,460.8 886.9,464.5" fill="#32517f"/><polygon points="909.3,468.2 914.6,464.5 906.1,460.8 900.7,464.5" fill="#355583"/><polygon points="923.2,468.2 928.4,464.5 919.8,460.8 914.6,464.5" fill="#314f7c"/><polygon points="482.1,471.9 490.7,468.2 485.4,464.5 476.8,468.2" fill="#32507e"/><polygon points="496.1,471.9 504.7,468.2 499.3,464.5 490.7,468.2" fill="#335280"/><polygon points="510.2,471.9 518.6,468.2 513.1,464.5 504.7,468.2" fill="#2f4b78"/><polygon points="524.3,471.9 532.6,468.2 527.0,464.5 518.6,468.2" fill="#365786"/><polygon points="538.3,471.9 546.5,468.2 540.8,464.5 532.6,468.2" fill="#31507d"/><polygon points="552.4,471.9 560.5,468.2 554.6,464.5 546.5,468.2" fill="#2f4b78"/><polygon points="566.4,471.9 574.4,468.2 568.5,464.5 560.5,468.2" fill="#32507e"/><polygon points="580.5,471.9 588.4,468.2 582.3,464.5 574.4,468.2" fill="#345381"/><polygon points="594.6,471.9 602.3,468.2 596.2,464.5 588.4,468.2" fill="#314e7c"/><polygon points="608.6,471.9 616.3,468.2 610.0,464.5 602.3,468.2" fill="#314f7c"/><polygon points="622.7,471.9 630.2,468.2 623.9,464.5 616.3,468.2" fill="#355584"/><polygon points="636.7,471.9 644.2,468.2 637.7,464.5 630.2,468.2" fill="#32517e"/><polygon points="650.8,471.9 658.1,468.2 651.5,464.5 644.2,468.2" fill="#375987"/><polygon points="664.9,471.9 672.1,468.2 665.4,464.5 658.1,468.2" fill="#345482"/><polygon points="678.9,471.9 686.0,468.2 679.2,464.5 672.1,468.2" fill="#345583"/><polygon points="693.0,471.9 700.0,468.2 693.1,464.5 686.0,468.2" fill="#355583"/><polygon points="707.0,471.9 714.0,468.2 706.9,464.5 700.0,468.2" fill="#335280"/><polygon points="721.1,471.9 727.9,468.2 720.8,464.5 714.0,468.2" fill="#33527f"/><polygon points="735.1,471.9 741.9,468.2 734.6,464.5 727.9,468.2" fill="#32507e"/><polygon points="749.2,471.9 755.8,468.2 748.5,464.5 741.9,468.2" fill="#314f7d"/><polygon points="763.3,471.9 769.8,468.2 762.3,464.5 755.8,468.2" fill="#335280"/><polygon points="777.3,471.9 783.7,468.2 776.1,464.5 769.8,468.2" fill="#2e4a77"/><polygon points="791.4,471.9 797.7,468.2 790.0,464.5 783.7,468.2" fill="#314f7c"/><polygon points="805.4,471.9 811.6,468.2 803.8,464.5 797.7,468.2" fill="#345482"/><polygon points="819.5,471.9 825.6,468.2 817.7,464.5 811.6,468.2" fill="#335381"/><polygon points="833.6,471.9 839.5,468.2 831.5,464.5 825.6,468.2" fill="#314f7d"/><polygon points="847.6,471.9 853.5,468.2 845.4,464.5 839.5,468.2" fill="#345482"/><polygon points="861.7,471.9 867.4,468.2 859.2,464.5 853.5,468.2" fill="#32517f"/><polygon points="875.7,471.9 881.4,468.2 873.0,464.5 867.4,468.2" fill="#345381"/><polygon points="889.8,471.9 895.3,468.2 886.9,464.5 881.4,468.2" fill="#345482"/><polygon points="903.9,471.9 909.3,468.2 900.7,464.5 895.3,468.2" fill="#335280"/><polygon points="917.9,471.9 923.2,468.2 914.6,464.5 909.3,468.2" fill="#375887"/><polygon points="473.3,475.8 482.1,471.9 476.8,468.2 468.0,471.9" fill="#335280"/><polygon points="487.5,475.8 496.1,471.9 490.7,468.2 482.1,471.9" fill="#32507e"/><polygon points="501.6,475.8 510.2,471.9 504.7,468.2 496.1,471.9" fill="#314f7c"/><polygon points="515.8,475.8 524.3,471.9 518.6,468.2 510.2,471.9" fill="#314f7d"/><polygon points="530.0,475.8 538.3,471.9 532.6,468.2 524.3,471.9" fill="#335280"/><polygon points="544.1,475.8 552.4,471.9 546.5,468.2 538.3,471.9" fill="#32517f"/><polygon points="558.3,475.8 566.4,471.9 560.5,468.2 552.4,471.9" fill="#304d7b"/><polygon points="572.5,475.8 580.5,471.9 574.4,468.2 566.4,471.9" fill="#345482"/><polygon points="586.6,475.8 594.6,471.9 588.4,468.2 580.5,471.9" fill="#314e7c"/><polygon points="600.8,475.8 608.6,471.9 602.3,468.2 594.6,471.9" fill="#335381"/><polygon points="615.0,475.8 622.7,471.9 616.3,468.2 608.6,471.9" fill="#335381"/><polygon points="629.2,475.8 636.7,471.9 630.2,468.2 622.7,471.9" fill="#314f7d"/><polygon points="643.3,475.8 650.8,471.9 644.2,468.2 636.7,471.9" fill="#32517f"/><polygon points="657.5,475.8 664.9,471.9 658.1,468.2 650.8,471.9" fill="#335280"/><polygon points="671.7,475.8 678.9,471.9 672.1,468.2 664.9,471.9" fill="#314f7c"/><polygon points="685.8,475.8 693.0,471.9 686.0,468.2 678.9,471.9" fill="#304d7b"/><polygon points="700.0,475.8 707.0,471.9 700.0,468.2 693.0,471.9" fill="#314f7c"/><polygon points="714.2,475.8 721.1,471.9 714.0,468.2 707.0,471.9" fill="#335280"/><polygon points="728.3,475.8 735.1,471.9 727.9,468.2 721.1,471.9" fill="#32507e"/><polygon points="742.5,475.8 749.2,471.9 741.9,468.2 735.1,471.9" fill="#32517f"/><polygon points="756.7,475.8 763.3,471.9 755.8,468.2 749.2,471.9" fill="#345482"/><polygon points="770.8,475.8 777.3,471.9 769.8,468.2 763.3,471.9" fill="#2f4c79"/><polygon points="785.0,475.8 791.4,471.9 783.7,468.2 777.3,471.9" fill="#345583"/><polygon points="799.2,475.8 805.4,471.9 797.7,468.2 791.4,471.9" fill="#365786"/><polygon points="813.4,475.8 819.5,471.9 811.6,468.2 805.4,471.9" fill="#345482"/><polygon points="827.5,475.8 833.6,471.9 825.6,468.2 819.5,471.9" fill="#32517f"/><polygon points="841.7,475.8 847.6,471.9 839.5,468.2 833.6,471.9" fill="#314e7c"/><polygon points="855.9,475.8 861.7,471.9 853.5,468.2 847.6,471.9" fill="#32507e"/><polygon points="870.0,475.8 875.7,471.9 867.4,468.2 861.7,471.9" fill="#355584"/><polygon points="884.2,475.8 889.8,471.9 881.4,468.2 875.7,471.9" fill="#304e7b"/><polygon points="898.4,475.8 903.9,471.9 895.3,468.2 889.8,471.9" fill="#345381"/><polygon points="912.5,475.8 917.9,471.9 909.3,468.2 903.9,471.9" fill="#2f4c79"/><polygon points="926.7,475.8 932.0,471.9 923.2,468.2 917.9,471.9" fill="#304e7c"/><polygon points="478.6,479.6 487.5,475.8 482.1,471.9 473.3,475.8" fill="#345483"/><polygon points="492.9,479.6 501.6,475.8 496.1,471.9 487.5,475.8" fill="#32517f"/><polygon points="507.2,479.6 515.8,475.8 510.2,471.9 501.6,475.8" fill="#314e7c"/><polygon points="521.5,479.6 530.0,475.8 524.3,471.9 515.8,475.8" fill="#345483"/><polygon points="535.8,479.6 544.1,475.8 538.3,471.9 530.0,475.8" fill="#32507e"/><polygon points="550.0,479.6 558.3,475.8 552.4,471.9 544.1,475.8" fill="#314f7d"/><polygon points="564.3,479.6 572.5,475.8 566.4,471.9 558.3,475.8" fill="#345482"/><polygon points="578.6,479.6 586.6,475.8 580.5,471.9 572.5,475.8" fill="#345483"/><polygon points="592.9,479.6 600.8,475.8 594.6,471.9 586.6,475.8" fill="#314f7d"/><polygon points="607.2,479.6 615.0,475.8 608.6,471.9 600.8,475.8" fill="#335280"/><polygon points="621.4,479.6 629.2,475.8 622.7,471.9 615.0,475.8" fill="#304d7b"/><polygon points="635.7,479.6 643.3,475.8 636.7,471.9 629.2,475.8" fill="#304d7b"/><polygon points="650.0,479.6 657.5,475.8 650.8,471.9 643.3,475.8" fill="#32507e"/><polygon points="664.3,479.6 671.7,475.8 664.9,471.9 657.5,475.8" fill="#2e4a78"/><polygon points="678.6,479.6 685.8,475.8 678.9,471.9 671.7,475.8" fill="#314f7d"/><polygon points="692.9,479.6 700.0,475.8 693.0,471.9 685.8,475.8" fill="#365785"/><polygon points="707.1,479.6 714.2,475.8 707.0,471.9 700.0,475.8" fill="#345482"/><polygon points="721.4,479.6 728.3,475.8 721.1,471.9 714.2,475.8" fill="#345482"/><polygon points="735.7,479.6 742.5,475.8 735.1,471.9 728.3,475.8" fill="#32507e"/><polygon points="750.0,479.6 756.7,475.8 749.2,471.9 742.5,475.8" fill="#32517f"/><polygon points="764.3,479.6 770.8,475.8 763.3,471.9 756.7,475.8" fill="#304e7c"/><polygon points="778.6,479.6 785.0,475.8 777.3,471.9 770.8,475.8" fill="#335280"/><polygon points="792.8,479.6 799.2,475.8 791.4,471.9 785.0,475.8" fill="#335381"/><polygon points="807.1,479.6 813.4,475.8 805.4,471.9 799.2,475.8" fill="#32507e"/><polygon points="821.4,479.6 827.5,475.8 819.5,471.9 813.4,475.8" fill="#335280"/><polygon points="835.7,479.6 841.7,475.8 833.6,471.9 827.5,475.8" fill="#314f7d"/><polygon points="850.0,479.6 855.9,475.8 847.6,471.9 841.7,475.8" fill="#335381"/><polygon points="864.2,479.6 870.0,475.8 861.7,471.9 855.9,475.8" fill="#335381"/><polygon points="878.5,479.6 884.2,475.8 875.7,471.9 870.0,475.8" fill="#31507e"/><polygon points="892.8,479.6 898.4,475.8 889.8,471.9 884.2,475.8" fill="#335280"/><polygon points="907.1,479.6 912.5,475.8 903.9,471.9 898.4,475.8" fill="#355685"/><polygon points="921.4,479.6 926.7,475.8 917.9,471.9 912.5,475.8" fill="#31507d"/><polygon points="484.1,483.6 492.9,479.6 487.5,475.8 478.6,479.6" fill="#365786"/><polygon points="498.4,483.6 507.2,479.6 501.6,475.8 492.9,479.6" fill="#365887"/><polygon points="512.8,483.6 521.5,479.6 515.8,475.8 507.2,479.6" fill="#304d7b"/><polygon points="527.2,483.6 535.8,479.6 530.0,475.8 521.5,479.6" fill="#335280"/><polygon points="541.6,483.6 550.0,479.6 544.1,475.8 535.8,479.6" fill="#31507e"/><polygon points="556.0,483.6 564.3,479.6 558.3,475.8 550.0,479.6" fill="#355685"/><polygon points="570.4,483.6 578.6,479.6 572.5,475.8 564.3,479.6" fill="#335280"/><polygon points="584.8,483.6 592.9,479.6 586.6,475.8 578.6,479.6" fill="#304e7b"/><polygon points="599.2,483.6 607.2,479.6 600.8,475.8 592.9,479.6" fill="#32517f"/><polygon points="613.6,483.6 621.4,479.6 615.0,475.8 607.2,479.6" fill="#345483"/><polygon points="628.0,483.6 635.7,479.6 629.2,475.8 621.4,479.6" fill="#32517f"/><polygon points="642.4,483.6 650.0,479.6 643.3,475.8 635.7,479.6" fill="#335280"/><polygon points="656.8,483.6 664.3,479.6 657.5,475.8 650.0,479.6" fill="#355584"/><polygon points="671.2,483.6 678.6,479.6 671.7,475.8 664.3,479.6" fill="#335381"/><polygon points="685.6,483.6 692.9,479.6 685.8,475.8 678.6,479.6" fill="#345382"/><polygon points="700.0,483.6 707.1,479.6 700.0,475.8 692.9,479.6" fill="#385a89"/><polygon points="714.4,483.6 721.4,479.6 714.2,475.8 707.1,479.6" fill="#3a5d8d"/><polygon points="728.8,483.6 735.7,479.6 728.3,475.8 721.4,479.6" fill="#32507f"/><polygon points="743.2,483.6 750.0,479.6 742.5,475.8 735.7,479.6" fill="#365785"/><polygon points="757.6,483.6 764.3,479.6 756.7,475.8 750.0,479.6" fill="#325280"/><polygon points="772.0,483.6 778.6,479.6 770.8,475.8 764.3,479.6" fill="#314f7d"/><polygon points="786.4,483.6 792.8,479.6 785.0,475.8 778.6,479.6" fill="#32507e"/><polygon points="800.8,483.6 807.1,479.6 799.2,475.8 792.8,479.6" fill="#314e7c"/><polygon points="815.2,483.6 821.4,479.6 813.4,475.8 807.1,479.6" fill="#345482"/><polygon points="829.6,483.6 835.7,479.6 827.5,475.8 821.4,479.6" fill="#32517f"/><polygon points="844.0,483.6 850.0,479.6 841.7,475.8 835.7,479.6" fill="#335381"/><polygon points="858.4,483.6 864.2,479.6 855.9,475.8 850.0,479.6" fill="#32517f"/><polygon points="872.8,483.6 878.5,479.6 870.0,475.8 864.2,479.6" fill="#32517f"/><polygon points="887.2,483.6 892.8,479.6 884.2,475.8 878.5,479.6" fill="#314f7d"/><polygon points="901.6,483.6 907.1,479.6 898.4,475.8 892.8,479.6" fill="#2e4a78"/><polygon points="915.9,483.6 921.4,479.6 912.5,475.8 907.1,479.6" fill="#2f4b79"/><polygon points="475.1,487.6 484.1,483.6 478.6,479.6 469.7,483.6" fill="#335281"/><polygon points="489.6,487.6 498.4,483.6 492.9,479.6 484.1,483.6" fill="#314f7d"/><polygon points="504.1,487.6 512.8,483.6 507.2,479.6 498.4,483.6" fill="#335280"/><polygon points="518.6,487.6 527.2,483.6 521.5,479.6 512.8,483.6" fill="#335381"/><polygon points="533.1,487.6 541.6,483.6 535.8,479.6 527.2,483.6" fill="#32517f"/><polygon points="547.6,487.6 556.0,483.6 550.0,479.6 541.6,483.6" fill="#335281"/><polygon points="562.1,487.6 570.4,483.6 564.3,479.6 556.0,483.6" fill="#345382"/><polygon points="576.6,487.6 584.8,483.6 578.6,479.6 570.4,483.6" fill="#31507e"/><polygon points="591.2,487.6 599.2,483.6 592.9,479.6 584.8,483.6" fill="#2e4977"/><polygon points="605.7,487.6 613.6,483.6 607.2,479.6 599.2,483.6" fill="#335280"/><polygon points="620.2,487.6 628.0,483.6 621.4,479.6 613.6,483.6" fill="#345584"/><polygon points="634.7,487.6 642.4,483.6 635.7,479.6 628.0,483.6" fill="#32517f"/><polygon points="649.2,487.6 656.8,483.6 650.0,479.6 642.4,483.6" fill="#325180"/><polygon points="663.7,487.6 671.2,483.6 664.3,479.6 656.8,483.6" fill="#355685"/><polygon points="678.2,487.6 685.6,483.6 678.6,479.6 671.2,483.6" fill="#345482"/><polygon points="692.7,487.6 700.0,483.6 692.9,479.6 685.6,483.6" fill="#345482"/><polygon points="707.3,487.6 714.4,483.6 707.1,479.6 700.0,483.6" fill="#314f7d"/><polygon points="721.8,487.6 728.8,483.6 721.4,479.6 714.4,483.6" fill="#32507f"/><polygon points="736.3,487.6 743.2,483.6 735.7,479.6 728.8,483.6" fill="#335280"/><polygon points="750.8,487.6 757.6,483.6 750.0,479.6 743.2,483.6" fill="#335281"/><polygon points="765.3,487.6 772.0,483.6 764.3,479.6 757.6,483.6" fill="#314f7e"/><polygon points="779.8,487.6 786.4,483.6 778.6,479.6 772.0,483.6" fill="#375989"/><polygon points="794.3,487.6 800.8,483.6 792.8,479.6 786.4,483.6" fill="#325280"/><polygon points="808.8,487.6 815.2,483.6 807.1,479.6 800.8,483.6" fill="#314f7d"/><polygon points="823.4,487.6 829.6,483.6 821.4,479.6 815.2,483.6" fill="#335281"/><polygon points="837.9,487.6 844.0,483.6 835.7,479.6 829.6,483.6" fill="#335281"/><polygon points="852.4,487.6 858.4,483.6 850.0,479.6 844.0,483.6" fill="#31507e"/><polygon points="866.9,487.6 872.8,483.6 864.2,479.6 858.4,483.6" fill="#335382"/><polygon points="881.4,487.6 887.2,483.6 878.5,479.6 872.8,483.6" fill="#32517f"/><polygon points="895.9,487.6 901.6,483.6 892.8,479.6 887.2,483.6" fill="#304d7b"/><polygon points="910.4,487.6 915.9,483.6 907.1,479.6 901.6,483.6" fill="#314f7d"/><polygon points="924.9,487.6 930.3,483.6 921.4,479.6 915.9,483.6" fill="#335281"/><polygon points="480.5,491.7 489.6,487.6 484.1,483.6 475.1,487.6" fill="#304d7b"/><polygon points="495.2,491.7 504.1,487.6 498.4,483.6 489.6,487.6" fill="#355584"/><polygon points="509.8,491.7 518.6,487.6 512.8,483.6 504.1,487.6" fill="#335381"/><polygon points="524.4,491.7 533.1,487.6 527.2,483.6 518.6,487.6" fill="#335382"/><polygon points="539.1,491.7 547.6,487.6 541.6,483.6 533.1,487.6" fill="#335280"/><polygon points="553.7,491.7 562.1,487.6 556.0,483.6 547.6,487.6" fill="#335382"/><polygon points="568.3,491.7 576.6,487.6 570.4,483.6 562.1,487.6" fill="#31507e"/><polygon points="583.0,491.7 591.2,487.6 584.8,483.6 576.6,487.6" fill="#2f4b79"/><polygon points="597.6,491.7 605.7,487.6 599.2,483.6 591.2,487.6" fill="#345483"/><polygon points="612.2,491.7 620.2,487.6 613.6,483.6 605.7,487.6" fill="#325280"/><polygon points="626.8,491.7 634.7,487.6 628.0,483.6 620.2,487.6" fill="#32507f"/><polygon points="641.5,491.7 649.2,487.6 642.4,483.6 634.7,487.6" fill="#314f7d"/><polygon points="656.1,491.7 663.7,487.6 656.8,483.6 649.2,487.6" fill="#365786"/><polygon points="670.7,491.7 678.2,487.6 671.2,483.6 663.7,487.6" fill="#345483"/><polygon points="685.4,491.7 692.7,487.6 685.6,483.6 678.2,487.6" fill="#314e7d"/><polygon points="700.0,491.7 707.3,487.6 700.0,483.6 692.7,487.6" fill="#335281"/><polygon points="714.6,491.7 721.8,487.6 714.4,483.6 707.3,487.6" fill="#304d7b"/><polygon points="729.3,491.7 736.3,487.6 728.8,483.6 721.8,487.6" fill="#365887"/><polygon points="743.9,491.7 750.8,487.6 743.2,483.6 736.3,487.6" fill="#355584"/><polygon points="758.5,491.7 765.3,487.6 757.6,483.6 750.8,487.6" fill="#31507e"/><polygon points="773.2,491.7 779.8,487.6 772.0,483.6 765.3,487.6" fill="#355685"/><polygon points="787.8,491.7 794.3,487.6 786.4,483.6 779.8,487.6" fill="#345483"/><polygon points="802.4,491.7 808.8,487.6 800.8,483.6 794.3,487.6" fill="#365786"/><polygon points="817.0,491.7 823.4,487.6 815.2,483.6 808.8,487.6" fill="#304d7b"/><polygon points="831.7,491.7 837.9,487.6 829.6,483.6 823.4,487.6" fill="#314f7d"/><polygon points="846.3,491.7 852.4,487.6 844.0,483.6 837.9,487.6" fill="#335281"/><polygon points="860.9,491.7 866.9,487.6 858.4,483.6 852.4,487.6" fill="#32507e"/><polygon points="875.6,491.7 881.4,487.6 872.8,483.6 866.9,487.6" fill="#345584"/><polygon points="890.2,491.7 895.9,487.6 887.2,483.6 881.4,487.6" fill="#335281"/><polygon points="904.8,491.7 910.4,487.6 901.6,483.6 895.9,487.6" fill="#365887"/><polygon points="919.5,491.7 924.9,487.6 915.9,483.6 910.4,487.6" fill="#375989"/><polygon points="471.4,495.8 480.5,491.7 475.1,487.6 465.9,491.7" fill="#32507f"/><polygon points="486.1,495.8 495.2,491.7 489.6,487.6 480.5,491.7" fill="#365887"/><polygon points="500.9,495.8 509.8,491.7 504.1,487.6 495.2,491.7" fill="#355584"/><polygon points="515.6,495.8 524.4,491.7 518.6,487.6 509.8,491.7" fill="#355685"/><polygon points="530.4,495.8 539.1,491.7 533.1,487.6 524.4,491.7" fill="#335280"/><polygon points="545.1,495.8 553.7,491.7 547.6,487.6 539.1,491.7" fill="#355585"/><polygon points="559.9,495.8 568.3,491.7 562.1,487.6 553.7,491.7" fill="#335280"/><polygon points="574.6,495.8 583.0,491.7 576.6,487.6 568.3,491.7" fill="#304e7c"/><polygon points="589.4,495.8 597.6,491.7 591.2,487.6 583.0,491.7" fill="#32507f"/><polygon points="604.1,495.8 612.2,491.7 605.7,487.6 597.6,491.7" fill="#335382"/><polygon points="618.9,495.8 626.8,491.7 620.2,487.6 612.2,491.7" fill="#355584"/><polygon points="633.6,495.8 641.5,491.7 634.7,487.6 626.8,491.7" fill="#314f7e"/><polygon points="648.4,495.8 656.1,491.7 649.2,487.6 641.5,491.7" fill="#335382"/><polygon points="663.1,495.8 670.7,491.7 663.7,487.6 656.1,491.7" fill="#335382"/><polygon points="677.9,495.8 685.4,491.7 678.2,487.6 670.7,491.7" fill="#314f7d"/><polygon points="692.6,495.8 700.0,491.7 692.7,487.6 685.4,491.7" fill="#345484"/><polygon points="707.4,495.8 714.6,491.7 707.3,487.6 700.0,491.7" fill="#345483"/><polygon points="722.1,495.8 729.3,491.7 721.8,487.6 714.6,491.7" fill="#325180"/><polygon points="736.9,495.8 743.9,491.7 736.3,487.6 729.3,491.7" fill="#32507f"/><polygon points="751.6,495.8 758.5,491.7 750.8,487.6 743.9,491.7" fill="#345483"/><polygon points="766.4,495.8 773.2,491.7 765.3,487.6 758.5,491.7" fill="#345483"/><polygon points="781.1,495.8 787.8,491.7 779.8,487.6 773.2,491.7" fill="#325180"/><polygon points="795.9,495.8 802.4,491.7 794.3,487.6 787.8,491.7" fill="#31507e"/><polygon points="810.6,495.8 817.0,491.7 808.8,487.6 802.4,491.7" fill="#325180"/><polygon points="825.4,495.8 831.7,491.7 823.4,487.6 817.0,491.7" fill="#345584"/><polygon points="840.1,495.8 846.3,491.7 837.9,487.6 831.7,491.7" fill="#385a8a"/><polygon points="854.9,495.8 860.9,491.7 852.4,487.6 846.3,491.7" fill="#32507f"/><polygon points="869.6,495.8 875.6,491.7 866.9,487.6 860.9,491.7" fill="#345483"/><polygon points="884.4,495.8 890.2,491.7 881.4,487.6 875.6,491.7" fill="#345382"/><polygon points="899.1,495.8 904.8,491.7 895.9,487.6 890.2,491.7" fill="#335382"/><polygon points="913.9,495.8 919.5,491.7 910.4,487.6 904.8,491.7" fill="#355584"/><polygon points="928.6,495.8 934.1,491.7 924.9,487.6 919.5,491.7" fill="#2f4d7b"/><polygon points="476.9,500.0 486.1,495.8 480.5,491.7 471.4,495.8" fill="#314f7e"/><polygon points="491.8,500.0 500.9,495.8 495.2,491.7 486.1,495.8" fill="#345484"/><polygon points="506.7,500.0 515.6,495.8 509.8,491.7 500.9,495.8" fill="#345483"/><polygon points="521.5,500.0 530.4,495.8 524.4,491.7 515.6,495.8" fill="#335281"/><polygon points="536.4,500.0 545.1,495.8 539.1,491.7 530.4,495.8" fill="#345483"/><polygon points="551.3,500.0 559.9,495.8 553.7,491.7 545.1,495.8" fill="#314f7e"/><polygon points="566.1,500.0 574.6,495.8 568.3,491.7 559.9,495.8" fill="#345484"/><polygon points="581.0,500.0 589.4,495.8 583.0,491.7 574.6,495.8" fill="#2e4a78"/><polygon points="595.9,500.0 604.1,495.8 597.6,491.7 589.4,495.8" fill="#365787"/><polygon points="610.8,500.0 618.9,495.8 612.2,491.7 604.1,495.8" fill="#385a8a"/><polygon points="625.6,500.0 633.6,495.8 626.8,491.7 618.9,495.8" fill="#345584"/><polygon points="640.5,500.0 648.4,495.8 641.5,491.7 633.6,495.8" fill="#385a8a"/><polygon points="655.4,500.0 663.1,495.8 656.1,491.7 648.4,495.8" fill="#345584"/><polygon points="670.3,500.0 677.9,495.8 670.7,491.7 663.1,495.8" fill="#355685"/><polygon points="685.1,500.0 692.6,495.8 685.4,491.7 677.9,495.8" fill="#335382"/><polygon points="700.0,500.0 707.4,495.8 700.0,491.7 692.6,495.8" fill="#355686"/><polygon points="714.9,500.0 722.1,495.8 714.6,491.7 707.4,495.8" fill="#314f7d"/><polygon points="729.7,500.0 736.9,495.8 729.3,491.7 722.1,495.8" fill="#335281"/><polygon points="744.6,500.0 751.6,495.8 743.9,491.7 736.9,495.8" fill="#395c8c"/><polygon points="759.5,500.0 766.4,495.8 758.5,491.7 751.6,495.8" fill="#335382"/><polygon points="774.4,500.0 781.1,495.8 773.2,491.7 766.4,495.8" fill="#335382"/><polygon points="789.2,500.0 795.9,495.8 787.8,491.7 781.1,495.8" fill="#314e7d"/><polygon points="804.1,500.0 810.6,495.8 802.4,491.7 795.9,495.8" fill="#345584"/><polygon points="819.0,500.0 825.4,495.8 817.0,491.7 810.6,495.8" fill="#31507f"/><polygon points="833.9,500.0 840.1,495.8 831.7,491.7 825.4,495.8" fill="#2f4c7b"/><polygon points="848.7,500.0 854.9,495.8 846.3,491.7 840.1,495.8" fill="#355585"/><polygon points="863.6,500.0 869.6,495.8 860.9,491.7 854.9,495.8" fill="#345483"/><polygon points="878.5,500.0 884.4,495.8 875.6,491.7 869.6,495.8" fill="#335382"/><polygon points="893.3,500.0 899.1,495.8 890.2,491.7 884.4,495.8" fill="#345484"/><polygon points="908.2,500.0 913.9,495.8 904.8,491.7 899.1,495.8" fill="#335281"/><polygon points="923.1,500.0 928.6,495.8 919.5,491.7 913.9,495.8" fill="#335382"/><polygon points="482.6,504.3 491.8,500.0 486.1,495.8 476.9,500.0" fill="#345484"/><polygon points="497.6,504.3 506.7,500.0 500.9,495.8 491.8,500.0" fill="#355585"/><polygon points="512.5,504.3 521.5,500.0 515.6,495.8 506.7,500.0" fill="#335282"/><polygon points="527.5,504.3 536.4,500.0 530.4,495.8 521.5,500.0" fill="#365888"/><polygon points="542.5,504.3 551.3,500.0 545.1,495.8 536.4,500.0" fill="#32507f"/><polygon points="557.5,504.3 566.1,500.0 559.9,495.8 551.3,500.0" fill="#365787"/><polygon points="572.5,504.3 581.0,500.0 574.6,495.8 566.1,500.0" fill="#385b8b"/><polygon points="587.5,504.3 595.9,500.0 589.4,495.8 581.0,500.0" fill="#375888"/><polygon points="602.5,504.3 610.8,500.0 604.1,495.8 595.9,500.0" fill="#365787"/><polygon points="617.5,504.3 625.6,500.0 618.9,495.8 610.8,500.0" fill="#345584"/><polygon points="632.5,504.3 640.5,500.0 633.6,495.8 625.6,500.0" fill="#345584"/><polygon points="647.5,504.3 655.4,500.0 648.4,495.8 640.5,500.0" fill="#345483"/><polygon points="662.5,504.3 670.3,500.0 663.1,495.8 655.4,500.0" fill="#335281"/><polygon points="677.5,504.3 685.1,500.0 677.9,495.8 670.3,500.0" fill="#355585"/><polygon points="692.5,504.3 700.0,500.0 692.6,495.8 685.1,500.0" fill="#355686"/><polygon points="707.5,504.3 714.9,500.0 707.4,495.8 700.0,500.0" fill="#345484"/><polygon points="722.5,504.3 729.7,500.0 722.1,495.8 714.9,500.0" fill="#365888"/><polygon points="737.5,504.3 744.6,500.0 736.9,495.8 729.7,500.0" fill="#2f4c7a"/><polygon points="752.5,504.3 759.5,500.0 751.6,495.8 744.6,500.0" fill="#355685"/><polygon points="767.5,504.3 774.4,500.0 766.4,495.8 759.5,500.0" fill="#365888"/><polygon points="782.5,504.3 789.2,500.0 781.1,495.8 774.4,500.0" fill="#355686"/><polygon points="797.5,504.3 804.1,500.0 795.9,495.8 789.2,500.0" fill="#345584"/><polygon points="812.5,504.3 819.0,500.0 810.6,495.8 804.1,500.0" fill="#335382"/><polygon points="827.5,504.3 833.9,500.0 825.4,495.8 819.0,500.0" fill="#355686"/><polygon points="842.5,504.3 848.7,500.0 840.1,495.8 833.9,500.0" fill="#355585"/><polygon points="857.5,504.3 863.6,500.0 854.9,495.8 848.7,500.0" fill="#335282"/><polygon points="872.5,504.3 878.5,500.0 869.6,495.8 863.6,500.0" fill="#335281"/><polygon points="887.5,504.3 893.3,500.0 884.4,495.8 878.5,500.0" fill="#325180"/><polygon points="902.4,504.3 908.2,500.0 899.1,495.8 893.3,500.0" fill="#314f7e"/><polygon points="917.4,504.3 923.1,500.0 913.9,495.8 908.2,500.0" fill="#355585"/><polygon points="473.2,508.6 482.6,504.3 476.9,500.0 467.6,504.3" fill="#345383"/><polygon points="488.3,508.6 497.6,504.3 491.8,500.0 482.6,504.3" fill="#325180"/><polygon points="503.4,508.6 512.5,504.3 506.7,500.0 497.6,504.3" fill="#345483"/><polygon points="518.5,508.6 527.5,504.3 521.5,500.0 512.5,504.3" fill="#345584"/><polygon points="533.7,508.6 542.5,504.3 536.4,500.0 527.5,504.3" fill="#355585"/><polygon points="548.8,508.6 557.5,504.3 551.3,500.0 542.5,504.3" fill="#345484"/><polygon points="563.9,508.6 572.5,504.3 566.1,500.0 557.5,504.3" fill="#345484"/><polygon points="579.0,508.6 587.5,504.3 581.0,500.0 572.5,504.3" fill="#375989"/><polygon points="594.1,508.6 602.5,504.3 595.9,500.0 587.5,504.3" fill="#335281"/><polygon points="609.3,508.6 617.5,504.3 610.8,500.0 602.5,504.3" fill="#365787"/><polygon points="624.4,508.6 632.5,504.3 625.6,500.0 617.5,504.3" fill="#345584"/><polygon points="639.5,508.6 647.5,504.3 640.5,500.0 632.5,504.3" fill="#345484"/><polygon points="654.6,508.6 662.5,504.3 655.4,500.0 647.5,504.3" fill="#355685"/><polygon points="669.8,508.6 677.5,504.3 670.3,500.0 662.5,504.3" fill="#345484"/><polygon points="684.9,508.6 692.5,504.3 685.1,500.0 677.5,504.3" fill="#345483"/><polygon points="700.0,508.6 707.5,504.3 700.0,500.0 692.5,504.3" fill="#355686"/><polygon points="715.1,508.6 722.5,504.3 714.9,500.0 707.5,504.3" fill="#335383"/><polygon points="730.2,508.6 737.5,504.3 729.7,500.0 722.5,504.3" fill="#355585"/><polygon points="745.4,508.6 752.5,504.3 744.6,500.0 737.5,504.3" fill="#325180"/><polygon points="760.5,508.6 767.5,504.3 759.5,500.0 752.5,504.3" fill="#325181"/><polygon points="775.6,508.6 782.5,504.3 774.4,500.0 767.5,504.3" fill="#345484"/><polygon points="790.7,508.6 797.5,504.3 789.2,500.0 782.5,504.3" fill="#395c8c"/><polygon points="805.9,508.6 812.5,504.3 804.1,500.0 797.5,504.3" fill="#335382"/><polygon points="821.0,508.6 827.5,504.3 819.0,500.0 812.5,504.3" fill="#385a8b"/><polygon points="836.1,508.6 842.5,504.3 833.9,500.0 827.5,504.3" fill="#345584"/><polygon points="851.2,508.6 857.5,504.3 848.7,500.0 842.5,504.3" fill="#385b8b"/><polygon points="866.3,508.6 872.5,504.3 863.6,500.0 857.5,504.3" fill="#345483"/><polygon points="881.5,508.6 887.5,504.3 878.5,500.0 872.5,504.3" fill="#355786"/><polygon points="896.6,508.6 902.4,504.3 893.3,500.0 887.5,504.3" fill="#335383"/><polygon points="911.7,508.6 917.4,504.3 908.2,500.0 902.4,504.3" fill="#345383"/><polygon points="926.8,508.6 932.4,504.3 923.1,500.0 917.4,504.3" fill="#365787"/><polygon points="631.4,513.0 639.5,508.6 632.5,504.3 624.4,508.6" fill="#355685"/><polygon points="768.6,513.0 775.6,508.6 767.5,504.3 760.5,508.6" fill="#355585"/><polygon points="478.9,513.0 488.3,508.6 482.6,504.3 473.2,508.6" fill="#335383"/><polygon points="494.1,513.0 503.4,508.6 497.6,504.3 488.3,508.6" fill="#355585"/><polygon points="509.4,513.0 518.5,508.6 512.5,504.3 503.4,508.6" fill="#345484"/><polygon points="524.6,513.0 533.7,508.6 527.5,504.3 518.5,508.6" fill="#355686"/><polygon points="539.9,513.0 548.8,508.6 542.5,504.3 533.7,508.6" fill="#355686"/><polygon points="555.1,513.0 563.9,508.6 557.5,504.3 548.8,508.6" fill="#335382"/><polygon points="570.4,513.0 579.0,508.6 572.5,504.3 563.9,508.6" fill="#304e7d"/><polygon points="585.6,513.0 594.1,508.6 587.5,504.3 579.0,508.6" fill="#335382"/><polygon points="600.9,513.0 609.3,508.6 602.5,504.3 594.1,508.6" fill="#335282"/><polygon points="616.1,513.0 624.4,508.6 617.5,504.3 609.3,508.6" fill="#365787"/><polygon points="646.6,513.0 654.6,508.6 647.5,504.3 639.5,508.6" fill="#385b8b"/><polygon points="661.9,513.0 669.8,508.6 662.5,504.3 654.6,508.6" fill="#395c8c"/><polygon points="677.1,513.0 684.9,508.6 677.5,504.3 669.8,508.6" fill="#345484"/><polygon points="692.4,513.0 700.0,508.6 692.5,504.3 684.9,508.6" fill="#355585"/><polygon points="707.6,513.0 715.1,508.6 707.5,504.3 700.0,508.6" fill="#365787"/><polygon points="722.9,513.0 730.2,508.6 722.5,504.3 715.1,508.6" fill="#335383"/><polygon points="738.1,513.0 745.4,508.6 737.5,504.3 730.2,508.6" fill="#355686"/><polygon points="753.4,513.0 760.5,508.6 752.5,504.3 745.4,508.6" fill="#355686"/><polygon points="783.9,513.0 790.7,508.6 782.5,504.3 775.6,508.6" fill="#325180"/><polygon points="799.1,513.0 805.9,508.6 797.5,504.3 790.7,508.6" fill="#365888"/><polygon points="814.4,513.0 821.0,508.6 812.5,504.3 805.9,508.6" fill="#355686"/><polygon points="829.6,513.0 836.1,508.6 827.5,504.3 821.0,508.6" fill="#395c8d"/><polygon points="844.9,513.0 851.2,508.6 842.5,504.3 836.1,508.6" fill="#345483"/><polygon points="860.1,513.0 866.3,508.6 857.5,504.3 851.2,508.6" fill="#395c8d"/><polygon points="875.4,513.0 881.5,508.6 872.5,504.3 866.3,508.6" fill="#335382"/><polygon points="890.6,513.0 896.6,508.6 887.5,504.3 881.5,508.6" fill="#335383"/><polygon points="905.9,513.0 911.7,508.6 902.4,504.3 896.6,508.6" fill="#335282"/><polygon points="921.1,513.0 926.8,508.6 917.4,504.3 911.7,508.6" fill="#375a8a"/><polygon points="484.7,517.5 494.1,513.0 488.3,508.6 478.9,513.0" fill="#355585"/><polygon points="500.1,517.5 509.4,513.0 503.4,508.6 494.1,513.0" fill="#325080"/><polygon points="515.4,517.5 524.6,513.0 518.5,508.6 509.4,513.0" fill="#345484"/><polygon points="530.8,517.5 539.9,513.0 533.7,508.6 524.6,513.0" fill="#355686"/><polygon points="546.2,517.5 555.1,513.0 548.8,508.6 539.9,513.0" fill="#345484"/><polygon points="561.6,517.5 570.4,513.0 563.9,508.6 555.1,513.0" fill="#345585"/><polygon points="577.0,517.5 585.6,513.0 579.0,508.6 570.4,513.0" fill="#355686"/><polygon points="592.3,517.5 600.9,513.0 594.1,508.6 585.6,513.0" fill="#325181"/><polygon points="607.7,517.5 616.1,513.0 609.3,508.6 600.9,513.0" fill="#335282"/><polygon points="623.1,517.5 631.4,513.0 624.4,508.6 616.1,513.0" fill="#31507f"/><polygon points="638.5,517.5 646.6,513.0 639.5,508.6 631.4,513.0" fill="#355686"/><polygon points="653.9,517.5 661.9,513.0 654.6,508.6 646.6,513.0" fill="#325180"/><polygon points="669.2,517.5 677.1,513.0 669.8,508.6 661.9,513.0" fill="#345484"/><polygon points="684.6,517.5 692.4,513.0 684.9,508.6 677.1,513.0" fill="#335382"/><polygon points="700.0,517.5 707.6,513.0 700.0,508.6 692.4,513.0" fill="#335282"/><polygon points="715.4,517.5 722.9,513.0 715.1,508.6 707.6,513.0" fill="#365888"/><polygon points="730.8,517.5 738.1,513.0 730.2,508.6 722.9,513.0" fill="#345585"/><polygon points="746.1,517.5 753.4,513.0 745.4,508.6 738.1,513.0" fill="#355787"/><polygon points="761.5,517.5 768.6,513.0 760.5,508.6 753.4,513.0" fill="#365888"/><polygon points="776.9,517.5 783.9,513.0 775.6,508.6 768.6,513.0" fill="#304e7d"/><polygon points="792.3,517.5 799.1,513.0 790.7,508.6 783.9,513.0" fill="#345484"/><polygon points="807.7,517.5 814.4,513.0 805.9,508.6 799.1,513.0" fill="#365787"/><polygon points="823.0,517.5 829.6,513.0 821.0,508.6 814.4,513.0" fill="#345585"/><polygon points="838.4,517.5 844.9,513.0 836.1,508.6 829.6,513.0" fill="#325180"/><polygon points="853.8,517.5 860.1,513.0 851.2,508.6 844.9,513.0" fill="#345585"/><polygon points="869.2,517.5 875.4,513.0 866.3,508.6 860.1,513.0" fill="#355585"/><polygon points="884.6,517.5 890.6,513.0 881.5,508.6 875.4,513.0" fill="#335282"/><polygon points="899.9,517.5 905.9,513.0 896.6,508.6 890.6,513.0" fill="#355585"/><polygon points="915.3,517.5 921.1,513.0 911.7,508.6 905.9,513.0" fill="#335282"/><polygon points="475.1,522.1 484.7,517.5 478.9,513.0 469.3,517.5" fill="#345484"/><polygon points="490.6,522.1 500.1,517.5 494.1,513.0 484.7,517.5" fill="#345484"/><polygon points="506.1,522.1 515.4,517.5 509.4,513.0 500.1,517.5" fill="#345383"/><polygon points="521.6,522.1 530.8,517.5 524.6,513.0 515.4,517.5" fill="#355687"/><polygon points="537.1,522.1 546.2,517.5 539.9,513.0 530.8,517.5" fill="#365788"/><polygon points="552.6,522.1 561.6,517.5 555.1,513.0 546.2,517.5" fill="#325281"/><polygon points="568.1,522.1 577.0,517.5 570.4,513.0 561.6,517.5" fill="#314f7e"/><polygon points="583.7,522.1 592.3,517.5 585.6,513.0 577.0,517.5" fill="#355687"/><polygon points="599.2,522.1 607.7,517.5 600.9,513.0 592.3,517.5" fill="#335282"/><polygon points="614.7,522.1 623.1,517.5 616.1,513.0 607.7,517.5" fill="#375a8a"/><polygon points="630.2,522.1 638.5,517.5 631.4,513.0 623.1,517.5" fill="#365888"/><polygon points="645.7,522.1 653.9,517.5 646.6,513.0 638.5,517.5" fill="#385b8c"/><polygon points="661.2,522.1 669.2,517.5 661.9,513.0 653.9,517.5" fill="#37598a"/><polygon points="676.7,522.1 684.6,517.5 677.1,513.0 669.2,517.5" fill="#345585"/><polygon points="692.2,522.1 700.0,517.5 692.4,513.0 684.6,517.5" fill="#3a5e8f"/><polygon points="707.8,522.1 715.4,517.5 707.6,513.0 700.0,517.5" fill="#345585"/><polygon points="723.3,522.1 730.8,517.5 722.9,513.0 715.4,517.5" fill="#304e7d"/><polygon points="738.8,522.1 746.1,517.5 738.1,513.0 730.8,517.5" fill="#365787"/><polygon points="754.3,522.1 761.5,517.5 753.4,513.0 746.1,517.5" fill="#345585"/><polygon points="769.8,522.1 776.9,517.5 768.6,513.0 761.5,517.5" fill="#365787"/><polygon points="785.3,522.1 792.3,517.5 783.9,513.0 776.9,517.5" fill="#304e7d"/><polygon points="800.8,522.1 807.7,517.5 799.1,513.0 792.3,517.5" fill="#355687"/><polygon points="816.3,522.1 823.0,517.5 814.4,513.0 807.7,517.5" fill="#345484"/><polygon points="831.9,522.1 838.4,517.5 829.6,513.0 823.0,517.5" fill="#355686"/><polygon points="847.4,522.1 853.8,517.5 844.9,513.0 838.4,517.5" fill="#355686"/><polygon points="862.9,522.1 869.2,517.5 860.1,513.0 853.8,517.5" fill="#345585"/><polygon points="878.4,522.1 884.6,517.5 875.4,513.0 869.2,517.5" fill="#365888"/><polygon points="893.9,522.1 899.9,517.5 890.6,513.0 884.6,517.5" fill="#335383"/><polygon points="909.4,522.1 915.3,517.5 905.9,513.0 899.9,517.5" fill="#365889"/><polygon points="924.9,522.1 930.7,517.5 921.1,513.0 915.3,517.5" fill="#335383"/><polygon points="480.9,526.8 490.6,522.1 484.7,517.5 475.1,522.1" fill="#345484"/><polygon points="496.6,526.8 506.1,522.1 500.1,517.5 490.6,522.1" fill="#375989"/><polygon points="512.2,526.8 521.6,522.1 515.4,517.5 506.1,522.1" fill="#345484"/><polygon points="527.9,526.8 537.1,522.1 530.8,517.5 521.6,522.1" fill="#355686"/><polygon points="543.5,526.8 552.6,522.1 546.2,517.5 537.1,522.1" fill="#365788"/><polygon points="559.2,526.8 568.1,522.1 561.6,517.5 552.6,522.1" fill="#335282"/><polygon points="574.8,526.8 583.7,522.1 577.0,517.5 568.1,522.1" fill="#345484"/><polygon points="590.5,526.8 599.2,522.1 592.3,517.5 583.7,522.1" fill="#345484"/><polygon points="606.1,526.8 614.7,522.1 607.7,517.5 599.2,522.1" fill="#355686"/><polygon points="621.8,526.8 630.2,522.1 623.1,517.5 614.7,522.1" fill="#335383"/><polygon points="637.4,526.8 645.7,522.1 638.5,517.5 630.2,522.1" fill="#365787"/><polygon points="653.1,526.8 661.2,522.1 653.9,517.5 645.7,522.1" fill="#345484"/><polygon points="668.7,526.8 676.7,522.1 669.2,517.5 661.2,522.1" fill="#395c8d"/><polygon points="684.4,526.8 692.2,522.1 684.6,517.5 676.7,522.1" fill="#365889"/><polygon points="700.0,526.8 707.8,522.1 700.0,517.5 692.2,522.1" fill="#335384"/><polygon points="715.6,526.8 723.3,522.1 715.4,517.5 707.8,522.1" fill="#345485"/><polygon points="731.3,526.8 738.8,522.1 730.8,517.5 723.3,522.1" fill="#355687"/><polygon points="746.9,526.8 754.3,522.1 746.1,517.5 738.8,522.1" fill="#355586"/><polygon points="762.6,526.8 769.8,522.1 761.5,517.5 754.3,522.1" fill="#375a8b"/><polygon points="778.2,526.8 785.3,522.1 776.9,517.5 769.8,522.1" fill="#355687"/><polygon points="793.9,526.8 800.8,522.1 792.3,517.5 785.3,522.1" fill="#325181"/><polygon points="809.5,526.8 816.3,522.1 807.7,517.5 800.8,522.1" fill="#355787"/><polygon points="825.2,526.8 831.9,522.1 823.0,517.5 816.3,522.1" fill="#335383"/><polygon points="840.8,526.8 847.4,522.1 838.4,517.5 831.9,522.1" fill="#345485"/><polygon points="856.5,526.8 862.9,522.1 853.8,517.5 847.4,522.1" fill="#37598a"/><polygon points="872.1,526.8 878.4,522.1 869.2,517.5 862.9,522.1" fill="#335282"/><polygon points="887.8,526.8 893.9,522.1 884.6,517.5 878.4,522.1" fill="#37598a"/><polygon points="903.4,526.8 909.4,522.1 899.9,517.5 893.9,522.1" fill="#355686"/><polygon points="919.1,526.8 924.9,522.1 915.3,517.5 909.4,522.1" fill="#375a8b"/><polygon points="471.1,531.5 480.9,526.8 475.1,522.1 465.3,526.8" fill="#355686"/><polygon points="486.9,531.5 496.6,526.8 490.6,522.1 480.9,526.8" fill="#325282"/><polygon points="502.7,531.5 512.2,526.8 506.1,522.1 496.6,526.8" fill="#365889"/><polygon points="518.5,531.5 527.9,526.8 521.6,522.1 512.2,526.8" fill="#3b5f91"/><polygon points="534.3,531.5 543.5,526.8 537.1,522.1 527.9,526.8" fill="#335282"/><polygon points="550.0,531.5 559.2,526.8 552.6,522.1 543.5,526.8" fill="#325181"/><polygon points="565.8,531.5 574.8,526.8 568.1,522.1 559.2,526.8" fill="#355687"/><polygon points="581.6,531.5 590.5,526.8 583.7,522.1 574.8,526.8" fill="#355686"/><polygon points="597.4,531.5 606.1,526.8 599.2,522.1 590.5,526.8" fill="#355586"/><polygon points="613.2,531.5 621.8,526.8 614.7,522.1 606.1,526.8" fill="#385a8b"/><polygon points="629.0,531.5 637.4,526.8 630.2,522.1 621.8,526.8" fill="#355687"/><polygon points="644.8,531.5 653.1,526.8 645.7,522.1 637.4,526.8" fill="#335383"/><polygon points="660.5,531.5 668.7,526.8 661.2,522.1 653.1,526.8" fill="#335283"/><polygon points="676.3,531.5 684.4,526.8 676.7,522.1 668.7,526.8" fill="#365788"/><polygon points="692.1,531.5 700.0,526.8 692.2,522.1 684.4,526.8" fill="#365788"/><polygon points="707.9,531.5 715.6,526.8 707.8,522.1 700.0,526.8" fill="#335283"/><polygon points="723.7,531.5 731.3,526.8 723.3,522.1 715.6,526.8" fill="#345585"/><polygon points="739.5,531.5 746.9,526.8 738.8,522.1 731.3,526.8" fill="#365787"/><polygon points="755.2,531.5 762.6,526.8 754.3,522.1 746.9,526.8" fill="#355687"/><polygon points="771.0,531.5 778.2,526.8 769.8,522.1 762.6,526.8" fill="#3a5f90"/><polygon points="786.8,531.5 793.9,526.8 785.3,522.1 778.2,526.8" fill="#325181"/><polygon points="802.6,531.5 809.5,526.8 800.8,522.1 793.9,526.8" fill="#335282"/><polygon points="818.4,531.5 825.2,526.8 816.3,522.1 809.5,526.8" fill="#37598a"/><polygon points="834.2,531.5 840.8,526.8 831.9,522.1 825.2,526.8" fill="#325181"/><polygon points="850.0,531.5 856.5,526.8 847.4,522.1 840.8,526.8" fill="#395c8d"/><polygon points="865.7,531.5 872.1,526.8 862.9,522.1 856.5,526.8" fill="#365888"/><polygon points="881.5,531.5 887.8,526.8 878.4,522.1 872.1,526.8" fill="#325282"/><polygon points="897.3,531.5 903.4,526.8 893.9,522.1 887.8,526.8" fill="#375989"/><polygon points="913.1,531.5 919.1,526.8 909.4,522.1 903.4,526.8" fill="#365788"/><polygon points="928.9,531.5 934.7,526.8 924.9,522.1 919.1,526.8" fill="#304e7e"/><polygon points="493.0,536.3 502.7,531.5 496.6,526.8 486.9,531.5" fill="#375a8b"/><polygon points="508.9,536.3 518.5,531.5 512.2,526.8 502.7,531.5" fill="#395c8d"/><polygon points="540.7,536.3 550.0,531.5 543.5,526.8 534.3,531.5" fill="#365788"/><polygon points="556.7,536.3 565.8,531.5 559.2,526.8 550.0,531.5" fill="#365788"/><polygon points="588.5,536.3 597.4,531.5 590.5,526.8 581.6,531.5" fill="#375a8b"/><polygon points="604.4,536.3 613.2,531.5 606.1,526.8 597.4,531.5" fill="#365889"/><polygon points="636.3,536.3 644.8,531.5 637.4,526.8 629.0,531.5" fill="#365889"/><polygon points="652.2,536.3 660.5,531.5 653.1,526.8 644.8,531.5" fill="#325282"/><polygon points="668.1,536.3 676.3,531.5 668.7,526.8 660.5,531.5" fill="#355788"/><polygon points="684.1,536.3 692.1,531.5 684.4,526.8 676.3,531.5" fill="#325181"/><polygon points="700.0,536.3 707.9,531.5 700.0,526.8 692.1,531.5" fill="#335282"/><polygon points="715.9,536.3 723.7,531.5 715.6,526.8 707.9,531.5" fill="#37598a"/><polygon points="731.9,536.3 739.5,531.5 731.3,526.8 723.7,531.5" fill="#37598a"/><polygon points="747.8,536.3 755.2,531.5 746.9,526.8 739.5,531.5" fill="#355687"/><polygon points="763.7,536.3 771.0,531.5 762.6,526.8 755.2,531.5" fill="#365788"/><polygon points="795.6,536.3 802.6,531.5 793.9,526.8 786.8,531.5" fill="#37598b"/><polygon points="811.5,536.3 818.4,531.5 809.5,526.8 802.6,531.5" fill="#3a5e90"/><polygon points="843.3,536.3 850.0,531.5 840.8,526.8 834.2,531.5" fill="#3b6091"/><polygon points="859.3,536.3 865.7,531.5 856.5,526.8 850.0,531.5" fill="#335282"/><polygon points="891.1,536.3 897.3,531.5 887.8,526.8 881.5,531.5" fill="#365788"/><polygon points="907.0,536.3 913.1,531.5 903.4,526.8 897.3,531.5" fill="#365788"/><polygon points="477.0,536.3 486.9,531.5 480.9,526.8 471.1,531.5" fill="#375a8b"/><polygon points="524.8,536.3 534.3,531.5 527.9,526.8 518.5,531.5" fill="#345585"/><polygon points="572.6,536.3 581.6,531.5 574.8,526.8 565.8,531.5" fill="#345586"/><polygon points="620.4,536.3 629.0,531.5 621.8,526.8 613.2,531.5" fill="#315080"/><polygon points="779.6,536.3 786.8,531.5 778.2,526.8 771.0,531.5" fill="#315080"/><polygon points="827.4,536.3 834.2,531.5 825.2,526.8 818.4,531.5" fill="#37598a"/><polygon points="875.2,536.3 881.5,531.5 872.1,526.8 865.7,531.5" fill="#355687"/><polygon points="923.0,536.3 928.9,531.5 919.1,526.8 913.1,531.5" fill="#315080"/><polygon points="483.1,541.2 493.0,536.3 486.9,531.5 477.0,536.3" fill="#355788"/><polygon points="499.2,541.2 508.9,536.3 502.7,531.5 493.0,536.3" fill="#36588a"/><polygon points="515.2,541.2 524.8,536.3 518.5,531.5 508.9,536.3" fill="#385b8c"/><polygon points="531.3,541.2 540.7,536.3 534.3,531.5 524.8,536.3" fill="#365788"/><polygon points="547.4,541.2 556.7,536.3 550.0,531.5 540.7,536.3" fill="#325181"/><polygon points="563.4,541.2 572.6,536.3 565.8,531.5 556.7,536.3" fill="#375a8b"/><polygon points="579.5,541.2 588.5,536.3 581.6,531.5 572.6,536.3" fill="#355686"/><polygon points="595.6,541.2 604.4,536.3 597.4,531.5 588.5,536.3" fill="#375a8b"/><polygon points="611.6,541.2 620.4,536.3 613.2,531.5 604.4,536.3" fill="#365889"/><polygon points="627.7,541.2 636.3,536.3 629.0,531.5 620.4,536.3" fill="#3b6092"/><polygon points="643.8,541.2 652.2,536.3 644.8,531.5 636.3,536.3" fill="#355686"/><polygon points="659.8,541.2 668.1,536.3 660.5,531.5 652.2,536.3" fill="#345586"/><polygon points="675.9,541.2 684.1,536.3 676.3,531.5 668.1,536.3" fill="#345586"/><polygon points="692.0,541.2 700.0,536.3 692.1,531.5 684.1,536.3" fill="#355687"/><polygon points="708.0,541.2 715.9,536.3 707.9,531.5 700.0,536.3" fill="#345585"/><polygon points="724.1,541.2 731.9,536.3 723.7,531.5 715.9,536.3" fill="#355586"/><polygon points="740.2,541.2 747.8,536.3 739.5,531.5 731.9,536.3" fill="#3d6395"/><polygon points="756.2,541.2 763.7,536.3 755.2,531.5 747.8,536.3" fill="#385a8c"/><polygon points="772.3,541.2 779.6,536.3 771.0,531.5 763.7,536.3" fill="#365789"/><polygon points="788.4,541.2 795.6,536.3 786.8,531.5 779.6,536.3" fill="#395c8e"/><polygon points="804.4,541.2 811.5,536.3 802.6,531.5 795.6,536.3" fill="#335283"/><polygon points="820.5,541.2 827.4,536.3 818.4,531.5 811.5,536.3" fill="#37598a"/><polygon points="836.6,541.2 843.3,536.3 834.2,531.5 827.4,536.3" fill="#365889"/><polygon points="852.6,541.2 859.3,536.3 850.0,531.5 843.3,536.3" fill="#355687"/><polygon points="868.7,541.2 875.2,536.3 865.7,531.5 859.3,536.3" fill="#335383"/><polygon points="884.8,541.2 891.1,536.3 881.5,531.5 875.2,536.3" fill="#37598a"/><polygon points="900.8,541.2 907.0,536.3 897.3,531.5 891.1,536.3" fill="#345485"/><polygon points="916.9,541.2 923.0,536.3 913.1,531.5 907.0,536.3" fill="#335282"/><polygon points="473.0,546.2 483.1,541.2 477.0,536.3 467.0,541.2" fill="#385b8c"/><polygon points="489.2,546.2 499.2,541.2 493.0,536.3 483.1,541.2" fill="#375a8c"/><polygon points="505.5,546.2 515.2,541.2 508.9,536.3 499.2,541.2" fill="#355687"/><polygon points="521.7,546.2 531.3,541.2 524.8,536.3 515.2,541.2" fill="#355687"/><polygon points="537.9,546.2 547.4,541.2 540.7,536.3 531.3,541.2" fill="#365889"/><polygon points="554.1,546.2 563.4,541.2 556.7,536.3 547.4,541.2" fill="#355788"/><polygon points="570.3,546.2 579.5,541.2 572.6,536.3 563.4,541.2" fill="#325283"/><polygon points="586.5,546.2 595.6,541.2 588.5,536.3 579.5,541.2" fill="#395c8e"/><polygon points="602.7,546.2 611.6,541.2 604.4,536.3 595.6,541.2" fill="#355586"/><polygon points="618.9,546.2 627.7,541.2 620.4,536.3 611.6,541.2" fill="#365789"/><polygon points="635.2,546.2 643.8,541.2 636.3,536.3 627.7,541.2" fill="#325182"/><polygon points="651.4,546.2 659.8,541.2 652.2,536.3 643.8,541.2" fill="#345485"/><polygon points="667.6,546.2 675.9,541.2 668.1,536.3 659.8,541.2" fill="#355687"/><polygon points="683.8,546.2 692.0,541.2 684.1,536.3 675.9,541.2" fill="#345586"/><polygon points="700.0,546.2 708.0,541.2 700.0,536.3 692.0,541.2" fill="#385c8e"/><polygon points="716.2,546.2 724.1,541.2 715.9,536.3 708.0,541.2" fill="#355687"/><polygon points="732.4,546.2 740.2,541.2 731.9,536.3 724.1,541.2" fill="#355688"/><polygon points="748.6,546.2 756.2,541.2 747.8,536.3 740.2,541.2" fill="#395c8e"/><polygon points="764.8,546.2 772.3,541.2 763.7,536.3 756.2,541.2" fill="#395d8f"/><polygon points="781.1,546.2 788.4,541.2 779.6,536.3 772.3,541.2" fill="#385c8d"/><polygon points="797.3,546.2 804.4,541.2 795.6,536.3 788.4,541.2" fill="#345485"/><polygon points="813.5,546.2 820.5,541.2 811.5,536.3 804.4,541.2" fill="#385b8c"/><polygon points="829.7,546.2 836.6,541.2 827.4,536.3 820.5,541.2" fill="#365889"/><polygon points="845.9,546.2 852.6,541.2 843.3,536.3 836.6,541.2" fill="#365788"/><polygon points="862.1,546.2 868.7,541.2 859.3,536.3 852.6,541.2" fill="#375a8c"/><polygon points="878.3,546.2 884.8,541.2 875.2,536.3 868.7,541.2" fill="#385c8d"/><polygon points="894.5,546.2 900.8,541.2 891.1,536.3 884.8,541.2" fill="#325181"/><polygon points="910.8,546.2 916.9,541.2 907.0,536.3 900.8,541.2" fill="#365889"/><polygon points="927.0,546.2 933.0,541.2 923.0,536.3 916.9,541.2" fill="#355788"/><polygon points="479.2,551.3 489.2,546.2 483.1,541.2 473.0,546.2" fill="#345586"/><polygon points="495.5,551.3 505.5,546.2 499.2,541.2 489.2,546.2" fill="#3a5f91"/><polygon points="511.9,551.3 521.7,546.2 515.2,541.2 505.5,546.2" fill="#37598b"/><polygon points="528.2,551.3 537.9,546.2 531.3,541.2 521.7,546.2" fill="#365789"/><polygon points="544.6,551.3 554.1,546.2 547.4,541.2 537.9,546.2" fill="#335384"/><polygon points="560.9,551.3 570.3,546.2 563.4,541.2 554.1,546.2" fill="#325282"/><polygon points="577.3,551.3 586.5,546.2 579.5,541.2 570.3,546.2" fill="#365788"/><polygon points="593.7,551.3 602.7,546.2 595.6,541.2 586.5,546.2" fill="#37598a"/><polygon points="610.0,551.3 618.9,546.2 611.6,541.2 602.7,546.2" fill="#36588a"/><polygon points="626.4,551.3 635.2,546.2 627.7,541.2 618.9,546.2" fill="#385c8e"/><polygon points="642.7,551.3 651.4,546.2 643.8,541.2 635.2,546.2" fill="#36588a"/><polygon points="659.1,551.3 667.6,546.2 659.8,541.2 651.4,546.2" fill="#385b8c"/><polygon points="675.5,551.3 683.8,546.2 675.9,541.2 667.6,546.2" fill="#365889"/><polygon points="691.8,551.3 700.0,546.2 692.0,541.2 683.8,546.2" fill="#37598b"/><polygon points="708.2,551.3 716.2,546.2 708.0,541.2 700.0,546.2" fill="#345485"/><polygon points="724.5,551.3 732.4,546.2 724.1,541.2 716.2,546.2" fill="#36588a"/><polygon points="740.9,551.3 748.6,546.2 740.2,541.2 732.4,546.2" fill="#345486"/><polygon points="757.3,551.3 764.8,546.2 756.2,541.2 748.6,546.2" fill="#395c8e"/><polygon points="773.6,551.3 781.1,546.2 772.3,541.2 764.8,546.2" fill="#395d90"/><polygon points="790.0,551.3 797.3,546.2 788.4,541.2 781.1,546.2" fill="#365788"/><polygon points="806.3,551.3 813.5,546.2 804.4,541.2 797.3,546.2" fill="#355788"/><polygon points="822.7,551.3 829.7,546.2 820.5,541.2 813.5,546.2" fill="#37598b"/><polygon points="839.1,551.3 845.9,546.2 836.6,541.2 829.7,546.2" fill="#37598a"/><polygon points="855.4,551.3 862.1,546.2 852.6,541.2 845.9,546.2" fill="#395c8e"/><polygon points="871.8,551.3 878.3,546.2 868.7,541.2 862.1,546.2" fill="#3a5f91"/><polygon points="888.1,551.3 894.5,546.2 884.8,541.2 878.3,546.2" fill="#335384"/><polygon points="904.5,551.3 910.8,546.2 900.8,541.2 894.5,546.2" fill="#345586"/><polygon points="920.8,551.3 927.0,546.2 916.9,541.2 910.8,546.2" fill="#395c8e"/><polygon points="485.4,556.5 495.5,551.3 489.2,546.2 479.2,551.3" fill="#385a8c"/><polygon points="501.9,556.5 511.9,551.3 505.5,546.2 495.5,551.3" fill="#395c8f"/><polygon points="518.4,556.5 528.2,551.3 521.7,546.2 511.9,551.3" fill="#395c8e"/><polygon points="534.9,556.5 544.6,551.3 537.9,546.2 528.2,551.3" fill="#385b8d"/><polygon points="551.4,556.5 560.9,551.3 554.1,546.2 544.6,551.3" fill="#375a8c"/><polygon points="567.9,556.5 577.3,551.3 570.3,546.2 560.9,551.3" fill="#304e7f"/><polygon points="584.4,556.5 593.7,551.3 586.5,546.2 577.3,551.3" fill="#355789"/><polygon points="600.9,556.5 610.0,551.3 602.7,546.2 593.7,551.3" fill="#36588a"/><polygon points="617.5,556.5 626.4,551.3 618.9,546.2 610.0,551.3" fill="#385b8d"/><polygon points="634.0,556.5 642.7,551.3 635.2,546.2 626.4,551.3" fill="#3a5e91"/><polygon points="650.5,556.5 659.1,551.3 651.4,546.2 642.7,551.3" fill="#355788"/><polygon points="667.0,556.5 675.5,551.3 667.6,546.2 659.1,551.3" fill="#375a8b"/><polygon points="683.5,556.5 691.8,551.3 683.8,546.2 675.5,551.3" fill="#385a8c"/><polygon points="700.0,556.5 708.2,551.3 700.0,546.2 691.8,551.3" fill="#355788"/><polygon points="716.5,556.5 724.5,551.3 716.2,546.2 708.2,551.3" fill="#375a8c"/><polygon points="733.0,556.5 740.9,551.3 732.4,546.2 724.5,551.3" fill="#385c8e"/><polygon points="749.5,556.5 757.3,551.3 748.6,546.2 740.9,551.3" fill="#3b5f92"/><polygon points="766.0,556.5 773.6,551.3 764.8,546.2 757.3,551.3" fill="#355688"/><polygon points="782.5,556.5 790.0,551.3 781.1,546.2 773.6,551.3" fill="#385a8c"/><polygon points="799.1,556.5 806.3,551.3 797.3,546.2 790.0,551.3" fill="#355688"/><polygon points="815.6,556.5 822.7,551.3 813.5,546.2 806.3,551.3" fill="#37598b"/><polygon points="832.1,556.5 839.1,551.3 829.7,546.2 822.7,551.3" fill="#335384"/><polygon points="848.6,556.5 855.4,551.3 845.9,546.2 839.1,551.3" fill="#325081"/><polygon points="865.1,556.5 871.8,551.3 862.1,546.2 855.4,551.3" fill="#385c8d"/><polygon points="881.6,556.5 888.1,551.3 878.3,546.2 871.8,551.3" fill="#375b8a"/><polygon points="898.1,556.5 904.5,551.3 894.5,546.2 888.1,551.3" fill="#365a89"/><polygon points="914.6,556.5 920.8,551.3 910.8,546.2 904.5,551.3" fill="#36588a"/><polygon points="475.1,561.7 485.4,556.5 479.2,551.3 468.9,556.5" fill="#365789"/><polygon points="491.7,561.7 501.9,556.5 495.5,551.3 485.4,556.5" fill="#36598b"/><polygon points="508.4,561.7 518.4,556.5 511.9,551.3 501.9,556.5" fill="#375a8c"/><polygon points="525.0,561.7 534.9,556.5 528.2,551.3 518.4,556.5" fill="#385b8d"/><polygon points="541.7,561.7 551.4,556.5 544.6,551.3 534.9,556.5" fill="#37598b"/><polygon points="558.4,561.7 567.9,556.5 560.9,551.3 551.4,556.5" fill="#335385"/><polygon points="575.0,561.7 584.4,556.5 577.3,551.3 567.9,556.5" fill="#345485"/><polygon points="591.7,561.7 600.9,556.5 593.7,551.3 584.4,556.5" fill="#355789"/><polygon points="608.4,561.7 617.5,556.5 610.0,551.3 600.9,556.5" fill="#375a8c"/><polygon points="625.0,561.7 634.0,556.5 626.4,551.3 617.5,556.5" fill="#355687"/><polygon points="641.7,561.7 650.5,556.5 642.7,551.3 634.0,556.5" fill="#325183"/><polygon points="658.3,561.7 667.0,556.5 659.1,551.3 650.5,556.5" fill="#385c8e"/><polygon points="675.0,561.7 683.5,556.5 675.5,551.3 667.0,556.5" fill="#3d6396"/><polygon points="691.7,561.7 700.0,556.5 691.8,551.3 683.5,556.5" fill="#37598b"/><polygon points="708.3,561.7 716.5,556.5 708.2,551.3 700.0,556.5" fill="#335385"/><polygon points="725.0,561.7 733.0,556.5 724.5,551.3 716.5,556.5" fill="#37598b"/><polygon points="741.7,561.7 749.5,556.5 740.9,551.3 733.0,556.5" fill="#36588a"/><polygon points="758.3,561.7 766.0,556.5 757.3,551.3 749.5,556.5" fill="#3a5f92"/><polygon points="775.0,561.7 782.5,556.5 773.6,551.3 766.0,556.5" fill="#345486"/><polygon points="791.6,561.7 799.1,556.5 790.0,551.3 782.5,556.5" fill="#37598b"/><polygon points="808.3,561.7 815.6,556.5 806.3,551.3 799.1,556.5" fill="#36588a"/><polygon points="825.0,561.7 832.1,556.5 822.7,551.3 815.6,556.5" fill="#355688"/><polygon points="841.6,561.7 848.6,556.5 839.1,551.3 832.1,556.5" fill="#37598b"/><polygon points="858.3,561.7 865.1,556.5 855.4,551.3 848.6,556.5" fill="#355888"/><polygon points="875.0,561.7 881.6,556.5 871.8,551.3 865.1,556.5" fill="#345784"/><polygon points="891.6,561.7 898.1,556.5 888.1,551.3 881.6,556.5" fill="#375d89"/><polygon points="908.3,561.7 914.6,556.5 904.5,551.3 898.1,556.5" fill="#385e8c"/><polygon points="924.9,561.7 931.1,556.5 920.8,551.3 914.6,556.5" fill="#36588a"/><polygon points="481.4,567.1 491.7,561.7 485.4,556.5 475.1,561.7" fill="#355789"/><polygon points="498.2,567.1 508.4,561.7 501.9,556.5 491.7,561.7" fill="#37598b"/><polygon points="515.0,567.1 525.0,561.7 518.4,556.5 508.4,561.7" fill="#375a8c"/><polygon points="531.8,567.1 541.7,561.7 534.9,556.5 525.0,561.7" fill="#355587"/><polygon points="548.6,567.1 558.4,561.7 551.4,556.5 541.7,561.7" fill="#395c8f"/><polygon points="565.5,567.1 575.0,561.7 567.9,556.5 558.4,561.7" fill="#355587"/><polygon points="582.3,567.1 591.7,561.7 584.4,556.5 575.0,561.7" fill="#355587"/><polygon points="599.1,567.1 608.4,561.7 600.9,556.5 591.7,561.7" fill="#36588a"/><polygon points="615.9,567.1 625.0,561.7 617.5,556.5 608.4,561.7" fill="#3a5e91"/><polygon points="632.7,567.1 641.7,561.7 634.0,556.5 625.0,561.7" fill="#345587"/><polygon points="649.5,567.1 658.3,561.7 650.5,556.5 641.7,561.7" fill="#37598b"/><polygon points="666.4,567.1 675.0,561.7 667.0,556.5 658.3,561.7" fill="#3d6396"/><polygon points="683.2,567.1 691.7,561.7 683.5,556.5 675.0,561.7" fill="#395c8f"/><polygon points="700.0,567.1 708.3,561.7 700.0,556.5 691.7,561.7" fill="#385b8e"/><polygon points="716.8,567.1 725.0,561.7 716.5,556.5 708.3,561.7" fill="#36598b"/><polygon points="733.6,567.1 741.7,561.7 733.0,556.5 725.0,561.7" fill="#385b8d"/><polygon points="750.5,567.1 758.3,561.7 749.5,556.5 741.7,561.7" fill="#355688"/><polygon points="767.3,567.1 775.0,561.7 766.0,556.5 758.3,561.7" fill="#385c8e"/><polygon points="784.1,567.1 791.6,561.7 782.5,556.5 775.0,561.7" fill="#36588b"/><polygon points="800.9,567.1 808.3,561.7 799.1,556.5 791.6,561.7" fill="#355789"/><polygon points="817.7,567.1 825.0,561.7 815.6,556.5 808.3,561.7" fill="#385a8d"/><polygon points="834.5,567.1 841.6,561.7 832.1,556.5 825.0,561.7" fill="#375a8c"/><polygon points="851.4,567.1 858.3,561.7 848.6,556.5 841.6,561.7" fill="#375c8b"/><polygon points="868.2,567.1 875.0,561.7 865.1,556.5 858.3,561.7" fill="#39618d"/><polygon points="885.0,567.1 891.6,561.7 881.6,556.5 875.0,561.7" fill="#38608a"/><polygon points="901.8,567.1 908.3,561.7 898.1,556.5 891.6,561.7" fill="#385f8a"/><polygon points="918.6,567.1 924.9,561.7 914.6,556.5 908.3,561.7" fill="#395f8d"/><polygon points="487.8,572.6 498.2,567.1 491.7,561.7 481.4,567.1" fill="#36588a"/><polygon points="504.8,572.6 515.0,567.1 508.4,561.7 498.2,567.1" fill="#355688"/><polygon points="521.7,572.6 531.8,567.1 525.0,561.7 515.0,567.1" fill="#3a5e91"/><polygon points="538.7,572.6 548.6,567.1 541.7,561.7 531.8,567.1" fill="#37598c"/><polygon points="555.7,572.6 565.5,567.1 558.4,561.7 548.6,567.1" fill="#375a8c"/><polygon points="572.7,572.6 582.3,567.1 575.0,561.7 565.5,567.1" fill="#375a8c"/><polygon points="589.7,572.6 599.1,567.1 591.7,561.7 582.3,567.1" fill="#355789"/><polygon points="606.6,572.6 615.9,567.1 608.4,561.7 599.1,567.1" fill="#37598c"/><polygon points="623.6,572.6 632.7,567.1 625.0,561.7 615.9,567.1" fill="#375a8d"/><polygon points="640.6,572.6 649.5,567.1 641.7,561.7 632.7,567.1" fill="#355688"/><polygon points="657.6,572.6 666.4,567.1 658.3,561.7 649.5,567.1" fill="#385c8e"/><polygon points="674.5,572.6 683.2,567.1 675.0,561.7 666.4,567.1" fill="#36588b"/><polygon points="691.5,572.6 700.0,567.1 691.7,561.7 683.2,567.1" fill="#385b8e"/><polygon points="708.5,572.6 716.8,567.1 708.3,561.7 700.0,567.1" fill="#375a8d"/><polygon points="725.5,572.6 733.6,567.1 725.0,561.7 716.8,567.1" fill="#37598c"/><polygon points="742.4,572.6 750.5,567.1 741.7,561.7 733.6,567.1" fill="#3a5e91"/><polygon points="759.4,572.6 767.3,567.1 758.3,561.7 750.5,567.1" fill="#375a8c"/><polygon points="776.4,572.6 784.1,567.1 775.0,561.7 767.3,567.1" fill="#385b8d"/><polygon points="793.4,572.6 800.9,567.1 791.6,561.7 784.1,567.1" fill="#345587"/><polygon points="810.3,572.6 817.7,567.1 808.3,561.7 800.9,567.1" fill="#375a8d"/><polygon points="827.3,572.6 834.5,567.1 825.0,561.7 817.7,567.1" fill="#395c8f"/><polygon points="844.3,572.6 851.4,567.1 841.6,561.7 834.5,567.1" fill="#375c8b"/><polygon points="861.3,572.6 868.2,567.1 858.3,561.7 851.4,567.1" fill="#39618c"/><polygon points="878.3,572.6 885.0,567.1 875.0,561.7 868.2,567.1" fill="#3b6790"/><polygon points="895.2,572.6 901.8,567.1 891.6,561.7 885.0,567.1" fill="#39648c"/><polygon points="912.2,572.6 918.6,567.1 908.3,561.7 901.8,567.1" fill="#375f8a"/><polygon points="477.2,578.1 487.8,572.6 481.4,567.1 470.8,572.6" fill="#345587"/><polygon points="494.3,578.1 504.8,572.6 498.2,567.1 487.8,572.6" fill="#37598c"/><polygon points="511.5,578.1 521.7,572.6 515.0,567.1 504.8,572.6" fill="#355688"/><polygon points="528.6,578.1 538.7,572.6 531.8,567.1 521.7,572.6" fill="#36588a"/><polygon points="545.8,578.1 555.7,572.6 548.6,567.1 538.7,572.6" fill="#375a8c"/><polygon points="562.9,578.1 572.7,572.6 565.5,567.1 555.7,572.6" fill="#3a5e92"/><polygon points="580.0,578.1 589.7,572.6 582.3,567.1 572.7,572.6" fill="#355789"/><polygon points="597.2,578.1 606.6,572.6 599.1,567.1 589.7,572.6" fill="#395d90"/><polygon points="614.3,578.1 623.6,572.6 615.9,567.1 606.6,572.6" fill="#37598c"/><polygon points="631.4,578.1 640.6,572.6 632.7,567.1 623.6,572.6" fill="#36588b"/><polygon points="648.6,578.1 657.6,572.6 649.5,567.1 640.6,572.6" fill="#385b8e"/><polygon points="665.7,578.1 674.5,572.6 666.4,567.1 657.6,572.6" fill="#395d91"/><polygon points="682.9,578.1 691.5,572.6 683.2,567.1 674.5,572.6" fill="#355789"/><polygon points="700.0,578.1 708.5,572.6 700.0,567.1 691.5,572.6" fill="#385b8d"/><polygon points="717.1,578.1 725.5,572.6 716.8,567.1 708.5,572.6" fill="#355789"/><polygon points="734.3,578.1 742.4,572.6 733.6,567.1 725.5,572.6" fill="#355688"/><polygon points="751.4,578.1 759.4,572.6 750.5,567.1 742.4,572.6" fill="#355789"/><polygon points="768.6,578.1 776.4,572.6 767.3,567.1 759.4,572.6" fill="#3b6093"/><polygon points="785.7,578.1 793.4,572.6 784.1,567.1 776.4,572.6" fill="#3a5f92"/><polygon points="802.8,578.1 810.3,572.6 800.9,567.1 793.4,572.6" fill="#3a5e91"/><polygon points="820.0,578.1 827.3,572.6 817.7,567.1 810.3,572.6" fill="#355688"/><polygon points="837.1,578.1 844.3,572.6 834.5,567.1 827.3,572.6" fill="#345786"/><polygon points="854.2,578.1 861.3,572.6 851.4,567.1 844.3,572.6" fill="#39628c"/><polygon points="871.4,578.1 878.3,572.6 868.2,567.1 861.3,572.6" fill="#386289"/><polygon points="888.5,578.1 895.2,572.6 885.0,567.1 878.3,572.6" fill="#3a678c"/><polygon points="905.7,578.1 912.2,572.6 901.8,567.1 895.2,572.6" fill="#3a668d"/><polygon points="922.8,578.1 929.2,572.6 918.6,567.1 912.2,572.6" fill="#3a638e"/><polygon points="483.7,583.8 494.3,578.1 487.8,572.6 477.2,578.1" fill="#385b8e"/><polygon points="501.0,583.8 511.5,578.1 504.8,572.6 494.3,578.1" fill="#385b8e"/><polygon points="518.3,583.8 528.6,578.1 521.7,572.6 511.5,578.1" fill="#36578a"/><polygon points="535.6,583.8 545.8,578.1 538.7,572.6 528.6,578.1" fill="#3a5e92"/><polygon points="552.9,583.8 562.9,578.1 555.7,572.6 545.8,578.1" fill="#3a5f93"/><polygon points="570.2,583.8 580.0,578.1 572.7,572.6 562.9,578.1" fill="#36588a"/><polygon points="587.5,583.8 597.2,578.1 589.7,572.6 580.0,578.1" fill="#375a8d"/><polygon points="604.8,583.8 614.3,578.1 606.6,572.6 597.2,578.1" fill="#37598c"/><polygon points="622.1,583.8 631.4,578.1 623.6,572.6 614.3,578.1" fill="#395c90"/><polygon points="639.4,583.8 648.6,578.1 640.6,572.6 631.4,578.1" fill="#345588"/><polygon points="656.7,583.8 665.7,578.1 657.6,572.6 648.6,578.1" fill="#37598c"/><polygon points="674.0,583.8 682.9,578.1 674.5,572.6 665.7,578.1" fill="#385c8f"/><polygon points="691.3,583.8 700.0,578.1 691.5,572.6 682.9,578.1" fill="#3a5e91"/><polygon points="708.7,583.8 717.1,578.1 708.5,572.6 700.0,578.1" fill="#375a8d"/><polygon points="726.0,583.8 734.3,578.1 725.5,572.6 717.1,578.1" fill="#375a8d"/><polygon points="743.3,583.8 751.4,578.1 742.4,572.6 734.3,578.1" fill="#395d90"/><polygon points="760.6,583.8 768.6,578.1 759.4,572.6 751.4,578.1" fill="#395c90"/><polygon points="777.9,583.8 785.7,578.1 776.4,572.6 768.6,578.1" fill="#375a8d"/><polygon points="795.2,583.8 802.8,578.1 793.4,572.6 785.7,578.1" fill="#395d91"/><polygon points="812.5,583.8 820.0,578.1 810.3,572.6 802.8,578.1" fill="#3a5e92"/><polygon points="829.8,583.8 837.1,578.1 827.3,572.6 820.0,578.1" fill="#3a6091"/><polygon points="847.1,583.8 854.2,578.1 844.3,572.6 837.1,578.1" fill="#3a658f"/><polygon points="864.4,583.8 871.4,578.1 861.3,572.6 854.2,578.1" fill="#3d6c92"/><polygon points="881.7,583.8 888.5,578.1 878.3,572.6 871.4,578.1" fill="#39678b"/><polygon points="899.0,583.8 905.7,578.1 895.2,572.6 888.5,578.1" fill="#39678b"/><polygon points="916.3,583.8 922.8,578.1 912.2,572.6 905.7,578.1" fill="#335a80"/><polygon points="472.9,589.6 483.7,583.8 477.2,578.1 466.4,583.8" fill="#385b8f"/><polygon points="490.4,589.6 501.0,583.8 494.3,578.1 483.7,583.8" fill="#345587"/><polygon points="507.8,589.6 518.3,583.8 511.5,578.1 501.0,583.8" fill="#3b6094"/><polygon points="525.3,589.6 535.6,583.8 528.6,578.1 518.3,583.8" fill="#375a8e"/><polygon points="542.8,589.6 552.9,583.8 545.8,578.1 535.6,583.8" fill="#385c8f"/><polygon points="560.2,589.6 570.2,583.8 562.9,578.1 552.9,583.8" fill="#385b8f"/><polygon points="577.7,589.6 587.5,583.8 580.0,578.1 570.2,583.8" fill="#3a5e91"/><polygon points="595.2,589.6 604.8,583.8 597.2,578.1 587.5,583.8" fill="#36598c"/><polygon points="612.6,589.6 622.1,583.8 614.3,578.1 604.8,583.8" fill="#395e91"/><polygon points="630.1,589.6 639.4,583.8 631.4,578.1 622.1,583.8" fill="#375a8d"/><polygon points="647.6,589.6 656.7,583.8 648.6,578.1 639.4,583.8" fill="#3b6094"/><polygon points="665.1,589.6 674.0,583.8 665.7,578.1 656.7,583.8" fill="#3b6094"/><polygon points="682.5,589.6 691.3,583.8 682.9,578.1 674.0,583.8" fill="#385c8f"/><polygon points="700.0,589.6 708.7,583.8 700.0,578.1 691.3,583.8" fill="#385b8e"/><polygon points="717.5,589.6 726.0,583.8 717.1,578.1 708.7,583.8" fill="#375a8d"/><polygon points="734.9,589.6 743.3,583.8 734.3,578.1 726.0,583.8" fill="#3b6094"/><polygon points="752.4,589.6 760.6,583.8 751.4,578.1 743.3,583.8" fill="#36588c"/><polygon points="769.9,589.6 777.9,583.8 768.6,578.1 760.6,583.8" fill="#3a5f92"/><polygon points="787.4,589.6 795.2,583.8 785.7,578.1 777.9,583.8" fill="#385c8f"/><polygon points="804.8,589.6 812.5,583.8 802.8,578.1 795.2,583.8" fill="#335486"/><polygon points="822.3,589.6 829.8,583.8 820.0,578.1 812.5,583.8" fill="#385b8e"/><polygon points="839.8,589.6 847.1,583.8 837.1,578.1 829.8,583.8" fill="#38618c"/><polygon points="857.2,589.6 864.4,583.8 854.2,578.1 847.1,583.8" fill="#356085"/><polygon points="874.7,589.6 881.7,583.8 871.4,578.1 864.4,583.8" fill="#376587"/><polygon points="892.2,589.6 899.0,583.8 888.5,578.1 881.7,583.8" fill="#3a6a8c"/><polygon points="909.6,589.6 916.3,583.8 905.7,578.1 899.0,583.8" fill="#3e6e93"/><polygon points="927.1,589.6 933.6,583.8 922.8,578.1 916.3,583.8" fill="#3b6790"/><polygon points="479.5,595.5 490.4,589.6 483.7,583.8 472.9,589.6" fill="#3d6398"/><polygon points="497.1,595.5 507.8,589.6 501.0,583.8 490.4,589.6" fill="#385b8f"/><polygon points="514.8,595.5 525.3,589.6 518.3,583.8 507.8,589.6" fill="#3a5e92"/><polygon points="532.4,595.5 542.8,589.6 535.6,583.8 525.3,589.6" fill="#375a8d"/><polygon points="550.0,595.5 560.2,589.6 552.9,583.8 542.8,589.6" fill="#395d91"/><polygon points="567.7,595.5 577.7,589.6 570.2,583.8 560.2,589.6" fill="#3a5e92"/><polygon points="585.3,595.5 595.2,589.6 587.5,583.8 577.7,589.6" fill="#355689"/><polygon points="603.0,595.5 612.6,589.6 604.8,583.8 595.2,589.6" fill="#395d90"/><polygon points="620.6,595.5 630.1,589.6 622.1,583.8 612.6,589.6" fill="#3a5e92"/><polygon points="638.3,595.5 647.6,589.6 639.4,583.8 630.1,589.6" fill="#35578a"/><polygon points="655.9,595.5 665.1,589.6 656.7,583.8 647.6,589.6" fill="#395d91"/><polygon points="673.5,595.5 682.5,589.6 674.0,583.8 665.1,589.6" fill="#395c90"/><polygon points="691.2,595.5 700.0,589.6 691.3,583.8 682.5,589.6" fill="#3b6094"/><polygon points="708.8,595.5 717.5,589.6 708.7,583.8 700.0,589.6" fill="#3a5e92"/><polygon points="726.5,595.5 734.9,589.6 726.0,583.8 717.5,589.6" fill="#395d90"/><polygon points="744.1,595.5 752.4,589.6 743.3,583.8 734.9,589.6" fill="#3a5e92"/><polygon points="761.7,595.5 769.9,589.6 760.6,583.8 752.4,589.6" fill="#36588b"/><polygon points="779.4,595.5 787.4,589.6 777.9,583.8 769.9,589.6" fill="#375a8d"/><polygon points="797.0,595.5 804.8,589.6 795.2,583.8 787.4,589.6" fill="#395c90"/><polygon points="814.7,595.5 822.3,589.6 812.5,583.8 804.8,589.6" fill="#375a8d"/><polygon points="832.3,595.5 839.8,589.6 829.8,583.8 822.3,589.6" fill="#38608c"/><polygon points="850.0,595.5 857.2,589.6 847.1,583.8 839.8,589.6" fill="#3c6a90"/><polygon points="867.6,595.5 874.7,589.6 864.4,583.8 857.2,589.6" fill="#3c6d8f"/><polygon points="885.2,595.5 892.2,589.6 881.7,583.8 874.7,589.6" fill="#3a6b8b"/><polygon points="902.9,595.5 909.6,589.6 899.0,583.8 892.2,589.6" fill="#376586"/><polygon points="920.5,595.5 927.1,589.6 916.3,583.8 909.6,589.6" fill="#3a688d"/><polygon points="486.2,601.5 497.1,595.5 490.4,589.6 479.5,595.5" fill="#3b6094"/><polygon points="504.0,601.5 514.8,595.5 507.8,589.6 497.1,595.5" fill="#395e92"/><polygon points="521.8,601.5 532.4,595.5 525.3,589.6 514.8,595.5" fill="#385b8f"/><polygon points="539.7,601.5 550.0,595.5 542.8,589.6 532.4,595.5" fill="#3a5f93"/><polygon points="557.5,601.5 567.7,595.5 560.2,589.6 550.0,595.5" fill="#3a5e92"/><polygon points="575.3,601.5 585.3,595.5 577.7,589.6 567.7,595.5" fill="#3c6397"/><polygon points="593.1,601.5 603.0,595.5 595.2,589.6 585.3,595.5" fill="#3e659a"/><polygon points="610.9,601.5 620.6,595.5 612.6,589.6 603.0,595.5" fill="#345588"/><polygon points="628.7,601.5 638.3,595.5 630.1,589.6 620.6,595.5" fill="#3a5e92"/><polygon points="646.6,601.5 655.9,595.5 647.6,589.6 638.3,595.5" fill="#395e92"/><polygon points="664.4,601.5 673.5,595.5 665.1,589.6 655.9,595.5" fill="#345487"/><polygon points="682.2,601.5 691.2,595.5 682.5,589.6 673.5,595.5" fill="#395d91"/><polygon points="700.0,601.5 708.8,595.5 700.0,589.6 691.2,595.5" fill="#3a5f94"/><polygon points="717.8,601.5 726.5,595.5 717.5,589.6 708.8,595.5" fill="#3b6094"/><polygon points="735.6,601.5 744.1,595.5 734.9,589.6 726.5,595.5" fill="#3a5f93"/><polygon points="753.4,601.5 761.7,595.5 752.4,589.6 744.1,595.5" fill="#395d91"/><polygon points="771.3,601.5 779.4,595.5 769.9,589.6 761.7,595.5" fill="#395d91"/><polygon points="789.1,601.5 797.0,595.5 787.4,589.6 779.4,595.5" fill="#395d91"/><polygon points="806.9,601.5 814.7,595.5 804.8,589.6 797.0,595.5" fill="#385b8f"/><polygon points="824.7,601.5 832.3,595.5 822.3,589.6 814.7,595.5" fill="#396190"/><polygon points="842.5,601.5 850.0,595.5 839.8,589.6 832.3,595.5" fill="#39668c"/><polygon points="860.3,601.5 867.6,595.5 857.2,589.6 850.0,595.5" fill="#3a6b8c"/><polygon points="878.2,601.5 885.2,595.5 874.7,589.6 867.6,595.5" fill="#3c6f8e"/><polygon points="896.0,601.5 902.9,595.5 892.2,589.6 885.2,595.5" fill="#3b6e8d"/><polygon points="913.8,601.5 920.5,595.5 909.6,589.6 902.9,595.5" fill="#3a6a8c"/><polygon points="475.1,607.7 486.2,601.5 479.5,595.5 468.4,601.5" fill="#375a8e"/><polygon points="493.1,607.7 504.0,601.5 497.1,595.5 486.2,601.5" fill="#375a8e"/><polygon points="511.1,607.7 521.8,601.5 514.8,595.5 504.0,601.5" fill="#395d91"/><polygon points="529.1,607.7 539.7,601.5 532.4,595.5 521.8,601.5" fill="#395d91"/><polygon points="547.0,607.7 557.5,601.5 550.0,595.5 539.7,601.5" fill="#395d91"/><polygon points="565.0,607.7 575.3,601.5 567.7,595.5 557.5,601.5" fill="#385b8f"/><polygon points="583.0,607.7 593.1,601.5 585.3,595.5 575.3,601.5" fill="#395e92"/><polygon points="601.0,607.7 610.9,601.5 603.0,595.5 593.1,601.5" fill="#36588c"/><polygon points="619.0,607.7 628.7,601.5 620.6,595.5 610.9,601.5" fill="#3a5e93"/><polygon points="637.0,607.7 646.6,601.5 638.3,595.5 628.7,601.5" fill="#375a8e"/><polygon points="655.0,607.7 664.4,601.5 655.9,595.5 646.6,601.5" fill="#3a5f93"/><polygon points="673.0,607.7 682.2,601.5 673.5,595.5 664.4,601.5" fill="#37598d"/><polygon points="691.0,607.7 700.0,601.5 691.2,595.5 682.2,601.5" fill="#3e659a"/><polygon points="709.0,607.7 717.8,601.5 708.8,595.5 700.0,601.5" fill="#395e92"/><polygon points="727.0,607.7 735.6,601.5 726.5,595.5 717.8,601.5" fill="#395d92"/><polygon points="745.0,607.7 753.4,601.5 744.1,595.5 735.6,601.5" fill="#385b90"/><polygon points="763.0,607.7 771.3,601.5 761.7,595.5 753.4,601.5" fill="#385c90"/><polygon points="781.0,607.7 789.1,601.5 779.4,595.5 771.3,601.5" fill="#3a5f94"/><polygon points="799.0,607.7 806.9,601.5 797.0,595.5 789.1,601.5" fill="#375a8e"/><polygon points="817.0,607.7 824.7,601.5 814.7,595.5 806.9,601.5" fill="#3a6193"/><polygon points="835.0,607.7 842.5,601.5 832.3,595.5 824.7,601.5" fill="#3c6a93"/><polygon points="853.0,607.7 860.3,601.5 850.0,595.5 842.5,601.5" fill="#3c6e90"/><polygon points="870.9,607.7 878.2,601.5 867.6,595.5 860.3,601.5" fill="#3c708e"/><polygon points="888.9,607.7 896.0,601.5 885.2,595.5 878.2,601.5" fill="#3b6f8c"/><polygon points="906.9,607.7 913.8,601.5 902.9,595.5 896.0,601.5" fill="#3c6f8e"/><polygon points="924.9,607.7 931.6,601.5 920.5,595.5 913.8,601.5" fill="#3c6d91"/><polygon points="481.9,614.0 493.1,607.7 486.2,601.5 475.1,607.7" fill="#3c6297"/><polygon points="500.1,614.0 511.1,607.7 504.0,601.5 493.1,607.7" fill="#527286"/><polygon points="518.2,614.0 529.1,607.7 521.8,601.5 511.1,607.7" fill="#37598e"/><polygon points="536.4,614.0 547.0,607.7 539.7,601.5 529.1,607.7" fill="#395d91"/><polygon points="554.6,614.0 565.0,607.7 557.5,601.5 547.0,607.7" fill="#3a5e93"/><polygon points="572.8,614.0 583.0,607.7 575.3,601.5 565.0,607.7" fill="#36588c"/><polygon points="590.9,614.0 601.0,607.7 593.1,601.5 583.0,607.7" fill="#395d92"/><polygon points="609.1,614.0 619.0,607.7 610.9,601.5 601.0,607.7" fill="#3b6196"/><polygon points="627.3,614.0 637.0,607.7 628.7,601.5 619.0,607.7" fill="#36598d"/><polygon points="645.5,614.0 655.0,607.7 646.6,601.5 637.0,607.7" fill="#385c90"/><polygon points="663.6,614.0 673.0,607.7 664.4,601.5 655.0,607.7" fill="#395d92"/><polygon points="681.8,614.0 691.0,607.7 682.2,601.5 673.0,607.7" fill="#3a5f94"/><polygon points="700.0,614.0 709.0,607.7 700.0,601.5 691.0,607.7" fill="#385b8f"/><polygon points="718.2,614.0 727.0,607.7 717.8,601.5 709.0,607.7" fill="#35578b"/><polygon points="736.4,614.0 745.0,607.7 735.6,601.5 727.0,607.7" fill="#395d91"/><polygon points="754.5,614.0 763.0,607.7 753.4,601.5 745.0,607.7" fill="#3c6297"/><polygon points="772.7,614.0 781.0,607.7 771.3,601.5 763.0,607.7" fill="#375a8f"/><polygon points="790.9,614.0 799.0,607.7 789.1,601.5 781.0,607.7" fill="#385b8f"/><polygon points="809.1,614.0 817.0,607.7 806.9,601.5 799.0,607.7" fill="#3a5e93"/><polygon points="827.2,614.0 835.0,607.7 824.7,601.5 817.0,607.7" fill="#3a6590"/><polygon points="845.4,614.0 853.0,607.7 842.5,601.5 835.0,607.7" fill="#3d7093"/><polygon points="863.6,614.0 870.9,607.7 860.3,601.5 853.0,607.7" fill="#3b6f8e"/><polygon points="881.8,614.0 888.9,607.7 878.2,601.5 870.9,607.7" fill="#3d7390"/><polygon points="899.9,614.0 906.9,607.7 896.0,601.5 888.9,607.7" fill="#407895"/><polygon points="918.1,614.0 924.9,607.7 913.8,601.5 906.9,607.7" fill="#417899"/><polygon points="488.8,620.4 500.1,614.0 493.1,607.7 481.9,614.0" fill="#3d6398"/><polygon points="507.2,620.4 518.2,614.0 511.1,607.7 500.1,614.0" fill="#395d92"/><polygon points="525.6,620.4 536.4,614.0 529.1,607.7 518.2,614.0" fill="#385b90"/><polygon points="543.9,620.4 554.6,614.0 547.0,607.7 536.4,614.0" fill="#537488"/><polygon points="562.3,620.4 572.8,614.0 565.0,607.7 554.6,614.0" fill="#395e93"/><polygon points="580.6,620.4 590.9,614.0 583.0,607.7 572.8,614.0" fill="#3c6297"/><polygon points="599.0,620.4 609.1,614.0 601.0,607.7 590.9,614.0" fill="#395d92"/><polygon points="617.4,620.4 627.3,614.0 619.0,607.7 609.1,614.0" fill="#345588"/><polygon points="635.7,620.4 645.5,614.0 637.0,607.7 627.3,614.0" fill="#3a5f94"/><polygon points="654.1,620.4 663.6,614.0 655.0,607.7 645.5,614.0" fill="#3b6095"/><polygon points="672.5,620.4 681.8,614.0 673.0,607.7 663.6,614.0" fill="#395e93"/><polygon points="690.8,620.4 700.0,614.0 691.0,607.7 681.8,614.0" fill="#3b6095"/><polygon points="709.2,620.4 718.2,614.0 709.0,607.7 700.0,614.0" fill="#395e93"/><polygon points="727.5,620.4 736.4,614.0 727.0,607.7 718.2,614.0" fill="#3b6196"/><polygon points="745.9,620.4 754.5,614.0 745.0,607.7 736.4,614.0" fill="#3b6096"/><polygon points="764.3,620.4 772.7,614.0 763.0,607.7 754.5,614.0" fill="#3d6399"/><polygon points="782.6,620.4 790.9,614.0 781.0,607.7 772.7,614.0" fill="#385b90"/><polygon points="801.0,620.4 809.1,614.0 799.0,607.7 790.9,614.0" fill="#3a5e93"/><polygon points="819.4,620.4 827.2,614.0 817.0,607.7 809.1,614.0" fill="#3c6795"/><polygon points="837.7,620.4 845.4,614.0 835.0,607.7 827.2,614.0" fill="#376589"/><polygon points="856.1,620.4 863.6,614.0 853.0,607.7 845.4,614.0" fill="#3d7190"/><polygon points="874.4,620.4 881.8,614.0 870.9,607.7 863.6,614.0" fill="#3f7793"/><polygon points="892.8,620.4 899.9,614.0 888.9,607.7 881.8,614.0" fill="#3d748f"/><polygon points="911.2,620.4 918.1,614.0 906.9,607.7 899.9,614.0" fill="#3d7290"/><polygon points="477.4,626.9 488.8,620.4 481.9,614.0 470.5,620.4" fill="#3b6095"/><polygon points="495.9,626.9 507.2,620.4 500.1,614.0 488.8,620.4" fill="#395d92"/><polygon points="514.5,626.9 525.6,620.4 518.2,614.0 507.2,620.4" fill="#3a5f94"/><polygon points="533.0,626.9 543.9,620.4 536.4,614.0 525.6,620.4" fill="#395d92"/><polygon points="551.6,626.9 562.3,620.4 554.6,614.0 543.9,620.4" fill="#3b6197"/><polygon points="570.1,626.9 580.6,620.4 572.8,614.0 562.3,620.4" fill="#3a5e93"/><polygon points="588.7,626.9 599.0,620.4 590.9,614.0 580.6,620.4" fill="#3e659b"/><polygon points="607.2,626.9 617.4,620.4 609.1,614.0 599.0,620.4" fill="#3b6095"/><polygon points="625.8,626.9 635.7,620.4 627.3,614.0 617.4,620.4" fill="#3f669c"/><polygon points="644.3,626.9 654.1,620.4 645.5,614.0 635.7,620.4" fill="#3b6096"/><polygon points="662.9,626.9 672.5,620.4 663.6,614.0 654.1,620.4" fill="#3b6095"/><polygon points="681.4,626.9 690.8,620.4 681.8,614.0 672.5,620.4" fill="#3b6196"/><polygon points="700.0,626.9 709.2,620.4 700.0,614.0 690.8,620.4" fill="#3a5e94"/><polygon points="718.6,626.9 727.5,620.4 718.2,614.0 709.2,620.4" fill="#3a5f94"/><polygon points="737.1,626.9 745.9,620.4 736.4,614.0 727.5,620.4" fill="#385b90"/><polygon points="755.7,626.9 764.3,620.4 754.5,614.0 745.9,620.4" fill="#3c6297"/><polygon points="774.2,626.9 782.6,620.4 772.7,614.0 764.3,620.4" fill="#385b90"/><polygon points="792.8,626.9 801.0,620.4 790.9,614.0 782.6,620.4" fill="#3a5e93"/><polygon points="811.3,626.9 819.4,620.4 809.1,614.0 801.0,620.4" fill="#396091"/><polygon points="829.9,626.9 837.7,620.4 827.2,614.0 819.4,620.4" fill="#3d6c94"/><polygon points="848.4,626.9 856.1,620.4 845.4,614.0 837.7,620.4" fill="#3e7293"/><polygon points="867.0,626.9 874.4,620.4 863.6,614.0 856.1,620.4" fill="#3a6f8a"/><polygon points="885.5,626.9 892.8,620.4 881.8,614.0 874.4,620.4" fill="#3d758f"/><polygon points="904.1,626.9 911.2,620.4 899.9,614.0 892.8,620.4" fill="#407995"/><polygon points="922.6,626.9 929.5,620.4 918.1,614.0 911.2,620.4" fill="#3a6c8b"/><polygon points="484.4,633.5 495.9,626.9 488.8,620.4 477.4,626.9" fill="#3b6197"/><polygon points="503.2,633.5 514.5,626.9 507.2,620.4 495.9,626.9" fill="#375a90"/><polygon points="521.9,633.5 533.0,626.9 525.6,620.4 514.5,626.9" fill="#3a5f95"/><polygon points="540.7,633.5 551.6,626.9 543.9,620.4 533.0,626.9" fill="#3c6298"/><polygon points="559.4,633.5 570.1,626.9 562.3,620.4 551.6,626.9" fill="#385b90"/><polygon points="578.2,633.5 588.7,626.9 580.6,620.4 570.1,626.9" fill="#35578b"/><polygon points="596.9,633.5 607.2,626.9 599.0,620.4 588.7,626.9" fill="#385b91"/><polygon points="615.7,633.5 625.8,626.9 617.4,620.4 607.2,626.9" fill="#395d92"/><polygon points="634.4,633.5 644.3,626.9 635.7,620.4 625.8,626.9" fill="#3c6298"/><polygon points="653.1,633.5 662.9,626.9 654.1,620.4 644.3,626.9" fill="#395d92"/><polygon points="671.9,633.5 681.4,626.9 672.5,620.4 662.9,626.9" fill="#3a5f94"/><polygon points="690.6,633.5 700.0,626.9 690.8,620.4 681.4,626.9" fill="#3b6096"/><polygon points="709.4,633.5 718.6,626.9 709.2,620.4 700.0,626.9" fill="#3b6095"/><polygon points="728.1,633.5 737.1,626.9 727.5,620.4 718.6,626.9" fill="#3c6298"/><polygon points="746.9,633.5 755.7,626.9 745.9,620.4 737.1,626.9" fill="#3a5f95"/><polygon points="765.6,633.5 774.2,626.9 764.3,620.4 755.7,626.9" fill="#395e93"/><polygon points="784.3,633.5 792.8,626.9 782.6,620.4 774.2,626.9" fill="#3d649a"/><polygon points="803.1,633.5 811.3,626.9 801.0,620.4 792.8,626.9" fill="#3d6399"/><polygon points="821.8,633.5 829.9,626.9 819.4,620.4 811.3,626.9" fill="#3a6691"/><polygon points="840.6,633.5 848.4,626.9 837.7,620.4 829.9,626.9" fill="#396a8b"/><polygon points="859.3,633.5 867.0,626.9 856.1,620.4 848.4,626.9" fill="#3e7592"/><polygon points="878.1,633.5 885.5,626.9 874.4,620.4 867.0,626.9" fill="#3d768f"/><polygon points="896.8,633.5 904.1,626.9 892.8,620.4 885.5,626.9" fill="#3c748d"/><polygon points="915.6,633.5 922.6,626.9 911.2,620.4 904.1,626.9" fill="#407896"/><polygon points="472.7,640.3 484.4,633.5 477.4,626.9 465.7,633.5" fill="#3a5f94"/><polygon points="491.6,640.3 503.2,633.5 495.9,626.9 484.4,633.5" fill="#3a6095"/><polygon points="510.6,640.3 521.9,633.5 514.5,626.9 503.2,633.5" fill="#3a5e94"/><polygon points="529.5,640.3 540.7,633.5 533.0,626.9 521.9,633.5" fill="#3c6299"/><polygon points="548.5,640.3 559.4,633.5 551.6,626.9 540.7,633.5" fill="#3b6197"/><polygon points="567.4,640.3 578.2,633.5 570.1,626.9 559.4,633.5" fill="#375a8f"/><polygon points="586.4,640.3 596.9,633.5 588.7,626.9 578.2,633.5" fill="#385c91"/><polygon points="605.3,640.3 615.7,633.5 607.2,626.9 596.9,633.5" fill="#3b6196"/><polygon points="624.2,640.3 634.4,633.5 625.8,626.9 615.7,633.5" fill="#3b6096"/><polygon points="643.2,640.3 653.1,633.5 644.3,626.9 634.4,633.5" fill="#395d92"/><polygon points="662.1,640.3 671.9,633.5 662.9,626.9 653.1,633.5" fill="#3a5f95"/><polygon points="681.1,640.3 690.6,633.5 681.4,626.9 671.9,633.5" fill="#36588d"/><polygon points="700.0,640.3 709.4,633.5 700.0,626.9 690.6,633.5" fill="#3a5f95"/><polygon points="718.9,640.3 728.1,633.5 718.6,626.9 709.4,633.5" fill="#395e94"/><polygon points="737.9,640.3 746.9,633.5 737.1,626.9 728.1,633.5" fill="#3a5e94"/><polygon points="756.8,640.3 765.6,633.5 755.7,626.9 746.9,633.5" fill="#385c91"/><polygon points="775.8,640.3 784.3,633.5 774.2,626.9 765.6,633.5" fill="#3a5f95"/><polygon points="794.7,640.3 803.1,633.5 792.8,626.9 784.3,633.5" fill="#3c6298"/><polygon points="813.6,640.3 821.8,633.5 811.3,626.9 803.1,633.5" fill="#3e6a99"/><polygon points="832.6,640.3 840.6,633.5 829.9,626.9 821.8,633.5" fill="#3d6f94"/><polygon points="851.5,640.3 859.3,633.5 848.4,626.9 840.6,633.5" fill="#3e7593"/><polygon points="870.5,640.3 878.1,633.5 867.0,626.9 859.3,633.5" fill="#3b728b"/><polygon points="889.4,640.3 896.8,633.5 885.5,626.9 878.1,633.5" fill="#407b94"/><polygon points="908.4,640.3 915.6,633.5 904.1,626.9 896.8,633.5" fill="#407a95"/><polygon points="927.3,640.3 934.3,633.5 922.6,626.9 915.6,633.5" fill="#3f7696"/><polygon points="479.9,647.3 491.6,640.3 484.4,633.5 472.7,640.3" fill="#3f679e"/><polygon points="499.0,647.3 510.6,640.3 503.2,633.5 491.6,640.3" fill="#3a5f95"/><polygon points="518.1,647.3 529.5,640.3 521.9,633.5 510.6,640.3" fill="#3b6096"/><polygon points="537.3,647.3 548.5,640.3 540.7,633.5 529.5,640.3" fill="#3c6299"/><polygon points="556.4,647.3 567.4,640.3 559.4,633.5 548.5,640.3" fill="#3b6096"/><polygon points="575.6,647.3 586.4,640.3 578.2,633.5 567.4,640.3" fill="#3a5f95"/><polygon points="594.7,647.3 605.3,640.3 596.9,633.5 586.4,640.3" fill="#3c6299"/><polygon points="613.9,647.3 624.2,640.3 615.7,633.5 605.3,640.3" fill="#3c6399"/><polygon points="633.0,647.3 643.2,640.3 634.4,633.5 624.2,640.3" fill="#3f679e"/><polygon points="652.1,647.3 662.1,640.3 653.1,633.5 643.2,640.3" fill="#395e94"/><polygon points="671.3,647.3 681.1,640.3 671.9,633.5 662.1,640.3" fill="#375a8f"/><polygon points="690.4,647.3 700.0,640.3 690.6,633.5 681.1,640.3" fill="#3b6197"/><polygon points="709.6,647.3 718.9,640.3 709.4,633.5 700.0,640.3" fill="#385c91"/><polygon points="728.7,647.3 737.9,640.3 728.1,633.5 718.9,640.3" fill="#3e669c"/><polygon points="747.9,647.3 756.8,640.3 746.9,633.5 737.9,640.3" fill="#375a90"/><polygon points="767.0,647.3 775.8,640.3 765.6,633.5 756.8,640.3" fill="#3b6197"/><polygon points="786.1,647.3 794.7,640.3 784.3,633.5 775.8,640.3" fill="#395d93"/><polygon points="805.3,647.3 813.6,640.3 803.1,633.5 794.7,640.3" fill="#3d669a"/><polygon points="824.4,647.3 832.6,640.3 821.8,633.5 813.6,640.3" fill="#3c6b94"/><polygon points="843.6,647.3 851.5,640.3 840.6,633.5 832.6,640.3" fill="#3e7495"/><polygon points="862.7,647.3 870.5,640.3 859.3,633.5 851.5,640.3" fill="#3e7792"/><polygon points="881.9,647.3 889.4,640.3 878.1,633.5 870.5,640.3" fill="#3d7790"/><polygon points="901.0,647.3 908.4,640.3 896.8,633.5 889.4,640.3" fill="#407c96"/><polygon points="920.1,647.3 927.3,640.3 915.6,633.5 908.4,640.3" fill="#3e7694"/><polygon points="487.2,654.4 499.0,647.3 491.6,640.3 479.9,647.3" fill="#3a5f95"/><polygon points="506.5,654.4 518.1,647.3 510.6,640.3 499.0,647.3" fill="#3c6299"/><polygon points="525.9,654.4 537.3,647.3 529.5,640.3 518.1,647.3" fill="#385c92"/><polygon points="545.2,654.4 556.4,647.3 548.5,640.3 537.3,647.3" fill="#3c6299"/><polygon points="564.6,654.4 575.6,647.3 567.4,640.3 556.4,647.3" fill="#395d93"/><polygon points="583.9,654.4 594.7,647.3 586.4,640.3 575.6,647.3" fill="#3d649b"/><polygon points="603.3,654.4 613.9,647.3 605.3,640.3 594.7,647.3" fill="#3a6096"/><polygon points="622.6,654.4 633.0,647.3 624.2,640.3 613.9,647.3" fill="#395d93"/><polygon points="642.0,654.4 652.1,647.3 643.2,640.3 633.0,647.3" fill="#4069a1"/><polygon points="661.3,654.4 671.3,647.3 662.1,640.3 652.1,647.3" fill="#3c6198"/><polygon points="680.7,654.4 690.4,647.3 681.1,640.3 671.3,647.3" fill="#3a5f96"/><polygon points="700.0,654.4 709.6,647.3 700.0,640.3 690.4,647.3" fill="#3c6399"/><polygon points="719.3,654.4 728.7,647.3 718.9,640.3 709.6,647.3" fill="#3c6298"/><polygon points="738.7,654.4 747.9,647.3 737.9,640.3 728.7,647.3" fill="#3b6198"/><polygon points="758.0,654.4 767.0,647.3 756.8,640.3 747.9,647.3" fill="#3c6299"/><polygon points="777.4,654.4 786.1,647.3 775.8,640.3 767.0,647.3" fill="#3b6197"/><polygon points="796.7,654.4 805.3,647.3 794.7,640.3 786.1,647.3" fill="#3b6197"/><polygon points="816.1,654.4 824.4,647.3 813.6,640.3 805.3,647.3" fill="#3f6d9b"/><polygon points="835.4,654.4 843.6,647.3 832.6,640.3 824.4,647.3" fill="#3e7195"/><polygon points="854.8,654.4 862.7,647.3 851.5,640.3 843.6,647.3" fill="#3e7693"/><polygon points="874.1,654.4 881.9,647.3 870.5,640.3 862.7,647.3" fill="#3f7a94"/><polygon points="893.5,654.4 901.0,647.3 889.4,640.3 881.9,647.3" fill="#407d96"/><polygon points="912.8,654.4 920.1,647.3 908.4,640.3 901.0,647.3" fill="#3f7994"/><polygon points="475.1,661.6 487.2,654.4 479.9,647.3 467.8,654.4" fill="#3c639a"/><polygon points="494.6,661.6 506.5,654.4 499.0,647.3 487.2,654.4" fill="#3f679e"/><polygon points="514.2,661.6 525.9,654.4 518.1,647.3 506.5,654.4" fill="#3b6197"/><polygon points="533.7,661.6 545.2,654.4 537.3,647.3 525.9,654.4" fill="#3e659c"/><polygon points="553.3,661.6 564.6,654.4 556.4,647.3 545.2,654.4" fill="#3c6299"/><polygon points="572.9,661.6 583.9,654.4 575.6,647.3 564.6,654.4" fill="#3c6299"/><polygon points="592.4,661.6 603.3,654.4 594.7,647.3 583.9,654.4" fill="#4069a0"/><polygon points="612.0,661.6 622.6,654.4 613.9,647.3 603.3,654.4" fill="#3c639a"/><polygon points="631.5,661.6 642.0,654.4 633.0,647.3 622.6,654.4" fill="#416aa2"/><polygon points="651.1,661.6 661.3,654.4 652.1,647.3 642.0,654.4" fill="#3b6198"/><polygon points="670.7,661.6 680.7,654.4 671.3,647.3 661.3,654.4" fill="#3f689f"/><polygon points="690.2,661.6 700.0,654.4 690.4,647.3 680.7,654.4" fill="#3f679e"/><polygon points="709.8,661.6 719.3,654.4 709.6,647.3 700.0,654.4" fill="#3e659c"/><polygon points="729.3,661.6 738.7,654.4 728.7,647.3 719.3,654.4" fill="#3c6299"/><polygon points="748.9,661.6 758.0,654.4 747.9,647.3 738.7,654.4" fill="#3a6096"/><polygon points="768.5,661.6 777.4,654.4 767.0,647.3 758.0,654.4" fill="#3c6299"/><polygon points="788.0,661.6 796.7,654.4 786.1,647.3 777.4,654.4" fill="#3c6298"/><polygon points="807.6,661.6 816.1,654.4 805.3,647.3 796.7,654.4" fill="#3d679a"/><polygon points="827.1,661.6 835.4,654.4 824.4,647.3 816.1,654.4" fill="#3e6f97"/><polygon points="846.7,661.6 854.8,654.4 843.6,647.3 835.4,654.4" fill="#3f7796"/><polygon points="866.3,661.6 874.1,654.4 862.7,647.3 854.8,654.4" fill="#3e7993"/><polygon points="885.8,661.6 893.5,654.4 881.9,647.3 874.1,654.4" fill="#427f98"/><polygon points="905.4,661.6 912.8,654.4 901.0,647.3 893.5,654.4" fill="#407b96"/><polygon points="924.9,661.6 932.2,654.4 920.1,647.3 912.8,654.4" fill="#417998"/><polygon points="482.5,669.1 494.6,661.6 487.2,654.4 475.1,661.6" fill="#3c639a"/><polygon points="502.3,669.1 514.2,661.6 506.5,654.4 494.6,661.6" fill="#426ca4"/><polygon points="522.0,669.1 533.7,661.6 525.9,654.4 514.2,661.6" fill="#3a5f96"/><polygon points="541.8,669.1 553.3,661.6 545.2,654.4 533.7,661.6" fill="#3b6098"/><polygon points="561.6,669.1 572.9,661.6 564.6,654.4 553.3,661.6" fill="#3d649b"/><polygon points="581.4,669.1 592.4,661.6 583.9,654.4 572.9,661.6" fill="#395e95"/><polygon points="601.1,669.1 612.0,661.6 603.3,654.4 592.4,661.6" fill="#3c639a"/><polygon points="620.9,669.1 631.5,661.6 622.6,654.4 612.0,661.6" fill="#3c639a"/><polygon points="640.7,669.1 651.1,661.6 642.0,654.4 631.5,661.6" fill="#3d649c"/><polygon points="660.5,669.1 670.7,661.6 661.3,654.4 651.1,661.6" fill="#3e659c"/><polygon points="680.2,669.1 690.2,661.6 680.7,654.4 670.7,661.6" fill="#3c629a"/><polygon points="700.0,669.1 709.8,661.6 700.0,654.4 690.2,661.6" fill="#3e669d"/><polygon points="719.8,669.1 729.3,661.6 719.3,654.4 709.8,661.6" fill="#3c6299"/><polygon points="739.5,669.1 748.9,661.6 738.7,654.4 729.3,661.6" fill="#55778d"/><polygon points="759.3,669.1 768.5,661.6 758.0,654.4 748.9,661.6" fill="#3e669e"/><polygon points="779.1,669.1 788.0,661.6 777.4,654.4 768.5,661.6" fill="#3a5f96"/><polygon points="798.9,669.1 807.6,661.6 796.7,654.4 788.0,661.6" fill="#395e95"/><polygon points="818.6,669.1 827.1,661.6 816.1,654.4 807.6,661.6" fill="#3c6a96"/><polygon points="838.4,669.1 846.7,661.6 835.4,654.4 827.1,661.6" fill="#42799c"/><polygon points="858.2,669.1 866.3,661.6 854.8,654.4 846.7,661.6" fill="#407a97"/><polygon points="878.0,669.1 885.8,661.6 874.1,654.4 866.3,661.6" fill="#417e98"/><polygon points="897.7,669.1 905.4,661.6 893.5,654.4 885.8,661.6" fill="#407d97"/><polygon points="917.5,669.1 924.9,661.6 912.8,654.4 905.4,661.6" fill="#407a98"/><polygon points="490.1,676.6 502.3,669.1 494.6,661.6 482.5,669.1" fill="#3c629a"/><polygon points="510.1,676.6 522.0,669.1 514.2,661.6 502.3,669.1" fill="#416aa3"/><polygon points="530.1,676.6 541.8,669.1 533.7,661.6 522.0,669.1" fill="#3d649c"/><polygon points="550.0,676.6 561.6,669.1 553.3,661.6 541.8,669.1" fill="#3c639b"/><polygon points="570.0,676.6 581.4,669.1 572.9,661.6 561.6,669.1" fill="#3c639a"/><polygon points="590.0,676.6 601.1,669.1 592.4,661.6 581.4,669.1" fill="#3d649c"/><polygon points="610.0,676.6 620.9,669.1 612.0,661.6 601.1,669.1" fill="#3e669e"/><polygon points="630.0,676.6 640.7,669.1 631.5,661.6 620.9,669.1" fill="#3f679f"/><polygon points="650.0,676.6 660.5,669.1 651.1,661.6 640.7,669.1" fill="#3e669e"/><polygon points="670.0,676.6 680.2,669.1 670.7,661.6 660.5,669.1" fill="#3d649c"/><polygon points="690.0,676.6 700.0,669.1 690.2,661.6 680.2,669.1" fill="#3b6199"/><polygon points="710.0,676.6 719.8,669.1 709.8,661.6 700.0,669.1" fill="#3d649b"/><polygon points="730.0,676.6 739.5,669.1 729.3,661.6 719.8,669.1" fill="#395e95"/><polygon points="750.0,676.6 759.3,669.1 748.9,661.6 739.5,669.1" fill="#3d649b"/><polygon points="770.0,676.6 779.1,669.1 768.5,661.6 759.3,669.1" fill="#3d659c"/><polygon points="790.0,676.6 798.9,669.1 788.0,661.6 779.1,669.1" fill="#3e659d"/><polygon points="810.0,676.6 818.6,669.1 807.6,661.6 798.9,669.1" fill="#406c9e"/><polygon points="830.0,676.6 838.4,669.1 827.1,661.6 818.6,669.1" fill="#3c6c93"/><polygon points="850.0,676.6 858.2,669.1 846.7,661.6 838.4,669.1" fill="#417a9a"/><polygon points="869.9,676.6 878.0,669.1 866.3,661.6 858.2,669.1" fill="#407b97"/><polygon points="889.9,676.6 897.7,669.1 885.8,661.6 878.0,669.1" fill="#407c96"/><polygon points="909.9,676.6 917.5,669.1 905.4,661.6 897.7,669.1" fill="#3f7a96"/><polygon points="477.6,684.4 490.1,676.6 482.5,669.1 470.1,676.6" fill="#3c639b"/><polygon points="497.8,684.4 510.1,676.6 502.3,669.1 490.1,676.6" fill="#3d639b"/><polygon points="518.0,684.4 530.1,676.6 522.0,669.1 510.1,676.6" fill="#3c639b"/><polygon points="538.3,684.4 550.0,676.6 541.8,669.1 530.1,676.6" fill="#3c629a"/><polygon points="558.5,684.4 570.0,676.6 561.6,669.1 550.0,676.6" fill="#3c639b"/><polygon points="578.7,684.4 590.0,676.6 581.4,669.1 570.0,676.6" fill="#3b6398"/><polygon points="598.9,684.4 610.0,676.6 601.1,669.1 590.0,676.6" fill="#3e689d"/><polygon points="619.1,684.4 630.0,676.6 620.9,669.1 610.0,676.6" fill="#3e689d"/><polygon points="639.3,684.4 650.0,676.6 640.7,669.1 630.0,676.6" fill="#3d679c"/><polygon points="659.6,684.4 670.0,676.6 660.5,669.1 650.0,676.6" fill="#3e679d"/><polygon points="679.8,684.4 690.0,676.6 680.2,669.1 670.0,676.6" fill="#3d649c"/><polygon points="700.0,684.4 710.0,676.6 700.0,669.1 690.0,676.6" fill="#3e669e"/><polygon points="720.2,684.4 730.0,676.6 719.8,669.1 710.0,676.6" fill="#3b6199"/><polygon points="740.4,684.4 750.0,676.6 739.5,669.1 730.0,676.6" fill="#395d95"/><polygon points="760.7,684.4 770.0,676.6 759.3,669.1 750.0,676.6" fill="#3c629a"/><polygon points="780.9,684.4 790.0,676.6 779.1,669.1 770.0,676.6" fill="#3f68a1"/><polygon points="801.1,684.4 810.0,676.6 798.9,669.1 790.0,676.6" fill="#3f67a0"/><polygon points="821.3,684.4 830.0,676.6 818.6,669.1 810.0,676.6" fill="#3e6e9b"/><polygon points="841.5,684.4 850.0,676.6 838.4,669.1 830.0,676.6" fill="#4883a8"/><polygon points="861.7,684.4 869.9,676.6 858.2,669.1 850.0,676.6" fill="#3f7997"/><polygon points="882.0,684.4 889.9,676.6 878.0,669.1 869.9,676.6" fill="#407c97"/><polygon points="902.2,684.4 909.9,676.6 897.7,669.1 889.9,676.6" fill="#407c98"/><polygon points="922.4,684.4 929.9,676.6 917.5,669.1 909.9,676.6" fill="#3d7494"/><polygon points="485.3,692.3 497.8,684.4 490.1,676.6 477.6,684.4" fill="#3d659d"/><polygon points="505.7,692.3 518.0,684.4 510.1,676.6 497.8,684.4" fill="#385c94"/><polygon points="526.2,692.3 538.3,684.4 530.1,676.6 518.0,684.4" fill="#3d649c"/><polygon points="546.6,692.3 558.5,684.4 550.0,676.6 538.3,684.4" fill="#3d669b"/><polygon points="567.1,692.3 578.7,684.4 570.0,676.6 558.5,684.4" fill="#3d679b"/><polygon points="587.5,692.3 598.9,684.4 590.0,676.6 578.7,684.4" fill="#3f6c9e"/><polygon points="608.0,692.3 619.1,684.4 610.0,676.6 598.9,684.4" fill="#3f6d9e"/><polygon points="628.4,692.3 639.3,684.4 630.0,676.6 619.1,684.4" fill="#3e6a9b"/><polygon points="648.9,692.3 659.6,684.4 650.0,676.6 639.3,684.4" fill="#3e699b"/><polygon points="669.3,692.3 679.8,684.4 670.0,676.6 659.6,684.4" fill="#406c9f"/><polygon points="689.8,692.3 700.0,684.4 690.0,676.6 679.8,684.4" fill="#3e689d"/><polygon points="710.2,692.3 720.2,684.4 710.0,676.6 700.0,684.4" fill="#3d649c"/><polygon points="730.7,692.3 740.4,684.4 730.0,676.6 720.2,684.4" fill="#3b6199"/><polygon points="751.1,692.3 760.7,684.4 750.0,676.6 740.4,684.4" fill="#3e669e"/><polygon points="771.6,692.3 780.9,684.4 770.0,676.6 760.7,684.4" fill="#3f67a0"/><polygon points="792.0,692.3 801.1,684.4 790.0,676.6 780.9,684.4" fill="#3d649c"/><polygon points="812.5,692.3 821.3,684.4 810.0,676.6 801.1,684.4" fill="#3d689a"/><polygon points="832.9,692.3 841.5,684.4 830.0,676.6 821.3,684.4" fill="#40739c"/><polygon points="853.4,692.3 861.7,684.4 850.0,676.6 841.5,684.4" fill="#407899"/><polygon points="873.8,692.3 882.0,684.4 869.9,676.6 861.7,684.4" fill="#427d9b"/><polygon points="894.3,692.3 902.2,684.4 889.9,676.6 882.0,684.4" fill="#417d9a"/><polygon points="914.7,692.3 922.4,684.4 909.9,676.6 902.2,684.4" fill="#3e7696"/><polygon points="472.5,700.4 485.3,692.3 477.6,684.4 464.9,692.3" fill="#3b6199"/><polygon points="493.2,700.4 505.7,692.3 497.8,684.4 485.3,692.3" fill="#3c629b"/><polygon points="513.9,700.4 526.2,692.3 518.0,684.4 505.7,692.3" fill="#3f689f"/><polygon points="534.5,700.4 546.6,692.3 538.3,684.4 526.2,692.3" fill="#3a6295"/><polygon points="555.2,700.4 567.1,692.3 558.5,684.4 546.6,692.3" fill="#3f6c9e"/><polygon points="575.9,700.4 587.5,692.3 578.7,684.4 567.1,692.3" fill="#3e6c9c"/><polygon points="596.6,700.4 608.0,692.3 598.9,684.4 587.5,692.3" fill="#3f6e9d"/><polygon points="617.3,700.4 628.4,692.3 619.1,684.4 608.0,692.3" fill="#3c6a98"/><polygon points="638.0,700.4 648.9,692.3 639.3,684.4 628.4,692.3" fill="#3b6795"/><polygon points="658.6,700.4 669.3,692.3 659.6,684.4 648.9,692.3" fill="#3d6a9a"/><polygon points="679.3,700.4 689.8,692.3 679.8,684.4 669.3,692.3" fill="#3d699b"/><polygon points="700.0,700.4 710.2,692.3 700.0,684.4 689.8,692.3" fill="#406da1"/><polygon points="720.7,700.4 730.7,692.3 720.2,684.4 710.2,692.3" fill="#3e679e"/><polygon points="741.4,700.4 751.1,692.3 740.4,684.4 730.7,692.3" fill="#416ba4"/><polygon points="762.0,700.4 771.6,692.3 760.7,684.4 751.1,692.3" fill="#3d649c"/><polygon points="782.7,700.4 792.0,692.3 780.9,684.4 771.6,692.3" fill="#3e669f"/><polygon points="803.4,700.4 812.5,692.3 801.1,684.4 792.0,692.3" fill="#3d639c"/><polygon points="824.1,700.4 832.9,692.3 821.3,684.4 812.5,692.3" fill="#3f6e9d"/><polygon points="844.8,700.4 853.4,692.3 841.5,684.4 832.9,692.3" fill="#40759a"/><polygon points="865.5,700.4 873.8,692.3 861.7,684.4 853.4,692.3" fill="#437e9f"/><polygon points="886.1,700.4 894.3,692.3 882.0,684.4 873.8,692.3" fill="#427d9c"/><polygon points="906.8,700.4 914.7,692.3 902.2,684.4 894.3,692.3" fill="#417b9b"/><polygon points="927.5,700.4 935.1,692.3 922.4,684.4 914.7,692.3" fill="#41779c"/><polygon points="480.3,708.7 493.2,700.4 485.3,692.3 472.5,700.4" fill="#406aa3"/><polygon points="501.2,708.7 513.9,700.4 505.7,692.3 493.2,700.4" fill="#3f69a0"/><polygon points="522.2,708.7 534.5,700.4 526.2,692.3 513.9,700.4" fill="#416fa3"/><polygon points="543.1,708.7 555.2,700.4 546.6,692.3 534.5,700.4" fill="#567c8f"/><polygon points="564.0,708.7 575.9,700.4 567.1,692.3 555.2,700.4" fill="#406f9e"/><polygon points="584.9,708.7 596.6,700.4 587.5,692.3 575.9,700.4" fill="#3d6c99"/><polygon points="605.8,708.7 617.3,700.4 608.0,692.3 596.6,700.4" fill="#4173a0"/><polygon points="626.8,708.7 638.0,700.4 628.4,692.3 617.3,700.4" fill="#40719d"/><polygon points="647.7,708.7 658.6,700.4 648.9,692.3 638.0,700.4" fill="#3e6e9b"/><polygon points="668.6,708.7 679.3,700.4 669.3,692.3 658.6,700.4" fill="#3e6d9b"/><polygon points="689.5,708.7 700.0,700.4 689.8,692.3 679.3,700.4" fill="#406f9f"/><polygon points="710.5,708.7 720.7,700.4 710.2,692.3 700.0,700.4" fill="#3f6c9f"/><polygon points="731.4,708.7 741.4,700.4 730.7,692.3 720.7,700.4" fill="#3e689e"/><polygon points="752.3,708.7 762.0,700.4 751.1,692.3 741.4,700.4" fill="#3f68a1"/><polygon points="773.2,708.7 782.7,700.4 771.6,692.3 762.0,700.4" fill="#3f67a0"/><polygon points="794.2,708.7 803.4,700.4 792.0,692.3 782.7,700.4" fill="#4069a3"/><polygon points="815.1,708.7 824.1,700.4 812.5,692.3 803.4,700.4" fill="#426ea4"/><polygon points="836.0,708.7 844.8,700.4 832.9,692.3 824.1,700.4" fill="#40739e"/><polygon points="856.9,708.7 865.5,700.4 853.4,692.3 844.8,700.4" fill="#427a9e"/><polygon points="877.8,708.7 886.1,700.4 873.8,692.3 865.5,700.4" fill="#3f7797"/><polygon points="898.8,708.7 906.8,700.4 894.3,692.3 886.1,700.4" fill="#40799a"/><polygon points="919.7,708.7 927.5,700.4 914.7,692.3 906.8,700.4" fill="#447ea3"/><polygon points="530.6,717.2 543.1,708.7 534.5,700.4 522.2,708.7" fill="#4171a2"/><polygon points="594.2,717.2 605.8,708.7 596.6,700.4 584.9,708.7" fill="#3e6f99"/><polygon points="805.8,717.2 815.1,708.7 803.4,700.4 794.2,708.7" fill="#3f6ba0"/><polygon points="869.4,717.2 877.8,708.7 865.5,700.4 856.9,708.7" fill="#427a9e"/><polygon points="488.3,717.2 501.2,708.7 493.2,700.4 480.3,708.7" fill="#3f69a1"/><polygon points="509.5,717.2 522.2,708.7 513.9,700.4 501.2,708.7" fill="#406da1"/><polygon points="551.8,717.2 564.0,708.7 555.2,700.4 543.1,708.7" fill="#467aa9"/><polygon points="573.0,717.2 584.9,708.7 575.9,700.4 564.0,708.7" fill="#40739f"/><polygon points="615.3,717.2 626.8,708.7 617.3,700.4 605.8,708.7" fill="#4276a0"/><polygon points="636.5,717.2 647.7,708.7 638.0,700.4 626.8,708.7" fill="#41749f"/><polygon points="657.7,717.2 668.6,708.7 658.6,700.4 647.7,708.7" fill="#4377a3"/><polygon points="678.8,717.2 689.5,708.7 679.3,700.4 668.6,708.7" fill="#4376a4"/><polygon points="700.0,717.2 710.5,708.7 700.0,700.4 689.5,708.7" fill="#3d6b9a"/><polygon points="721.2,717.2 731.4,708.7 720.7,700.4 710.5,708.7" fill="#4475a9"/><polygon points="742.3,717.2 752.3,708.7 741.4,700.4 731.4,708.7" fill="#3e689e"/><polygon points="763.5,717.2 773.2,708.7 762.0,700.4 752.3,708.7" fill="#416da2"/><polygon points="784.7,717.2 794.2,708.7 782.7,700.4 773.2,708.7" fill="#3c669a"/><polygon points="827.0,717.2 836.0,708.7 824.1,700.4 815.1,708.7" fill="#3e6c9d"/><polygon points="848.2,717.2 856.9,708.7 844.8,700.4 836.0,708.7" fill="#40749d"/><polygon points="890.5,717.2 898.8,708.7 886.1,700.4 877.8,708.7" fill="#3e7497"/><polygon points="911.7,717.2 919.7,708.7 906.8,700.4 898.8,708.7" fill="#41779c"/><polygon points="475.1,725.9 488.3,717.2 480.3,708.7 467.1,717.2" fill="#4069a3"/><polygon points="496.5,725.9 509.5,717.2 501.2,708.7 488.3,717.2" fill="#4472a8"/><polygon points="517.9,725.9 530.6,717.2 522.2,708.7 509.5,717.2" fill="#406fa0"/><polygon points="539.3,725.9 551.8,717.2 543.1,708.7 530.6,717.2" fill="#3e6e9c"/><polygon points="560.8,725.9 573.0,717.2 564.0,708.7 551.8,717.2" fill="#40739e"/><polygon points="582.2,725.9 594.2,717.2 584.9,708.7 573.0,717.2" fill="#4175a0"/><polygon points="603.6,725.9 615.3,717.2 605.8,708.7 594.2,717.2" fill="#3f729b"/><polygon points="625.0,725.9 636.5,717.2 626.8,708.7 615.3,717.2" fill="#40759e"/><polygon points="646.4,725.9 657.7,717.2 647.7,708.7 636.5,717.2" fill="#4379a3"/><polygon points="667.9,725.9 678.8,717.2 668.6,708.7 657.7,717.2" fill="#4276a2"/><polygon points="689.3,725.9 700.0,717.2 689.5,708.7 678.8,717.2" fill="#4173a0"/><polygon points="710.7,725.9 721.2,717.2 710.5,708.7 700.0,717.2" fill="#4070a0"/><polygon points="732.1,725.9 742.3,717.2 731.4,708.7 721.2,717.2" fill="#3f6c9f"/><polygon points="753.6,725.9 763.5,717.2 752.3,708.7 742.3,717.2" fill="#406fa1"/><polygon points="775.0,725.9 784.7,717.2 773.2,708.7 763.5,717.2" fill="#4070a1"/><polygon points="796.4,725.9 805.8,717.2 794.2,708.7 784.7,717.2" fill="#4171a2"/><polygon points="817.8,725.9 827.0,717.2 815.1,708.7 805.8,717.2" fill="#4577ab"/><polygon points="839.2,725.9 848.2,717.2 836.0,708.7 827.0,717.2" fill="#4172a1"/><polygon points="860.7,725.9 869.4,717.2 856.9,708.7 848.2,717.2" fill="#447ba3"/><polygon points="882.1,725.9 890.5,717.2 877.8,708.7 869.4,717.2" fill="#437ba1"/><polygon points="903.5,725.9 911.7,717.2 898.8,708.7 890.5,717.2" fill="#467fa6"/><polygon points="924.9,725.9 932.9,717.2 919.7,708.7 911.7,717.2" fill="#40729d"/><polygon points="483.2,734.8 496.5,725.9 488.3,717.2 475.1,725.9" fill="#3e689e"/><polygon points="504.9,734.8 517.9,725.9 509.5,717.2 496.5,725.9" fill="#4271a4"/><polygon points="526.6,734.8 539.3,725.9 530.6,717.2 517.9,725.9" fill="#467aaa"/><polygon points="548.2,734.8 560.8,725.9 551.8,717.2 539.3,725.9" fill="#4377a5"/><polygon points="569.9,734.8 582.2,725.9 573.0,717.2 560.8,725.9" fill="#4175a0"/><polygon points="591.6,734.8 603.6,725.9 594.2,717.2 582.2,725.9" fill="#4379a3"/><polygon points="613.3,734.8 625.0,725.9 615.3,717.2 603.6,725.9" fill="#4278a1"/><polygon points="635.0,734.8 646.4,725.9 636.5,717.2 625.0,725.9" fill="#447aa4"/><polygon points="656.6,734.8 667.9,725.9 657.7,717.2 646.4,725.9" fill="#4379a3"/><polygon points="678.3,734.8 689.3,725.9 678.8,717.2 667.9,725.9" fill="#40729e"/><polygon points="700.0,734.8 710.7,725.9 700.0,717.2 689.3,725.9" fill="#598293"/><polygon points="721.7,734.8 732.1,725.9 721.2,717.2 710.7,725.9" fill="#3c6898"/><polygon points="743.4,734.8 753.6,725.9 742.3,717.2 732.1,725.9" fill="#3e6c9b"/><polygon points="765.0,734.8 775.0,725.9 763.5,717.2 753.6,725.9" fill="#4275a3"/><polygon points="786.7,734.8 796.4,725.9 784.7,717.2 775.0,725.9" fill="#4376a5"/><polygon points="808.4,734.8 817.8,725.9 805.8,717.2 796.4,725.9" fill="#4579a9"/><polygon points="830.1,734.8 839.2,725.9 827.0,717.2 817.8,725.9" fill="#406fa0"/><polygon points="851.8,734.8 860.7,725.9 848.2,717.2 839.2,725.9" fill="#4275a3"/><polygon points="873.4,734.8 882.1,725.9 869.4,717.2 860.7,725.9" fill="#4176a0"/><polygon points="895.1,734.8 903.5,725.9 890.5,717.2 882.1,725.9" fill="#41759e"/><polygon points="916.8,734.8 924.9,725.9 911.7,717.2 903.5,725.9" fill="#4378a4"/><polygon points="491.5,743.9 504.9,734.8 496.5,725.9 483.2,734.8" fill="#416ea4"/><polygon points="513.5,743.9 526.6,734.8 517.9,725.9 504.9,734.8" fill="#3f6e9f"/><polygon points="535.4,743.9 548.2,734.8 539.3,725.9 526.6,734.8" fill="#4376a4"/><polygon points="557.4,743.9 569.9,734.8 560.8,725.9 548.2,734.8" fill="#3f719d"/><polygon points="579.3,743.9 591.6,734.8 582.2,725.9 569.9,734.8" fill="#447ba5"/><polygon points="601.3,743.9 613.3,734.8 603.6,725.9 591.6,734.8" fill="#4278a1"/><polygon points="623.2,743.9 635.0,734.8 625.0,725.9 613.3,734.8" fill="#40749d"/><polygon points="645.1,743.9 656.6,734.8 646.4,725.9 635.0,734.8" fill="#588392"/><polygon points="667.1,743.9 678.3,734.8 667.9,725.9 656.6,734.8" fill="#447aa5"/><polygon points="689.0,743.9 700.0,734.8 689.3,725.9 678.3,734.8" fill="#4175a2"/><polygon points="711.0,743.9 721.7,734.8 710.7,725.9 700.0,734.8" fill="#4173a2"/><polygon points="732.9,743.9 743.4,734.8 732.1,725.9 721.7,734.8" fill="#3f6e9d"/><polygon points="754.9,743.9 765.0,734.8 753.6,725.9 743.4,734.8" fill="#4479a7"/><polygon points="776.8,743.9 786.7,734.8 775.0,725.9 765.0,734.8" fill="#4276a2"/><polygon points="798.7,743.9 808.4,734.8 796.4,725.9 786.7,734.8" fill="#4174a1"/><polygon points="820.7,743.9 830.1,734.8 817.8,725.9 808.4,734.8" fill="#4275a3"/><polygon points="842.6,743.9 851.8,734.8 839.2,725.9 830.1,734.8" fill="#4272a3"/><polygon points="864.6,743.9 873.4,734.8 860.7,725.9 851.8,734.8" fill="#4478a7"/><polygon points="886.5,743.9 895.1,734.8 882.1,725.9 873.4,734.8" fill="#4377a4"/><polygon points="908.5,743.9 916.8,734.8 903.5,725.9 895.1,734.8" fill="#4173a1"/><polygon points="477.9,753.2 491.5,743.9 483.2,734.8 469.6,743.9" fill="#406ba4"/><polygon points="500.1,753.2 513.5,743.9 504.9,734.8 491.5,743.9" fill="#4271a5"/><polygon points="522.3,753.2 535.4,743.9 526.6,734.8 513.5,743.9" fill="#4273a4"/><polygon points="544.5,753.2 557.4,743.9 548.2,734.8 535.4,743.9" fill="#4377a5"/><polygon points="566.7,753.2 579.3,743.9 569.9,734.8 557.4,743.9" fill="#4176a1"/><polygon points="588.9,753.2 601.3,743.9 591.6,734.8 579.3,743.9" fill="#4278a2"/><polygon points="611.1,753.2 623.2,743.9 613.3,734.8 601.3,743.9" fill="#4278a1"/><polygon points="633.4,753.2 645.1,743.9 635.0,734.8 623.2,743.9" fill="#447ba5"/><polygon points="655.6,753.2 667.1,743.9 656.6,734.8 645.1,743.9" fill="#467da9"/><polygon points="677.8,753.2 689.0,743.9 678.3,734.8 667.1,743.9" fill="#447aa7"/><polygon points="700.0,753.2 711.0,743.9 700.0,734.8 689.0,743.9" fill="#467cab"/><polygon points="722.2,753.2 732.9,743.9 721.7,734.8 711.0,743.9" fill="#4173a3"/><polygon points="744.4,753.2 754.9,743.9 743.4,734.8 732.9,743.9" fill="#487fad"/><polygon points="766.6,753.2 776.8,743.9 765.0,734.8 754.9,743.9" fill="#457ba8"/><polygon points="788.9,753.2 798.7,743.9 786.7,734.8 776.8,743.9" fill="#40739f"/><polygon points="811.1,753.2 820.7,743.9 808.4,734.8 798.7,743.9" fill="#4479a6"/><polygon points="833.3,753.2 842.6,743.9 830.1,734.8 820.7,743.9" fill="#40709f"/><polygon points="855.5,753.2 864.6,743.9 851.8,734.8 842.6,743.9" fill="#406fa2"/><polygon points="877.7,753.2 886.5,743.9 873.4,734.8 864.6,743.9" fill="#4070a1"/><polygon points="899.9,753.2 908.5,743.9 895.1,734.8 886.5,743.9" fill="#4679ab"/><polygon points="922.1,753.2 930.4,743.9 916.8,734.8 908.5,743.9" fill="#416ea4"/><polygon points="486.3,762.8 500.1,753.2 491.5,743.9 477.9,753.2" fill="#4371aa"/><polygon points="508.8,762.8 522.3,753.2 513.5,743.9 500.1,753.2" fill="#4678ad"/><polygon points="531.3,762.8 544.5,753.2 535.4,743.9 522.3,753.2" fill="#4477a9"/><polygon points="553.8,762.8 566.7,753.2 557.4,743.9 544.5,753.2" fill="#457ba9"/><polygon points="576.3,762.8 588.9,753.2 579.3,743.9 566.7,753.2" fill="#4276a2"/><polygon points="621.3,762.8 633.4,753.2 623.2,743.9 611.1,753.2" fill="#4277a2"/><polygon points="643.8,762.8 655.6,753.2 645.1,743.9 633.4,753.2" fill="#4379a4"/><polygon points="666.3,762.8 677.8,753.2 667.1,743.9 655.6,753.2" fill="#3f719d"/><polygon points="688.8,762.8 700.0,753.2 689.0,743.9 677.8,753.2" fill="#477ead"/><polygon points="711.2,762.8 722.2,753.2 711.0,743.9 700.0,753.2" fill="#4376a8"/><polygon points="733.7,762.8 744.4,753.2 732.9,743.9 722.2,753.2" fill="#4071a0"/><polygon points="756.2,762.8 766.6,753.2 754.9,743.9 744.4,753.2" fill="#4275a3"/><polygon points="778.7,762.8 788.9,753.2 776.8,743.9 766.6,753.2" fill="#4378a5"/><polygon points="823.7,762.8 833.3,753.2 820.7,743.9 811.1,753.2" fill="#4376a6"/><polygon points="846.2,762.8 855.5,753.2 842.6,743.9 833.3,753.2" fill="#4273a5"/><polygon points="868.7,762.8 877.7,753.2 864.6,743.9 855.5,753.2" fill="#4270a7"/><polygon points="891.2,762.8 899.9,753.2 886.5,743.9 877.7,753.2" fill="#4170a5"/><polygon points="913.7,762.8 922.1,753.2 908.5,743.9 899.9,753.2" fill="#3f6aa3"/><polygon points="598.8,762.8 611.1,753.2 601.3,743.9 588.9,753.2" fill="#4278a3"/><polygon points="801.2,762.8 811.1,753.2 798.7,743.9 788.9,753.2" fill="#598394"/><polygon points="472.2,772.6 486.3,762.8 477.9,753.2 463.8,762.8" fill="#4470ac"/><polygon points="495.0,772.6 508.8,762.8 500.1,753.2 486.3,762.8" fill="#416da7"/><polygon points="517.8,772.6 531.3,762.8 522.3,753.2 508.8,762.8" fill="#416fa4"/><polygon points="540.6,772.6 553.8,762.8 544.5,753.2 531.3,762.8" fill="#3f6e9f"/><polygon points="563.3,772.6 576.3,762.8 566.7,753.2 553.8,762.8" fill="#467bac"/><polygon points="586.1,772.6 598.8,762.8 588.9,753.2 576.3,762.8" fill="#4276a4"/><polygon points="608.9,772.6 621.3,762.8 611.1,753.2 598.8,762.8" fill="#4175a2"/><polygon points="631.7,772.6 643.8,762.8 633.4,753.2 621.3,762.8" fill="#477ead"/><polygon points="654.4,772.6 666.3,762.8 655.6,753.2 643.8,762.8" fill="#4479a8"/><polygon points="677.2,772.6 688.8,762.8 677.8,753.2 666.3,762.8" fill="#4174a3"/><polygon points="700.0,772.6 711.2,762.8 700.0,753.2 688.8,762.8" fill="#4171a4"/><polygon points="722.8,772.6 733.7,762.8 722.2,753.2 711.2,762.8" fill="#4476aa"/><polygon points="745.6,772.6 756.2,762.8 744.4,753.2 733.7,762.8" fill="#4273a4"/><polygon points="768.3,772.6 778.7,762.8 766.6,753.2 756.2,762.8" fill="#4478a8"/><polygon points="791.1,772.6 801.2,762.8 788.9,753.2 778.7,762.8" fill="#4377a6"/><polygon points="813.9,772.6 823.7,762.8 811.1,753.2 801.2,762.8" fill="#4579aa"/><polygon points="836.7,772.6 846.2,762.8 833.3,753.2 823.7,762.8" fill="#4171a4"/><polygon points="859.4,772.6 868.7,762.8 855.5,753.2 846.2,762.8" fill="#4473ab"/><polygon points="882.2,772.6 891.2,762.8 877.7,753.2 868.7,762.8" fill="#416ca7"/><polygon points="905.0,772.6 913.7,762.8 899.9,753.2 891.2,762.8" fill="#416aa7"/><polygon points="927.8,772.6 936.2,762.8 922.1,753.2 913.7,762.8" fill="#426ca8"/><polygon points="480.9,782.7 495.0,772.6 486.3,762.8 472.2,772.6" fill="#416aa7"/><polygon points="503.9,782.7 517.8,772.6 508.8,762.8 495.0,772.6" fill="#4776b2"/><polygon points="527.0,782.7 540.6,772.6 531.3,762.8 517.8,772.6" fill="#4270a7"/><polygon points="550.1,782.7 563.3,772.6 553.8,762.8 540.6,772.6" fill="#3e6b9f"/><polygon points="573.1,782.7 586.1,772.6 576.3,762.8 563.3,772.6" fill="#4477aa"/><polygon points="596.2,782.7 608.9,772.6 598.8,762.8 586.1,772.6" fill="#4275a6"/><polygon points="619.3,782.7 631.7,772.6 621.3,762.8 608.9,772.6" fill="#4478a8"/><polygon points="642.3,782.7 654.4,772.6 643.8,762.8 631.7,772.6" fill="#467bad"/><polygon points="665.4,782.7 677.2,772.6 666.3,762.8 654.4,772.6" fill="#4579ac"/><polygon points="688.5,782.7 700.0,772.6 688.8,762.8 677.2,772.6" fill="#4171a5"/><polygon points="711.5,782.7 722.8,772.6 711.2,762.8 700.0,772.6" fill="#406ca3"/><polygon points="734.6,782.7 745.6,772.6 733.7,762.8 722.8,772.6" fill="#4475ab"/><polygon points="757.7,782.7 768.3,772.6 756.2,762.8 745.6,772.6" fill="#467aae"/><polygon points="780.7,782.7 791.1,772.6 778.7,762.8 768.3,772.6" fill="#4577ab"/><polygon points="803.8,782.7 813.9,772.6 801.2,762.8 791.1,772.6" fill="#4475a9"/><polygon points="826.9,782.7 836.7,772.6 823.7,762.8 813.9,772.6" fill="#3e6a9f"/><polygon points="849.9,782.7 859.4,772.6 846.2,762.8 836.7,772.6" fill="#416da6"/><polygon points="873.0,782.7 882.2,772.6 868.7,762.8 859.4,772.6" fill="#436eab"/><polygon points="896.1,782.7 905.0,772.6 891.2,762.8 882.2,772.6" fill="#426ca9"/><polygon points="919.1,782.7 927.8,772.6 913.7,762.8 905.0,772.6" fill="#426ca9"/><polygon points="489.7,793.0 503.9,782.7 495.0,772.6 480.9,782.7" fill="#436eac"/><polygon points="513.1,793.0 527.0,782.7 517.8,772.6 503.9,782.7" fill="#436eac"/><polygon points="536.4,793.0 550.1,782.7 540.6,772.6 527.0,782.7" fill="#3f6aa4"/><polygon points="559.8,793.0 573.1,782.7 563.3,772.6 550.1,782.7" fill="#406da5"/><polygon points="583.2,793.0 596.2,782.7 586.1,772.6 573.1,782.7" fill="#406ea3"/><polygon points="606.5,793.0 619.3,782.7 608.9,772.6 596.2,782.7" fill="#4374a9"/><polygon points="629.9,793.0 642.3,782.7 631.7,772.6 619.3,782.7" fill="#4475aa"/><polygon points="653.3,793.0 665.4,782.7 654.4,772.6 642.3,782.7" fill="#4474aa"/><polygon points="676.6,793.0 688.5,782.7 677.2,772.6 665.4,782.7" fill="#4474ab"/><polygon points="700.0,793.0 711.5,782.7 700.0,772.6 688.5,782.7" fill="#426fa8"/><polygon points="723.4,793.0 734.6,782.7 722.8,772.6 711.5,782.7" fill="#3f69a5"/><polygon points="746.7,793.0 757.7,782.7 745.6,772.6 734.6,782.7" fill="#587e95"/><polygon points="770.1,793.0 780.7,782.7 768.3,772.6 757.7,782.7" fill="#4270a9"/><polygon points="793.5,793.0 803.8,782.7 791.1,772.6 780.7,782.7" fill="#4472ac"/><polygon points="816.8,793.0 826.9,782.7 813.9,772.6 803.8,782.7" fill="#4777b2"/><polygon points="840.2,793.0 849.9,782.7 836.7,772.6 826.9,782.7" fill="#416ca8"/><polygon points="863.6,793.0 873.0,782.7 859.4,772.6 849.9,782.7" fill="#4573b1"/><polygon points="886.9,793.0 896.1,782.7 882.2,772.6 873.0,782.7" fill="#436fac"/><polygon points="910.3,793.0 919.1,782.7 905.0,772.6 896.1,782.7" fill="#4470ae"/><polygon points="475.1,803.6 489.7,793.0 480.9,782.7 466.3,793.0" fill="#416ba9"/><polygon points="498.8,803.6 513.1,793.0 503.9,782.7 489.7,793.0" fill="#4470ae"/><polygon points="522.4,803.6 536.4,793.0 527.0,782.7 513.1,793.0" fill="#436fad"/><polygon points="546.1,803.6 559.8,793.0 550.1,782.7 536.4,793.0" fill="#4470ae"/><polygon points="569.8,803.6 583.2,793.0 573.1,782.7 559.8,793.0" fill="#4370ac"/><polygon points="593.5,803.6 606.5,793.0 596.2,782.7 583.2,793.0" fill="#4575b0"/><polygon points="617.1,803.6 629.9,793.0 619.3,782.7 606.5,793.0" fill="#406ca5"/><polygon points="640.8,803.6 653.3,793.0 642.3,782.7 629.9,793.0" fill="#4473ad"/><polygon points="664.5,803.6 676.6,793.0 665.4,782.7 653.3,793.0" fill="#3f6aa5"/><polygon points="688.2,803.6 700.0,793.0 688.5,782.7 676.6,793.0" fill="#4069a6"/><polygon points="711.8,803.6 723.4,793.0 711.5,782.7 700.0,793.0" fill="#4572b0"/><polygon points="735.5,803.6 746.7,793.0 734.6,782.7 723.4,793.0" fill="#4470ae"/><polygon points="759.2,803.6 770.1,793.0 757.7,782.7 746.7,793.0" fill="#4573b1"/><polygon points="782.9,803.6 793.5,793.0 780.7,782.7 770.1,793.0" fill="#4470ad"/><polygon points="806.5,803.6 816.8,793.0 803.8,782.7 793.5,793.0" fill="#416ba8"/><polygon points="830.2,803.6 840.2,793.0 826.9,782.7 816.8,793.0" fill="#436fad"/><polygon points="853.9,803.6 863.6,793.0 849.9,782.7 840.2,793.0" fill="#406aa7"/><polygon points="877.6,803.6 886.9,793.0 873.0,782.7 863.6,793.0" fill="#4775b4"/><polygon points="901.2,803.6 910.3,793.0 896.1,782.7 886.9,793.0" fill="#426eab"/><polygon points="924.9,803.6 933.7,793.0 919.1,782.7 910.3,793.0" fill="#426daa"/><polygon points="484.1,814.5 498.8,803.6 489.7,793.0 475.1,803.6" fill="#4470ae"/><polygon points="508.1,814.5 522.4,803.6 513.1,793.0 498.8,803.6" fill="#3d65a3"/><polygon points="532.1,814.5 546.1,803.6 536.4,793.0 522.4,803.6" fill="#436eac"/><polygon points="556.1,814.5 569.8,803.6 559.8,793.0 546.1,803.6" fill="#4471af"/><polygon points="580.0,814.5 593.5,803.6 583.2,793.0 569.8,803.6" fill="#4572b1"/><polygon points="604.0,814.5 617.1,803.6 606.5,793.0 593.5,803.6" fill="#4470ae"/><polygon points="628.0,814.5 640.8,803.6 629.9,793.0 617.1,803.6" fill="#4673b2"/><polygon points="652.0,814.5 664.5,803.6 653.3,793.0 640.8,803.6" fill="#4573b1"/><polygon points="676.0,814.5 688.2,803.6 676.6,793.0 664.5,803.6" fill="#436ead"/><polygon points="700.0,814.5 711.8,803.6 700.0,793.0 688.2,803.6" fill="#406aa7"/><polygon points="724.0,814.5 735.5,803.6 723.4,793.0 711.8,803.6" fill="#436fad"/><polygon points="748.0,814.5 759.2,803.6 746.7,793.0 735.5,803.6" fill="#416ba9"/><polygon points="772.0,814.5 782.9,803.6 770.1,793.0 759.2,803.6" fill="#426dab"/><polygon points="796.0,814.5 806.5,803.6 793.5,793.0 782.9,803.6" fill="#4471af"/><polygon points="820.0,814.5 830.2,803.6 816.8,793.0 806.5,803.6" fill="#4775b4"/><polygon points="843.9,814.5 853.9,803.6 840.2,793.0 830.2,803.6" fill="#4470af"/><polygon points="867.9,814.5 877.6,803.6 863.6,793.0 853.9,803.6" fill="#4877b6"/><polygon points="891.9,814.5 901.2,803.6 886.9,793.0 877.6,803.6" fill="#436fae"/><polygon points="915.9,814.5 924.9,803.6 910.3,793.0 901.2,803.6" fill="#4572b0"/></g><defs><clipPath id="mclip"><polygon points="694.3,554.8 700,537.7 709.7,533 721,529.6 742.9,524.8 753.4,528.8 766.3,533 776,533.7 785.8,547.4 795.5,565 803.6,578 813.3,599 820.3,611 831.5,629 840.5,647 831.5,660.5 809,683 782,696.5 741.5,701 716.8,694.3 687.5,678.5 674,660.5 669.5,638 667.3,615.5 674,584 683,566"/></clipPath></defs><polygon points="694.3,554.8 700,537.7 709.7,533 721,529.6 742.9,524.8 753.4,528.8 766.3,533 776,533.7 785.8,547.4 795.5,565 803.6,578 813.3,599 820.3,611 831.5,629 840.5,647 831.5,660.5 809,683 782,696.5 741.5,701 716.8,694.3 687.5,678.5 674,660.5 669.5,638 667.3,615.5 674,584 683,566" transform="translate(4,3)" fill="#2a3f55" opacity=".55"/><g clip-path="url(#mclip)" shape-rendering="crispEdges"><polygon points="746.9,526.8 754.3,522.1 746.1,517.5 738.8,522.1" fill="#626c63"/><polygon points="723.7,531.5 731.3,526.8 723.3,522.1 715.6,526.8" fill="#576158"/><polygon points="739.5,531.5 746.9,526.8 738.8,522.1 731.3,526.8" fill="#5b655c"/><polygon points="755.2,531.5 762.6,526.8 754.3,522.1 746.9,526.8" fill="#5f6960"/><polygon points="715.9,536.3 723.7,531.5 715.6,526.8 707.9,531.5" fill="#5b655c"/><polygon points="731.9,536.3 739.5,531.5 731.3,526.8 723.7,531.5" fill="#656f66"/><polygon points="747.8,536.3 755.2,531.5 746.9,526.8 739.5,531.5" fill="#5d675e"/><polygon points="763.7,536.3 771.0,531.5 762.6,526.8 755.2,531.5" fill="#616b62"/><polygon points="708.0,541.2 715.9,536.3 707.9,531.5 700.0,536.3" fill="#5b655c"/><polygon points="724.1,541.2 731.9,536.3 723.7,531.5 715.9,536.3" fill="#576158"/><polygon points="740.2,541.2 747.8,536.3 739.5,531.5 731.9,536.3" fill="#59635a"/><polygon points="756.2,541.2 763.7,536.3 755.2,531.5 747.8,536.3" fill="#59635a"/><polygon points="772.3,541.2 779.6,536.3 771.0,531.5 763.7,536.3" fill="#576158"/><polygon points="700.0,546.2 708.0,541.2 700.0,536.3 692.0,541.2" fill="#636d64"/><polygon points="716.2,546.2 724.1,541.2 715.9,536.3 708.0,541.2" fill="#59635a"/><polygon points="732.4,546.2 740.2,541.2 731.9,536.3 724.1,541.2" fill="#59635a"/><polygon points="748.6,546.2 756.2,541.2 747.8,536.3 740.2,541.2" fill="#566057"/><polygon points="764.8,546.2 772.3,541.2 763.7,536.3 756.2,541.2" fill="#5c665d"/><polygon points="781.1,546.2 788.4,541.2 779.6,536.3 772.3,541.2" fill="#5b655c"/><polygon points="691.8,551.3 700.0,546.2 692.0,541.2 683.8,546.2" fill="#5b655c"/><polygon points="708.2,551.3 716.2,546.2 708.0,541.2 700.0,546.2" fill="#566057"/><polygon points="724.5,551.3 732.4,546.2 724.1,541.2 716.2,546.2" fill="#576158"/><polygon points="740.9,551.3 748.6,546.2 740.2,541.2 732.4,546.2" fill="#5b655c"/><polygon points="757.3,551.3 764.8,546.2 756.2,541.2 748.6,546.2" fill="#5d675e"/><polygon points="773.6,551.3 781.1,546.2 772.3,541.2 764.8,546.2" fill="#5c665d"/><polygon points="790.0,551.3 797.3,546.2 788.4,541.2 781.1,546.2" fill="#576158"/><polygon points="700.0,556.5 708.2,551.3 700.0,546.2 691.8,551.3" fill="#555f56"/><polygon points="716.5,556.5 724.5,551.3 716.2,546.2 708.2,551.3" fill="#576158"/><polygon points="733.0,556.5 740.9,551.3 732.4,546.2 724.5,551.3" fill="#586259"/><polygon points="749.5,556.5 757.3,551.3 748.6,546.2 740.9,551.3" fill="#586259"/><polygon points="766.0,556.5 773.6,551.3 764.8,546.2 757.3,551.3" fill="#586259"/><polygon points="782.5,556.5 790.0,551.3 781.1,546.2 773.6,551.3" fill="#5e685f"/><polygon points="691.7,561.7 700.0,556.5 691.8,551.3 683.5,556.5" fill="#535d54"/><polygon points="708.3,561.7 716.5,556.5 708.2,551.3 700.0,556.5" fill="#576158"/><polygon points="725.0,561.7 733.0,556.5 724.5,551.3 716.5,556.5" fill="#535d54"/><polygon points="741.7,561.7 749.5,556.5 740.9,551.3 733.0,556.5" fill="#535d54"/><polygon points="758.3,561.7 766.0,556.5 757.3,551.3 749.5,556.5" fill="#555f56"/><polygon points="775.0,561.7 782.5,556.5 773.6,551.3 766.0,556.5" fill="#576158"/><polygon points="791.6,561.7 799.1,556.5 790.0,551.3 782.5,556.5" fill="#515b52"/><polygon points="683.2,567.1 691.7,561.7 683.5,556.5 675.0,561.7" fill="#525c53"/><polygon points="700.0,567.1 708.3,561.7 700.0,556.5 691.7,561.7" fill="#535d54"/><polygon points="716.8,567.1 725.0,561.7 716.5,556.5 708.3,561.7" fill="#535d54"/><polygon points="733.6,567.1 741.7,561.7 733.0,556.5 725.0,561.7" fill="#566057"/><polygon points="750.5,567.1 758.3,561.7 749.5,556.5 741.7,561.7" fill="#535d54"/><polygon points="767.3,567.1 775.0,561.7 766.0,556.5 758.3,561.7" fill="#5a645b"/><polygon points="784.1,567.1 791.6,561.7 782.5,556.5 775.0,561.7" fill="#545e55"/><polygon points="800.9,567.1 808.3,561.7 799.1,556.5 791.6,561.7" fill="#566057"/><polygon points="674.5,572.6 683.2,567.1 675.0,561.7 666.4,567.1" fill="#4e584f"/><polygon points="691.5,572.6 700.0,567.1 691.7,561.7 683.2,567.1" fill="#515b52"/><polygon points="708.5,572.6 716.8,567.1 708.3,561.7 700.0,567.1" fill="#586259"/><polygon points="725.5,572.6 733.6,567.1 725.0,561.7 716.8,567.1" fill="#5d675e"/><polygon points="742.4,572.6 750.5,567.1 741.7,561.7 733.6,567.1" fill="#576158"/><polygon points="759.4,572.6 767.3,567.1 758.3,561.7 750.5,567.1" fill="#566057"/><polygon points="776.4,572.6 784.1,567.1 775.0,561.7 767.3,567.1" fill="#535d54"/><polygon points="793.4,572.6 800.9,567.1 791.6,561.7 784.1,567.1" fill="#586259"/><polygon points="682.9,578.1 691.5,572.6 683.2,567.1 674.5,572.6" fill="#4c564d"/><polygon points="700.0,578.1 708.5,572.6 700.0,567.1 691.5,572.6" fill="#535d54"/><polygon points="717.1,578.1 725.5,572.6 716.8,567.1 708.5,572.6" fill="#515b52"/><polygon points="734.3,578.1 742.4,572.6 733.6,567.1 725.5,572.6" fill="#555f56"/><polygon points="751.4,578.1 759.4,572.6 750.5,567.1 742.4,572.6" fill="#4f5950"/><polygon points="768.6,578.1 776.4,572.6 767.3,567.1 759.4,572.6" fill="#566057"/><polygon points="785.7,578.1 793.4,572.6 784.1,567.1 776.4,572.6" fill="#515b52"/><polygon points="802.8,578.1 810.3,572.6 800.9,567.1 793.4,572.6" fill="#535d54"/><polygon points="674.0,583.8 682.9,578.1 674.5,572.6 665.7,578.1" fill="#4c564d"/><polygon points="691.3,583.8 700.0,578.1 691.5,572.6 682.9,578.1" fill="#525c53"/><polygon points="708.7,583.8 717.1,578.1 708.5,572.6 700.0,578.1" fill="#4e584f"/><polygon points="726.0,583.8 734.3,578.1 725.5,572.6 717.1,578.1" fill="#4d574e"/><polygon points="743.3,583.8 751.4,578.1 742.4,572.6 734.3,578.1" fill="#4f5950"/><polygon points="760.6,583.8 768.6,578.1 759.4,572.6 751.4,578.1" fill="#535d54"/><polygon points="777.9,583.8 785.7,578.1 776.4,572.6 768.6,578.1" fill="#505a51"/><polygon points="795.2,583.8 802.8,578.1 793.4,572.6 785.7,578.1" fill="#525c53"/><polygon points="812.5,583.8 820.0,578.1 810.3,572.6 802.8,578.1" fill="#5b655c"/><polygon points="682.5,589.6 691.3,583.8 682.9,578.1 674.0,583.8" fill="#465047"/><polygon points="700.0,589.6 708.7,583.8 700.0,578.1 691.3,583.8" fill="#535d54"/><polygon points="717.5,589.6 726.0,583.8 717.1,578.1 708.7,583.8" fill="#5b655c"/><polygon points="734.9,589.6 743.3,583.8 734.3,578.1 726.0,583.8" fill="#505a51"/><polygon points="752.4,589.6 760.6,583.8 751.4,578.1 743.3,583.8" fill="#576158"/><polygon points="769.9,589.6 777.9,583.8 768.6,578.1 760.6,583.8" fill="#576158"/><polygon points="787.4,589.6 795.2,583.8 785.7,578.1 777.9,583.8" fill="#4e584f"/><polygon points="804.8,589.6 812.5,583.8 802.8,578.1 795.2,583.8" fill="#4f5950"/><polygon points="673.5,595.5 682.5,589.6 674.0,583.8 665.1,589.6" fill="#475148"/><polygon points="691.2,595.5 700.0,589.6 691.3,583.8 682.5,589.6" fill="#515b52"/><polygon points="708.8,595.5 717.5,589.6 708.7,583.8 700.0,589.6" fill="#4d574e"/><polygon points="726.5,595.5 734.9,589.6 726.0,583.8 717.5,589.6" fill="#4e584f"/><polygon points="744.1,595.5 752.4,589.6 743.3,583.8 734.9,589.6" fill="#505a51"/><polygon points="761.7,595.5 769.9,589.6 760.6,583.8 752.4,589.6" fill="#4c564d"/><polygon points="779.4,595.5 787.4,589.6 777.9,583.8 769.9,589.6" fill="#4f5950"/><polygon points="797.0,595.5 804.8,589.6 795.2,583.8 787.4,589.6" fill="#4f5950"/><polygon points="814.7,595.5 822.3,589.6 812.5,583.8 804.8,589.6" fill="#515b52"/><polygon points="664.4,601.5 673.5,595.5 665.1,589.6 655.9,595.5" fill="#434d44"/><polygon points="682.2,601.5 691.2,595.5 682.5,589.6 673.5,595.5" fill="#475148"/><polygon points="700.0,601.5 708.8,595.5 700.0,589.6 691.2,595.5" fill="#4b554c"/><polygon points="717.8,601.5 726.5,595.5 717.5,589.6 708.8,595.5" fill="#4c564d"/><polygon points="735.6,601.5 744.1,595.5 734.9,589.6 726.5,595.5" fill="#4f5950"/><polygon points="753.4,601.5 761.7,595.5 752.4,589.6 744.1,595.5" fill="#505a51"/><polygon points="771.3,601.5 779.4,595.5 769.9,589.6 761.7,595.5" fill="#545e55"/><polygon points="789.1,601.5 797.0,595.5 787.4,589.6 779.4,595.5" fill="#515b52"/><polygon points="806.9,601.5 814.7,595.5 804.8,589.6 797.0,595.5" fill="#535d54"/><polygon points="673.0,607.7 682.2,601.5 673.5,595.5 664.4,601.5" fill="#465047"/><polygon points="691.0,607.7 700.0,601.5 691.2,595.5 682.2,601.5" fill="#515b52"/><polygon points="709.0,607.7 717.8,601.5 708.8,595.5 700.0,601.5" fill="#515b52"/><polygon points="727.0,607.7 735.6,601.5 726.5,595.5 717.8,601.5" fill="#4e584f"/><polygon points="745.0,607.7 753.4,601.5 744.1,595.5 735.6,601.5" fill="#4d574e"/><polygon points="763.0,607.7 771.3,601.5 761.7,595.5 753.4,601.5" fill="#4d574e"/><polygon points="781.0,607.7 789.1,601.5 779.4,595.5 771.3,601.5" fill="#4f5950"/><polygon points="799.0,607.7 806.9,601.5 797.0,595.5 789.1,601.5" fill="#4c564d"/><polygon points="817.0,607.7 824.7,601.5 814.7,595.5 806.9,601.5" fill="#525c53"/><polygon points="663.6,614.0 673.0,607.7 664.4,601.5 655.0,607.7" fill="#424c43"/><polygon points="681.8,614.0 691.0,607.7 682.2,601.5 673.0,607.7" fill="#4b554c"/><polygon points="700.0,614.0 709.0,607.7 700.0,601.5 691.0,607.7" fill="#4e584f"/><polygon points="718.2,614.0 727.0,607.7 717.8,601.5 709.0,607.7" fill="#525c53"/><polygon points="736.4,614.0 745.0,607.7 735.6,601.5 727.0,607.7" fill="#4b554c"/><polygon points="754.5,614.0 763.0,607.7 753.4,601.5 745.0,607.7" fill="#535d54"/><polygon points="772.7,614.0 781.0,607.7 771.3,601.5 763.0,607.7" fill="#555f56"/><polygon points="790.9,614.0 799.0,607.7 789.1,601.5 781.0,607.7" fill="#4c564d"/><polygon points="809.1,614.0 817.0,607.7 806.9,601.5 799.0,607.7" fill="#4a544b"/><polygon points="827.2,614.0 835.0,607.7 824.7,601.5 817.0,607.7" fill="#424c43"/><polygon points="672.5,620.4 681.8,614.0 673.0,607.7 663.6,614.0" fill="#4e584f"/><polygon points="690.8,620.4 700.0,614.0 691.0,607.7 681.8,614.0" fill="#485249"/><polygon points="709.2,620.4 718.2,614.0 709.0,607.7 700.0,614.0" fill="#4d574e"/><polygon points="727.5,620.4 736.4,614.0 727.0,607.7 718.2,614.0" fill="#4d574e"/><polygon points="745.9,620.4 754.5,614.0 745.0,607.7 736.4,614.0" fill="#49534a"/><polygon points="764.3,620.4 772.7,614.0 763.0,607.7 754.5,614.0" fill="#49534a"/><polygon points="782.6,620.4 790.9,614.0 781.0,607.7 772.7,614.0" fill="#535d54"/><polygon points="801.0,620.4 809.1,614.0 799.0,607.7 790.9,614.0" fill="#4e584f"/><polygon points="819.4,620.4 827.2,614.0 817.0,607.7 809.1,614.0" fill="#4b554c"/><polygon points="662.9,626.9 672.5,620.4 663.6,614.0 654.1,620.4" fill="#5b6b55"/><polygon points="681.4,626.9 690.8,620.4 681.8,614.0 672.5,620.4" fill="#434d44"/><polygon points="700.0,626.9 709.2,620.4 700.0,614.0 690.8,620.4" fill="#4d574e"/><polygon points="718.6,626.9 727.5,620.4 718.2,614.0 709.2,620.4" fill="#4f5950"/><polygon points="737.1,626.9 745.9,620.4 736.4,614.0 727.5,620.4" fill="#49534a"/><polygon points="755.7,626.9 764.3,620.4 754.5,614.0 745.9,620.4" fill="#525c53"/><polygon points="774.2,626.9 782.6,620.4 772.7,614.0 764.3,620.4" fill="#49534a"/><polygon points="792.8,626.9 801.0,620.4 790.9,614.0 782.6,620.4" fill="#49534a"/><polygon points="811.3,626.9 819.4,620.4 809.1,614.0 801.0,620.4" fill="#4e584f"/><polygon points="829.9,626.9 837.7,620.4 827.2,614.0 819.4,620.4" fill="#3f4940"/><polygon points="671.9,633.5 681.4,626.9 672.5,620.4 662.9,626.9" fill="#424c43"/><polygon points="690.6,633.5 700.0,626.9 690.8,620.4 681.4,626.9" fill="#475148"/><polygon points="709.4,633.5 718.6,626.9 709.2,620.4 700.0,626.9" fill="#4b554c"/><polygon points="728.1,633.5 737.1,626.9 727.5,620.4 718.6,626.9" fill="#4b554c"/><polygon points="746.9,633.5 755.7,626.9 745.9,620.4 737.1,626.9" fill="#485249"/><polygon points="765.6,633.5 774.2,626.9 764.3,620.4 755.7,626.9" fill="#444e45"/><polygon points="784.3,633.5 792.8,626.9 782.6,620.4 774.2,626.9" fill="#4a544b"/><polygon points="803.1,633.5 811.3,626.9 801.0,620.4 792.8,626.9" fill="#4d574e"/><polygon points="821.8,633.5 829.9,626.9 819.4,620.4 811.3,626.9" fill="#465047"/><polygon points="840.6,633.5 848.4,626.9 837.7,620.4 829.9,626.9" fill="#a49c40"/><polygon points="662.1,640.3 671.9,633.5 662.9,626.9 653.1,633.5" fill="#aba343"/><polygon points="681.1,640.3 690.6,633.5 681.4,626.9 671.9,633.5" fill="#465047"/><polygon points="700.0,640.3 709.4,633.5 700.0,626.9 690.6,633.5" fill="#475148"/><polygon points="718.9,640.3 728.1,633.5 718.6,626.9 709.4,633.5" fill="#4e584f"/><polygon points="737.9,640.3 746.9,633.5 737.1,626.9 728.1,633.5" fill="#465047"/><polygon points="756.8,640.3 765.6,633.5 755.7,626.9 746.9,633.5" fill="#475148"/><polygon points="775.8,640.3 784.3,633.5 774.2,626.9 765.6,633.5" fill="#444e45"/><polygon points="794.7,640.3 803.1,633.5 792.8,626.9 784.3,633.5" fill="#485249"/><polygon points="813.6,640.3 821.8,633.5 811.3,626.9 803.1,633.5" fill="#475148"/><polygon points="832.6,640.3 840.6,633.5 829.9,626.9 821.8,633.5" fill="#5c6c56"/><polygon points="671.3,647.3 681.1,640.3 671.9,633.5 662.1,640.3" fill="#9e963d"/><polygon points="690.4,647.3 700.0,640.3 690.6,633.5 681.1,640.3" fill="#49534a"/><polygon points="709.6,647.3 718.9,640.3 709.4,633.5 700.0,640.3" fill="#4a544b"/><polygon points="728.7,647.3 737.9,640.3 728.1,633.5 718.9,640.3" fill="#465047"/><polygon points="747.9,647.3 756.8,640.3 746.9,633.5 737.9,640.3" fill="#485249"/><polygon points="767.0,647.3 775.8,640.3 765.6,633.5 756.8,640.3" fill="#475148"/><polygon points="786.1,647.3 794.7,640.3 784.3,633.5 775.8,640.3" fill="#4a544b"/><polygon points="805.3,647.3 813.6,640.3 803.1,633.5 794.7,640.3" fill="#4f5950"/><polygon points="824.4,647.3 832.6,640.3 821.8,633.5 813.6,640.3" fill="#566454"/><polygon points="843.6,647.3 851.5,640.3 840.6,633.5 832.6,640.3" fill="#b08f2c"/><polygon points="680.7,654.4 690.4,647.3 681.1,640.3 671.3,647.3" fill="#8e984a"/><polygon points="700.0,654.4 709.6,647.3 700.0,640.3 690.4,647.3" fill="#49534a"/><polygon points="719.3,654.4 728.7,647.3 718.9,640.3 709.6,647.3" fill="#4e584f"/><polygon points="738.7,654.4 747.9,647.3 737.9,640.3 728.7,647.3" fill="#4a544b"/><polygon points="758.0,654.4 767.0,647.3 756.8,640.3 747.9,647.3" fill="#454f46"/><polygon points="777.4,654.4 786.1,647.3 775.8,640.3 767.0,647.3" fill="#49534a"/><polygon points="796.7,654.4 805.3,647.3 794.7,640.3 786.1,647.3" fill="#475148"/><polygon points="816.1,654.4 824.4,647.3 813.6,640.3 805.3,647.3" fill="#4d5b4b"/><polygon points="835.4,654.4 843.6,647.3 832.6,640.3 824.4,647.3" fill="#b4983a"/><polygon points="670.7,661.6 680.7,654.4 671.3,647.3 661.3,654.4" fill="#aa9032"/><polygon points="690.2,661.6 700.0,654.4 690.4,647.3 680.7,654.4" fill="#505e4e"/><polygon points="709.8,661.6 719.3,654.4 709.6,647.3 700.0,654.4" fill="#465047"/><polygon points="729.3,661.6 738.7,654.4 728.7,647.3 719.3,654.4" fill="#434d44"/><polygon points="748.9,661.6 758.0,654.4 747.9,647.3 738.7,654.4" fill="#475148"/><polygon points="768.5,661.6 777.4,654.4 767.0,647.3 758.0,654.4" fill="#49534a"/><polygon points="788.0,661.6 796.7,654.4 786.1,647.3 777.4,654.4" fill="#4a544b"/><polygon points="807.6,661.6 816.1,654.4 805.3,647.3 796.7,654.4" fill="#5a6a54"/><polygon points="827.1,661.6 835.4,654.4 824.4,647.3 816.1,654.4" fill="#a58b2f"/><polygon points="846.7,661.6 854.8,654.4 843.6,647.3 835.4,654.4" fill="#ba9931"/><polygon points="680.2,669.1 690.2,661.6 680.7,654.4 670.7,661.6" fill="#b99d3c"/><polygon points="700.0,669.1 709.8,661.6 700.0,654.4 690.2,661.6" fill="#9b9b44"/><polygon points="719.8,669.1 729.3,661.6 719.3,654.4 709.8,661.6" fill="#515b52"/><polygon points="739.5,669.1 748.9,661.6 738.7,654.4 729.3,661.6" fill="#454f46"/><polygon points="759.3,669.1 768.5,661.6 758.0,654.4 748.9,661.6" fill="#4a544b"/><polygon points="779.1,669.1 788.0,661.6 777.4,654.4 768.5,661.6" fill="#485249"/><polygon points="798.9,669.1 807.6,661.6 796.7,654.4 788.0,661.6" fill="#5b6b55"/><polygon points="818.6,669.1 827.1,661.6 816.1,654.4 807.6,661.6" fill="#8b9548"/><polygon points="838.4,669.1 846.7,661.6 835.4,654.4 827.1,661.6" fill="#a2882e"/><polygon points="690.0,676.6 700.0,669.1 690.2,661.6 680.2,669.1" fill="#ad8c2b"/><polygon points="710.0,676.6 719.8,669.1 709.8,661.6 700.0,669.1" fill="#7c8c52"/><polygon points="730.0,676.6 739.5,669.1 729.3,661.6 719.8,669.1" fill="#4d5b4b"/><polygon points="750.0,676.6 759.3,669.1 748.9,661.6 739.5,669.1" fill="#5e6e58"/><polygon points="770.0,676.6 779.1,669.1 768.5,661.6 759.3,669.1" fill="#4e5c4c"/><polygon points="790.0,676.6 798.9,669.1 788.0,661.6 779.1,669.1" fill="#7d8d52"/><polygon points="810.0,676.6 818.6,669.1 807.6,661.6 798.9,669.1" fill="#9a923b"/><polygon points="830.0,676.6 838.4,669.1 827.1,661.6 818.6,669.1" fill="#c2a237"/><polygon points="679.8,684.4 690.0,676.6 680.2,669.1 670.0,676.6" fill="#bf9f35"/><polygon points="700.0,684.4 710.0,676.6 700.0,669.1 690.0,676.6" fill="#ba9e3d"/><polygon points="720.2,684.4 730.0,676.6 719.8,669.1 710.0,676.6" fill="#7b8b51"/><polygon points="740.4,684.4 750.0,676.6 739.5,669.1 730.0,676.6" fill="#a39b3f"/><polygon points="760.7,684.4 770.0,676.6 759.3,669.1 750.0,676.6" fill="#7b8b51"/><polygon points="780.9,684.4 790.0,676.6 779.1,669.1 770.0,676.6" fill="#809054"/><polygon points="801.1,684.4 810.0,676.6 798.9,669.1 790.0,676.6" fill="#ae8d2b"/><polygon points="821.3,684.4 830.0,676.6 818.6,669.1 810.0,676.6" fill="#b5942f"/><polygon points="689.8,692.3 700.0,684.4 690.0,676.6 679.8,684.4" fill="#a68c30"/><polygon points="710.2,692.3 720.2,684.4 710.0,676.6 700.0,684.4" fill="#b39739"/><polygon points="730.7,692.3 740.4,684.4 730.0,676.6 720.2,684.4" fill="#8e984a"/><polygon points="751.1,692.3 760.7,684.4 750.0,676.6 740.4,684.4" fill="#788850"/><polygon points="771.6,692.3 780.9,684.4 770.0,676.6 760.7,684.4" fill="#999943"/><polygon points="792.0,692.3 801.1,684.4 790.0,676.6 780.9,684.4" fill="#ba9a33"/><polygon points="812.5,692.3 821.3,684.4 810.0,676.6 801.1,684.4" fill="#bf9f35"/><polygon points="700.0,700.4 710.2,692.3 700.0,684.4 689.8,692.3" fill="#ae9434"/><polygon points="720.7,700.4 730.7,692.3 720.2,684.4 710.2,692.3" fill="#bda13e"/><polygon points="741.4,700.4 751.1,692.3 740.4,684.4 730.7,692.3" fill="#b89c3c"/><polygon points="762.0,700.4 771.6,692.3 760.7,684.4 751.1,692.3" fill="#bc9c34"/><polygon points="782.7,700.4 792.0,692.3 780.9,684.4 771.6,692.3" fill="#b89730"/><polygon points="803.4,700.4 812.5,692.3 801.1,684.4 792.0,692.3" fill="#9d832b"/><polygon points="731.4,708.7 741.4,700.4 730.7,692.3 720.7,700.4" fill="#b29639"/><polygon points="752.3,708.7 762.0,700.4 751.1,692.3 741.4,700.4" fill="#b79b3b"/><polygon points="773.2,708.7 782.7,700.4 771.6,692.3 762.0,700.4" fill="#ba9a33"/><polygon points="742.3,717.2 752.3,708.7 741.4,700.4 731.4,708.7" fill="#ad8c2b"/></g><g shape-rendering="auto" font-family="Liberation Sans" font-size="5.2" fill="#f0f0f0"><path d="M729 603 L757 627" stroke="#111" stroke-width=".7"/><rect x="718" y="577.0" width="45.4" height="5.2" rx="1.5" fill="#0d0d0d"/><text x="719.5" y="581.2">Name: 02_Cleaned</text><rect x="718" y="582.2" width="45.4" height="5.2" rx="1.5" fill="#0d0d0d"/><text x="719.5" y="586.4000000000001">Surface: Minimum</text><rect x="718" y="587.4" width="58.6" height="5.2" rx="1.5" fill="#0d0d0d"/><text x="719.5" y="591.6">Easting: 436 600.45 m</text><rect x="718" y="592.6" width="66.6" height="5.2" rx="1.5" fill="#0d0d0d"/><text x="719.5" y="596.8000000000001">Northing: 6 471 143.45 m</text><rect x="718" y="597.8" width="40.1" height="5.2" rx="1.5" fill="#0d0d0d"/><text x="719.5" y="602.0">Depth: 82.31 m</text><path d="M754.5 619 L765 627 L757 637 L747 629 Z" fill="none" stroke="#1a1a10" stroke-width="2.4"/><path d="M754.5 619 L765 627 L757 637 L747 629 Z" fill="none" stroke="#b8921c" stroke-width="1.2"/></g><g shape-rendering="auto" font-family="Liberation Sans" font-size="4.8" fill="#56626c" stroke="#2c3a48" stroke-width=".25"><text x="495" y="695.5">02_Cleaned</text><text x="495" y="701.5">Depth (m)</text><rect x="493.5" y="703.5" width="6.5" height="5.9" fill="#7f8f86"/><text x="502" y="707.8">82.35</text><rect x="493.5" y="709.4" width="6.5" height="5.9" fill="#86a193"/><text x="502" y="713.6999999999999">82.37</text><rect x="493.5" y="715.3" width="6.5" height="5.9" fill="#7fb1a6"/><text x="502" y="719.5999999999999">82.39</text><rect x="493.5" y="721.2" width="6.5" height="5.9" fill="#9cc27f"/><text x="502" y="725.5">82.41</text><rect x="493.5" y="727.1" width="6.5" height="5.9" fill="#cfcf5c"/><text x="502" y="731.4">82.43</text><rect x="493.5" y="733.0" width="6.5" height="5.9" fill="#ddc04a"/><text x="502" y="737.3">82.45</text><rect x="493.5" y="738.9" width="6.5" height="5.9" fill="#d6a835"/><text x="502" y="743.1999999999999">82.47</text><rect x="493.5" y="744.8" width="6.5" height="5.9" fill="#cd9b2b"/><text x="502" y="749.0999999999999">82.49</text><rect x="493.5" y="750.7" width="6.5" height="5.9" fill="#d3a21f"/><text x="502" y="755.0">82.51</text><rect x="493.5" y="756.6" width="6.5" height="5.9" fill="#86a48c"/><text x="502" y="760.9">82.53</text><rect x="493.5" y="762.5" width="6.5" height="5.9" fill="#72a2c8"/><text x="502" y="766.8">82.55</text><rect x="493.5" y="768.4" width="6.5" height="5.9" fill="#6a92d2"/><text x="502" y="772.6999999999999">82.57</text><rect x="493.5" y="774.3" width="6.5" height="5.9" fill="#5b82d1"/><text x="502" y="778.5999999999999">82.59</text><rect x="493.5" y="780.2" width="6.5" height="5.9" fill="#5272c9"/><text x="502" y="784.5">82.61</text><rect x="493.5" y="786.1" width="6.5" height="5.9" fill="#4a62c0"/><text x="502" y="790.4">82.63</text></g></svg>
</div>
<div class="a" style="left:912px;top:445px;width:368px;height:355px;background:#000"></div>
<div class="a" style="left:912px;top:789.5px;width:368px;height:9.5px;background:#191c1e"></div>
<svg class="a" style="left:912px;top:445px" width="368" height="345" viewBox="912 445 368 345"><defs><clipPath id="shp"><polygon points="966.4,589.5 972.9,585.4 987.5,582.2 1008.6,580.0 1024.8,581.4 1044.3,579.7 1068.7,577.8 1078.5,578.1 1098.0,586.2 1106.2,591.0 1127.4,600.9 1151.7,604.1 1166.3,613.9 1184.2,626.9 1195.6,631.7 1215.0,631.0 1233.0,633.4 1242.7,639.8 1252.4,643.1 1242.7,643.9 1239.4,646.3 1240.3,658.5 1233.0,659.3 1211.8,660.2 1195.6,657.7 1181.0,658.5 1159.8,663.4 1143.6,665.8 1135.5,662.6 1130.6,664.2 1129.8,672.3 1134.7,677.2 1130.6,683.7 1119.2,690.2 1106.2,693.5 1090.0,695.9 1076.8,695.9 1052.5,692.6 1031.3,684.5 1026.5,682.0 1021.6,670.7 1015.0,654.5 1008.6,640.0 1007.0,634.2 995.6,622.0 981.0,613.0 969.6,597.6"/></clipPath><linearGradient id="sg" x1="0" y1="0" x2="1" y2="0"><stop offset="0" stop-color="#9d9035"/><stop offset="0.35" stop-color="#a89a3a"/><stop offset="0.6" stop-color="#a69839"/><stop offset="1" stop-color="#a29538"/></linearGradient><filter id="bl3" x="-30%" y="-30%" width="160%" height="160%"><feGaussianBlur stdDeviation="4"/></filter><filter id="bl2" x="-20%" y="-20%" width="140%" height="140%"><feGaussianBlur stdDeviation="2"/></filter><filter id="bl1" x="-20%" y="-20%" width="140%" height="140%"><feGaussianBlur stdDeviation="0.5"/></filter><filter id="jag" x="-5%" y="-5%" width="110%" height="110%"><feTurbulence type="turbulence" baseFrequency="0.35" numOctaves="1" seed="4" result="t"/><feDisplacementMap in="SourceGraphic" in2="t" scale="2.2"/></filter></defs><g filter="url(#jag)"><polygon points="966.4,589.5 972.9,585.4 987.5,582.2 1008.6,580.0 1024.8,581.4 1044.3,579.7 1068.7,577.8 1078.5,578.1 1098.0,586.2 1106.2,591.0 1127.4,600.9 1151.7,604.1 1166.3,613.9 1184.2,626.9 1195.6,631.7 1215.0,631.0 1233.0,633.4 1242.7,639.8 1252.4,643.1 1242.7,643.9 1239.4,646.3 1240.3,658.5 1233.0,659.3 1211.8,660.2 1195.6,657.7 1181.0,658.5 1159.8,663.4 1143.6,665.8 1135.5,662.6 1130.6,664.2 1129.8,672.3 1134.7,677.2 1130.6,683.7 1119.2,690.2 1106.2,693.5 1090.0,695.9 1076.8,695.9 1052.5,692.6 1031.3,684.5 1026.5,682.0 1021.6,670.7 1015.0,654.5 1008.6,640.0 1007.0,634.2 995.6,622.0 981.0,613.0 969.6,597.6" fill="url(#sg)"/><g clip-path="url(#shp)"><path d="M966 589 L1000 581 L1078 578 L1098 588 L1085 604 L1060 606 L1020 610 L983 613 Z" fill="#b2a444" filter="url(#bl3)"/><path d="M975 590 L1030 584 L1070 582 L1060 595 L1010 600 Z" fill="#b8aa48" filter="url(#bl3)" opacity=".7"/><path d="M982 614 L1022 611 L1068 606 L1110 606 L1160 612 L1170 622 L1120 628 L1070 628 L1030 630 L1000 626 Z" fill="#8f8232" filter="url(#bl3)" opacity=".75"/><path d="M1030 645 L1075 632 L1110 640 L1125 670 L1105 692 L1055 692 L1035 670 Z" fill="#b6a845" filter="url(#bl3)"/><path d="M995 622 L1010 640 L1022 670 L1030 686 L1040 684 L1028 650 L1012 624 Z" fill="#8a7e30" filter="url(#bl3)" opacity=".8"/><path d="M1115 640 L1132 650 L1135 680 L1122 692 L1110 670 Z" fill="#877a2f" filter="url(#bl3)" opacity=".8"/><path d="M1120 628 L1150 620 L1190 640 L1235 645 L1238 657 L1195 656 L1150 662 L1130 648 Z" fill="#b4a644" filter="url(#bl3)" opacity=".85"/><ellipse cx="1105" cy="614" rx="9" ry="5" fill="#bcae4a" filter="url(#bl2)" opacity=".45"/><ellipse cx="1148" cy="612" rx="8" ry="5" fill="#bcae4a" filter="url(#bl2)" opacity=".45"/><ellipse cx="1215" cy="640" rx="10" ry="4" fill="#bcad4a" filter="url(#bl2)" opacity=".45"/><ellipse cx="1088" cy="630" rx="10" ry="5" fill="#bdaf4b" filter="url(#bl2)" opacity=".45"/><g fill="none" stroke="#554b1e" filter="url(#bl1)"><path d="M982.5 613.8 C985.4 613.8 993.3 614.2 1000.0 613.8 C1006.7 613.3 1015.0 612.1 1022.5 611.2 C1030.0 610.4 1037.5 609.6 1045.0 608.8 C1052.5 607.9 1060.8 605.8 1067.5 606.2 C1074.2 606.7 1082.1 610.4 1085.0 611.2" stroke-width="1.1" opacity="0.9"/><path d="M1076.0 595.0 C1078.3 595.8 1083.9 598.8 1090.0 600.0 C1096.1 601.2 1104.2 601.5 1112.5 602.5 C1120.8 603.5 1132.5 604.6 1140.0 606.0 C1147.5 607.4 1154.6 610.2 1157.5 611.0" stroke-width="0.9" opacity="0.8"/><path d="M1007.5 620.0 C1009.6 620.8 1015.8 622.5 1020.0 625.0 C1024.2 627.5 1028.8 632.1 1032.5 635.0 C1036.2 637.9 1040.8 641.2 1042.5 642.5" stroke-width="0.8" opacity="0.7"/><path d="M1045.0 617.5 C1047.5 616.9 1054.2 613.3 1060.0 613.8 C1065.8 614.2 1073.3 618.0 1080.0 620.0 C1086.7 622.0 1093.3 625.0 1100.0 626.0 C1106.7 627.0 1116.7 626.0 1120.0 626.0" stroke-width="0.9" opacity="0.75"/><path d="M1110.0 622.5 C1112.5 622.9 1119.2 623.8 1125.0 625.0 C1130.8 626.2 1138.3 627.9 1145.0 630.0 C1151.7 632.1 1157.5 635.0 1165.0 637.5 C1172.5 640.0 1181.7 642.5 1190.0 645.0 C1198.3 647.5 1207.9 650.2 1215.0 652.5 C1222.1 654.8 1229.6 657.7 1232.5 658.8" stroke-width="1.0" opacity="0.85"/><path d="M1140.0 625.0 C1143.3 626.2 1153.3 630.0 1160.0 632.5 C1166.7 635.0 1173.3 637.8 1180.0 640.0 C1186.7 642.2 1191.7 643.1 1200.0 646.0 C1208.3 648.9 1225.0 655.6 1230.0 657.5" stroke-width="0.8" opacity="0.6"/><path d="M1105.0 595.0 C1107.5 596.2 1114.2 600.4 1120.0 602.5 C1125.8 604.6 1134.2 606.7 1140.0 607.5 C1145.8 608.3 1152.5 607.5 1155.0 607.5" stroke-width="0.7" opacity="0.5"/><path d="M1010.0 635.0 C1011.2 637.1 1015.4 643.3 1017.5 647.5 C1019.6 651.7 1021.7 657.9 1022.5 660.0" stroke-width="0.7" opacity="0.5"/></g><g fill="none" stroke="#c8ba58" filter="url(#bl1)" opacity=".45"><path d="M982.5 612.5 C985.4 612.5 993.3 612.9 1000.0 612.5 C1006.7 612.0 1015.0 610.8 1022.5 610.0 C1030.0 609.1 1037.5 608.3 1045.0 607.5 C1052.5 606.6 1060.8 604.5 1067.5 605.0 C1074.2 605.4 1082.1 609.1 1085.0 610.0" stroke-width=".9"/><path d="M1076.0 593.7 C1078.3 594.5 1083.9 597.5 1090.0 598.7 C1096.1 600.0 1104.2 600.2 1112.5 601.2 C1120.8 602.2 1132.5 603.3 1140.0 604.7 C1147.5 606.1 1154.6 608.9 1157.5 609.7" stroke-width=".9"/><path d="M1007.5 618.7 C1009.6 619.5 1015.8 621.2 1020.0 623.7 C1024.2 626.2 1028.8 630.8 1032.5 633.7 C1036.2 636.6 1040.8 640.0 1042.5 641.2" stroke-width=".9"/><path d="M1045.0 616.2 C1047.5 615.6 1054.2 612.0 1060.0 612.5 C1065.8 612.9 1073.3 616.7 1080.0 618.7 C1086.7 620.7 1093.3 623.7 1100.0 624.7 C1106.7 625.7 1116.7 624.7 1120.0 624.7" stroke-width=".9"/><path d="M1110.0 621.2 C1112.5 621.6 1119.2 622.5 1125.0 623.7 C1130.8 625.0 1138.3 626.6 1145.0 628.7 C1151.7 630.8 1157.5 633.7 1165.0 636.2 C1172.5 638.7 1181.7 641.2 1190.0 643.7 C1198.3 646.2 1207.9 648.9 1215.0 651.2 C1222.1 653.5 1229.6 656.4 1232.5 657.5" stroke-width=".9"/></g><ellipse cx="1050" cy="680" rx="3" ry="2.5" fill="#15120a" filter="url(#bl1)"/><path d="M1042 672 Q1052 668 1060 676" fill="none" stroke="#6a5e26" stroke-width="1.2" filter="url(#bl1)"/><circle cx="1035" cy="643" r=".55" fill="#5e5420"/><circle cx="1072" cy="649" r=".55" fill="#5e5420"/><circle cx="1142" cy="588" r=".55" fill="#5e5420"/><circle cx="974" cy="676" r=".55" fill="#5e5420"/><circle cx="1041" cy="607" r=".55" fill="#5e5420"/><circle cx="1244" cy="634" r=".55" fill="#5e5420"/><circle cx="1200" cy="635" r=".55" fill="#5e5420"/><circle cx="1146" cy="597" r=".55" fill="#5e5420"/><circle cx="1145" cy="680" r=".55" fill="#5e5420"/><circle cx="1114" cy="665" r=".55" fill="#5e5420"/><circle cx="1155" cy="587" r=".55" fill="#5e5420"/><circle cx="1179" cy="648" r=".55" fill="#5e5420"/><circle cx="1053" cy="584" r=".55" fill="#5e5420"/><circle cx="1208" cy="634" r=".55" fill="#5e5420"/><circle cx="1168" cy="681" r=".55" fill="#5e5420"/><circle cx="1166" cy="686" r=".55" fill="#5e5420"/><circle cx="1079" cy="672" r=".55" fill="#5e5420"/><circle cx="1092" cy="688" r=".55" fill="#5e5420"/><circle cx="1212" cy="591" r=".55" fill="#5e5420"/><circle cx="1007" cy="605" r=".55" fill="#5e5420"/><circle cx="1236" cy="630" r=".55" fill="#5e5420"/><circle cx="1142" cy="615" r=".55" fill="#5e5420"/><circle cx="1109" cy="624" r=".55" fill="#5e5420"/><circle cx="1067" cy="647" r=".55" fill="#5e5420"/><circle cx="1131" cy="684" r=".55" fill="#5e5420"/><circle cx="1158" cy="687" r=".55" fill="#5e5420"/><circle cx="1206" cy="694" r=".55" fill="#5e5420"/><circle cx="1155" cy="599" r=".55" fill="#5e5420"/><circle cx="1207" cy="691" r=".55" fill="#5e5420"/><circle cx="1219" cy="645" r=".55" fill="#5e5420"/><circle cx="1166" cy="604" r=".55" fill="#5e5420"/><circle cx="1199" cy="646" r=".55" fill="#5e5420"/><circle cx="1048" cy="587" r=".55" fill="#5e5420"/><circle cx="1205" cy="694" r=".55" fill="#5e5420"/><circle cx="994" cy="672" r=".55" fill="#5e5420"/><circle cx="1083" cy="597" r=".55" fill="#5e5420"/><circle cx="1051" cy="668" r=".55" fill="#5e5420"/><circle cx="1210" cy="585" r=".55" fill="#5e5420"/><circle cx="1139" cy="585" r=".55" fill="#5e5420"/><circle cx="1168" cy="618" r=".55" fill="#5e5420"/><circle cx="1212" cy="693" r=".55" fill="#5e5420"/><circle cx="1109" cy="695" r=".55" fill="#5e5420"/><circle cx="1055" cy="589" r=".55" fill="#5e5420"/><circle cx="1135" cy="584" r=".55" fill="#5e5420"/><circle cx="1024" cy="627" r=".55" fill="#5e5420"/><circle cx="1138" cy="598" r=".55" fill="#5e5420"/><circle cx="982" cy="680" r=".55" fill="#5e5420"/><circle cx="1056" cy="690" r=".55" fill="#5e5420"/><circle cx="1217" cy="623" r=".55" fill="#5e5420"/><circle cx="1097" cy="640" r=".55" fill="#5e5420"/><circle cx="1147" cy="648" r=".55" fill="#5e5420"/><circle cx="1124" cy="651" r=".55" fill="#5e5420"/><circle cx="1229" cy="638" r=".55" fill="#5e5420"/><circle cx="1089" cy="663" r=".55" fill="#5e5420"/><circle cx="1035" cy="615" r=".55" fill="#5e5420"/><circle cx="1239" cy="640" r=".55" fill="#5e5420"/><circle cx="1121" cy="581" r=".55" fill="#5e5420"/><circle cx="1084" cy="647" r=".55" fill="#5e5420"/><circle cx="976" cy="651" r=".55" fill="#5e5420"/><circle cx="1144" cy="587" r=".55" fill="#5e5420"/><circle cx="1143" cy="634" r=".55" fill="#5e5420"/><circle cx="1157" cy="621" r=".55" fill="#5e5420"/><circle cx="1164" cy="665" r=".55" fill="#5e5420"/><circle cx="976" cy="587" r=".55" fill="#5e5420"/><circle cx="1156" cy="691" r=".55" fill="#5e5420"/><circle cx="1039" cy="632" r=".55" fill="#5e5420"/><circle cx="1133" cy="617" r=".55" fill="#5e5420"/><circle cx="1070" cy="616" r=".55" fill="#5e5420"/><circle cx="1072" cy="648" r=".55" fill="#5e5420"/><circle cx="1053" cy="623" r=".55" fill="#5e5420"/><circle cx="1182" cy="583" r=".55" fill="#5e5420"/><circle cx="1127" cy="665" r=".55" fill="#5e5420"/><circle cx="1055" cy="606" r=".55" fill="#5e5420"/><circle cx="1191" cy="607" r=".55" fill="#5e5420"/><circle cx="1022" cy="630" r=".55" fill="#5e5420"/><circle cx="1162" cy="592" r=".55" fill="#5e5420"/><circle cx="1059" cy="618" r=".55" fill="#5e5420"/><circle cx="1199" cy="630" r=".55" fill="#5e5420"/><circle cx="1205" cy="599" r=".55" fill="#5e5420"/><circle cx="1063" cy="655" r=".55" fill="#5e5420"/><circle cx="1213" cy="632" r=".55" fill="#5e5420"/><circle cx="1032" cy="594" r=".55" fill="#5e5420"/><circle cx="1116" cy="602" r=".55" fill="#5e5420"/><circle cx="1192" cy="676" r=".55" fill="#5e5420"/><circle cx="1020" cy="612" r=".55" fill="#5e5420"/><circle cx="1192" cy="654" r=".55" fill="#5e5420"/><circle cx="1192" cy="620" r=".55" fill="#5e5420"/><circle cx="1006" cy="614" r=".55" fill="#5e5420"/><circle cx="1188" cy="611" r=".55" fill="#5e5420"/><circle cx="1065" cy="628" r=".55" fill="#5e5420"/><circle cx="1085" cy="627" r=".55" fill="#5e5420"/><circle cx="1223" cy="598" r=".55" fill="#5e5420"/><circle cx="971" cy="688" r=".55" fill="#5e5420"/><circle cx="1212" cy="693" r=".55" fill="#5e5420"/><circle cx="1089" cy="689" r=".55" fill="#5e5420"/><circle cx="1225" cy="606" r=".55" fill="#5e5420"/><circle cx="1175" cy="676" r=".55" fill="#5e5420"/><circle cx="1152" cy="640" r=".55" fill="#5e5420"/><circle cx="1049" cy="619" r=".55" fill="#5e5420"/><circle cx="1033" cy="588" r=".55" fill="#5e5420"/><circle cx="1132" cy="613" r=".55" fill="#5e5420"/><circle cx="1193" cy="585" r=".55" fill="#5e5420"/><circle cx="1218" cy="660" r=".55" fill="#5e5420"/><circle cx="1224" cy="683" r=".55" fill="#5e5420"/><circle cx="1217" cy="646" r=".55" fill="#5e5420"/><circle cx="974" cy="666" r=".55" fill="#5e5420"/><circle cx="1017" cy="614" r=".55" fill="#5e5420"/><circle cx="1152" cy="640" r=".55" fill="#5e5420"/><circle cx="1084" cy="688" r=".55" fill="#5e5420"/><circle cx="1138" cy="619" r=".55" fill="#5e5420"/></g></g></svg>
</body></html>
